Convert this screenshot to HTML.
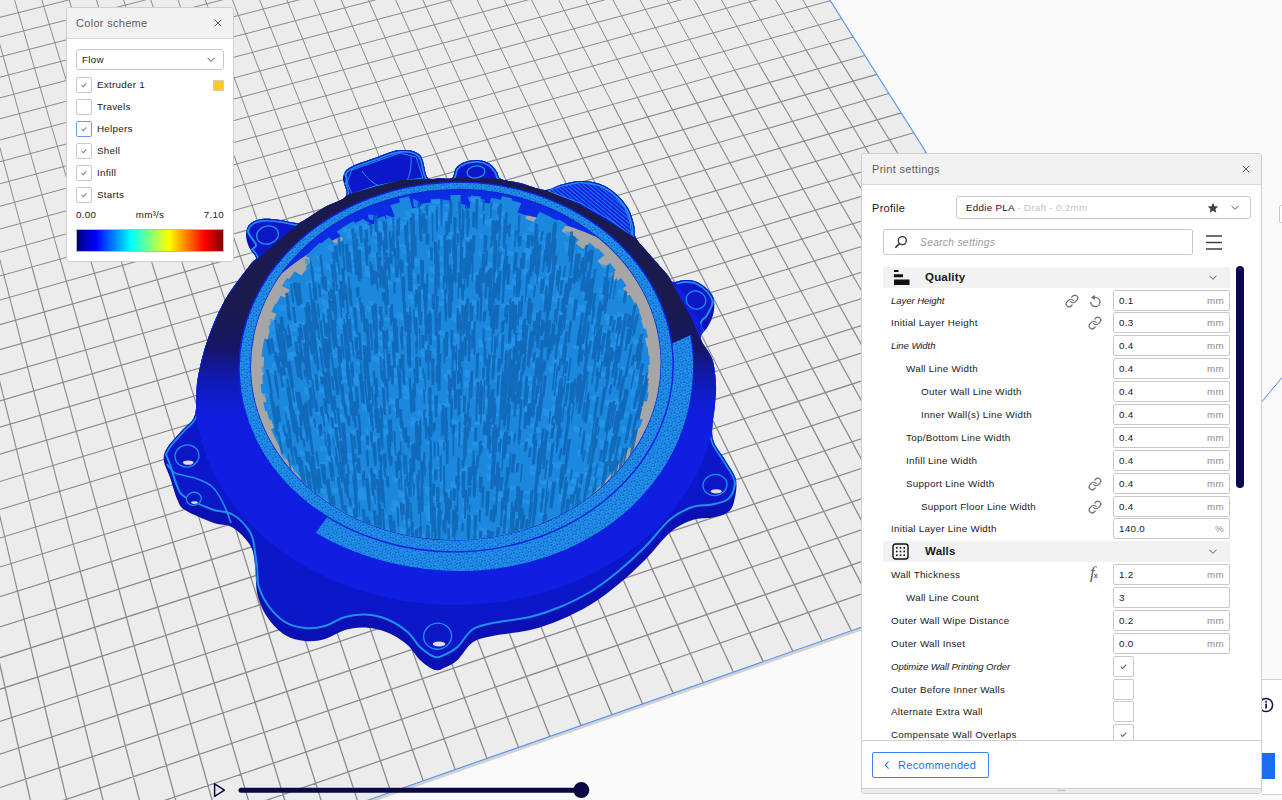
<!DOCTYPE html>
<html><head><meta charset="utf-8"><title>Cura preview</title>
<style>
html,body{margin:0;padding:0;}
body{width:1282px;height:800px;overflow:hidden;position:relative;background:#fafafa;font-family:"Liberation Sans",sans-serif;font-size:9.8px;letter-spacing:.28px;color:#191919;}
#scene{position:absolute;left:0;top:0;display:block;}
.abs{position:absolute;}
.panel{position:absolute;background:#fff;border:1px solid #cfcfcf;border-radius:3px;box-sizing:border-box;overflow:hidden;}
.phead{position:absolute;left:0;top:0;right:0;background:#f2f2f2;border-bottom:1px solid #d6d6d6;box-sizing:border-box;}
.ptitle{position:absolute;font-size:11px;letter-spacing:.3px;color:#5c5c5c;white-space:nowrap;}
.t{position:absolute;white-space:nowrap;line-height:12px;height:12px;}
.it{font-style:italic;font-size:9.6px;letter-spacing:-.08px;}
.cb{position:absolute;width:16px;height:16px;box-sizing:border-box;border:1px solid #c9c9c9;border-radius:2px;background:#fff;}
.cb svg,.cb2 svg{position:absolute;left:0;top:0;}
.cb2{position:absolute;width:21px;height:21px;box-sizing:border-box;border:1px solid #c9c9c9;border-radius:2px;background:#fff;}
.inp{position:absolute;left:251px;width:117px;height:21px;box-sizing:border-box;border:1px solid #c9c9c9;border-radius:2px;background:#fff;}
.inp .v{position:absolute;left:5px;top:4px;line-height:12px;color:#191919;}
.inp .u{position:absolute;right:5px;top:4px;line-height:12px;color:#8c8c8c;}
.cat{position:absolute;left:21px;width:347px;height:21px;background:#f2f2f2;}
.cat b{position:absolute;left:42px;top:4px;font-size:11.5px;line-height:13px;letter-spacing:.2px;color:#191919;}
.ic{position:absolute;}

</style></head><body>
<svg id="scene" width="1282" height="800" viewBox="0 0 1282 800">
<rect width="1282" height="800" fill="#fafafa"/>
<path d="M-460.6 1090.6 L1159.8 522.6 L1159.8 526.1 L-460.6 1094.1Z" fill="#d2d2d2"/>
<path d="M-460.6 1090.6 L1159.8 522.6 L625.4 -323.9 L-535.2 -55.9Z" fill="#ececec"/>
<path d="M-421.9 1077.1L-447.8 737.6M-383.5 1063.6L-413.1 726.6M-345.4 1050.2L-378.5 715.8M-307.5 1037L-344.2 705M-270 1023.8L-310.2 694.2M-232.8 1010.8L-276.4 683.6M-195.8 997.8L-242.8 673M-159.2 985L-209.5 662.6M-122.8 972.2L-176.4 652.1M-86.7 959.6L-143.5 641.8M-50.9 947L-110.9 631.5M-15.4 934.6L-78.5 621.3M19.9 922.2L-46.3 611.2M54.9 909.9L-14.3 601.1M89.7 897.7L17.5 591.1M124.1 885.7L49 581.2M158.4 873.7L80.3 571.4M192.3 861.7L111.4 561.6M226.1 849.9L142.3 551.9M259.5 838.2L173 542.2M292.7 826.6L203.5 532.6M325.7 815L233.8 523.1M358.4 803.5L263.9 513.6M390.9 792.1L293.8 504.2M423.2 780.8L323.5 494.9M455.2 769.6L352.9 485.6M487 758.4L382.2 476.4M518.6 747.4L411.3 467.2M549.9 736.4L440.2 458.1M581 725.5L469 449.1M611.9 714.7L497.5 440.1M642.6 703.9L525.9 431.2M673.1 693.2L554 422.3M703.3 682.6L582 413.5M733.3 672.1L609.8 404.8M763.2 661.6L637.5 396.1M792.8 651.3L664.9 387.4M822.2 641L692.2 378.8M851.4 630.7L719.3 370.3M880.4 620.6L746.3 361.8M909.2 610.5L773 353.4M937.8 600.4L799.6 345M966.2 590.5L826.1 336.7M994.4 580.6L852.3 328.4M1022.5 570.7L878.5 320.2M1050.3 561L904.4 312.1M1078 551.3L930.2 304M1105.4 541.7L955.8 295.9M1132.7 532.1L981.3 287.9M-463.1 1053.1L1143.3 496.4M-465.5 1016.4L1127 470.6M-467.8 980.5L1111 445.3M-470.1 945.3L1095.3 420.4M-472.3 910.8L1079.9 396M-474.5 877L1064.7 372M-476.7 844L1049.8 348.4M-478.8 811.5L1035.2 325.2M-480.9 779.8L1020.8 302.4" stroke="#8c8c90" stroke-width="1.3" fill="none"/>
<path d="M-447.8 737.6L-473 408.4M-413.1 726.6L-441.8 399.7M-378.5 715.8L-410.7 391M-344.2 705L-379.9 382.3M-310.2 694.2L-349.3 373.8M-276.4 683.6L-318.8 365.2M-242.8 673L-288.6 356.8M-209.5 662.6L-258.5 348.3M-176.4 652.1L-228.6 340M-143.5 641.8L-198.9 331.7M-110.9 631.5L-169.4 323.4M-78.5 621.3L-140.1 315.2M-46.3 611.2L-111 307M-14.3 601.1L-82 298.9M17.5 591.1L-53.2 290.9M49 581.2L-24.6 282.8M80.3 571.4L3.8 274.9M111.4 561.6L32 267M142.3 551.9L60.1 259.1M173 542.2L88 251.3M203.5 532.6L115.8 243.5M233.8 523.1L143.4 235.8M263.9 513.6L170.8 228.1M293.8 504.2L198 220.5M323.5 494.9L225.1 212.9M352.9 485.6L252 205.4M382.2 476.4L278.8 197.9M411.3 467.2L305.4 190.4M440.2 458.1L331.8 183M469 449.1L358.1 175.7M497.5 440.1L384.3 168.3M525.9 431.2L410.2 161.1M554 422.3L436.1 153.8M582 413.5L461.8 146.6M609.8 404.8L487.3 139.5M637.5 396.1L512.7 132.4M664.9 387.4L537.9 125.3M692.2 378.8L563 118.3M719.3 370.3L588 111.3M746.3 361.8L612.8 104.3M773 353.4L637.4 97.4M799.6 345L662 90.6M826.1 336.7L686.3 83.7M852.3 328.4L710.6 76.9M878.5 320.2L734.7 70.2M904.4 312.1L758.7 63.5M930.2 304L782.5 56.8M955.8 295.9L806.2 50.2M981.3 287.9L829.8 43.6M-482.9 748.6L1006.6 279.9M-484.9 718L992.7 257.8M-486.8 688.1L979 236.1M-488.7 658.7L965.5 214.8M-490.6 629.8L952.2 193.7M-492.4 601.5L939.1 173.1M-494.3 573.7L926.3 152.7M-496 546.4L913.6 132.7M-497.8 519.7L901.2 112.9M-499.5 493.4L888.9 93.5M-501.2 467.5L876.9 74.4M-502.8 442.1L865 55.5" stroke="#8c8c90" stroke-width="1.15" fill="none"/>
<path d="M-473 408.4L-508.9 -61.9M-441.8 399.7L-482.8 -68M-410.7 391L-456.8 -74M-379.9 382.3L-431 -79.9M-349.3 373.8L-405.3 -85.9M-318.8 365.2L-379.7 -91.8M-288.6 356.8L-354.3 -97.6M-258.5 348.3L-329 -103.5M-228.6 340L-303.8 -109.3M-198.9 331.7L-278.8 -115.1M-169.4 323.4L-253.9 -120.8M-140.1 315.2L-229.1 -126.5M-111 307L-204.4 -132.2M-82 298.9L-179.9 -137.9M-53.2 290.9L-155.5 -143.5M-24.6 282.8L-131.3 -149.1M3.8 274.9L-107.1 -154.7M32 267L-83.1 -160.3M60.1 259.1L-59.2 -165.8M88 251.3L-35.4 -171.3M115.8 243.5L-11.8 -176.7M143.4 235.8L11.8 -182.2M170.8 228.1L35.2 -187.6M198 220.5L58.5 -192.9M225.1 212.9L81.6 -198.3M252 205.4L104.7 -203.6M278.8 197.9L127.7 -208.9M305.4 190.4L150.5 -214.2M331.8 183L173.2 -219.4M358.1 175.7L195.8 -224.7M384.3 168.3L218.3 -229.9M410.2 161.1L240.7 -235M436.1 153.8L263 -240.2M461.8 146.6L285.1 -245.3M487.3 139.5L307.2 -250.4M512.7 132.4L329.1 -255.4M537.9 125.3L351 -260.5M563 118.3L372.7 -265.5M588 111.3L394.3 -270.5M612.8 104.3L415.8 -275.5M637.4 97.4L437.3 -280.4M662 90.6L458.6 -285.3M686.3 83.7L479.8 -290.2M710.6 76.9L500.9 -295.1M734.7 70.2L521.9 -300M758.7 63.5L542.8 -304.8M782.5 56.8L563.6 -309.6M806.2 50.2L584.3 -314.4M829.8 43.6L604.9 -319.1M-504.4 417.2L853.3 37M-506 392.7L841.7 18.7M-507.6 368.6L830.4 0.7M-509.1 345L819.2 -17M-510.6 321.7L808.1 -34.5M-512.1 298.8L797.2 -51.7M-513.6 276.3L786.5 -68.7M-515 254.2L776 -85.4M-516.4 232.5L765.6 -101.9M-517.8 211.1L755.3 -118.2M-519.2 190L745.2 -134.2M-520.5 169.3L735.2 -150M-521.9 148.9L725.4 -165.6M-523.2 128.8L715.6 -181M-524.5 109L706.1 -196.1M-525.7 89.6L696.6 -211.1M-527 70.4L687.3 -225.9M-528.2 51.6L678.1 -240.4M-529.4 33L669 -254.8M-530.6 14.7L660.1 -269M-531.8 -3.4L651.3 -283M-532.9 -21.1L642.5 -296.8M-534.1 -38.6L633.9 -310.4" stroke="#8c8c90" stroke-width="1.0" fill="none"/>

<path d="M-460.6 1090.6L1159.8 522.6L625.4 -323.9" stroke="#5593f2" stroke-width="1.1" fill="none"/>
<path d="M1160 523.7L1290 368" stroke="#4a8cf0" stroke-width="1" fill="none"/>
<defs>
<clipPath id="cSil"><path d="M207.5 340C212.1 326.7 217.9 312.5 225 300C232.1 287.5 244.8 272 250 265C255.2 258 256.2 261 256 258C255.8 255 250.7 251 249 247C247.3 243 245.8 237.8 246 234C246.2 230.2 247.3 226.5 250 224C252.7 221.5 257 219.7 262 219C267 218.3 274.3 219.3 280 220C285.7 220.7 292.2 222.8 296 223C299.8 223.2 298.2 223.7 303 221C307.8 218.3 317.8 211.2 325 207C332.2 202.8 343 200.8 346 196C349 191.2 342.3 182.8 343 178C343.7 173.2 344.7 170.8 350 167.5C355.3 164.2 366.7 160.9 375 158C383.3 155.1 392.5 150.5 400 150C407.5 149.5 415.4 150.4 420 155C424.6 159.6 424.2 173.7 427.5 177.5C430.8 181.3 435.9 177.9 440 178C444.1 178.1 449.3 179.7 452 178C454.7 176.3 453.8 170.7 456 168C458.2 165.3 461.3 163.3 465 162C468.7 160.7 473.8 159.7 478 160C482.2 160.3 486.8 162 490 164C493.2 166 495.2 169.5 497 172C498.8 174.5 497.2 177.2 501 179C504.8 180.8 512.7 181.2 520 183C527.3 184.8 538.3 189.7 545 190C551.7 190.3 554.2 186.5 560 185C565.8 183.5 573.3 181.2 580 181C586.7 180.8 594.2 182 600 184C605.8 186 610.3 189 615 193C619.7 197 624.8 202.7 628 208C631.2 213.3 632.7 220 634 225C635.3 230 633.3 233 636 238C638.7 243 644.8 248.8 650 255C655.2 261.2 663.7 270.5 667.5 275C671.3 279.5 670.1 281.2 673 282C675.9 282.8 681 280 685 280C689 280 693.2 280.3 697 282C700.8 283.7 705.2 287 708 290C710.8 293 713.2 295.8 714 300C714.8 304.2 714.2 310.3 713 315C711.8 319.7 709 324.7 707 328C705 331.3 701.8 332.7 701 335C700.2 337.3 700.1 337.8 702 342C703.9 346.2 710.2 352.8 712.5 360C714.8 367.2 715.6 377.5 716 385C716.4 392.5 715.6 396.2 715 405C714.4 413.8 710.8 428.3 712.5 437.5C714.2 446.7 721.1 452.9 725 460C728.9 467.1 734.5 472.9 736 480C737.5 487.1 735.2 497.1 733.8 502.5C732.3 507.9 731 510 727.5 512.5C724 515 718.3 516.2 712.5 517.5C706.7 518.8 699.6 517.5 692.5 520C685.4 522.5 677.9 525.8 670 532.5C662.1 539.2 653.8 551.2 645 560C636.2 568.8 626.7 577.5 617.5 585C608.3 592.5 599.6 599.2 590 605C580.4 610.8 570 615.8 560 620C550 624.2 541.2 627.3 530 630C518.8 632.7 502.1 633.9 492.5 636C482.9 638.1 478.3 638.5 472.5 642.5C466.7 646.5 462.1 655.8 457.5 660C452.9 664.2 448.8 665.8 445 667.5C441.2 669.2 439.2 671.2 435 670C430.8 668.8 424.6 664.2 420 660C415.4 655.8 412.9 649.6 407.5 645C402.1 640.4 394.6 635.4 387.5 632.5C380.4 629.6 372.1 627.9 365 627.5C357.9 627.1 351.7 628.1 345 630C338.3 631.9 331.7 637.2 325 639C318.3 640.8 311.7 641.7 305 641C298.3 640.3 291.2 638.9 285 635C278.8 631.1 272.1 624.2 267.5 617.5C262.9 610.8 259.6 603.8 257.5 595C255.4 586.2 256.2 573.3 255 565C253.8 556.7 253.8 551.2 250 545C246.2 538.8 238.8 531.2 232.5 527.5C226.2 523.8 220.4 525.4 212.5 522.5C204.6 519.6 190.8 513.8 185 510C179.2 506.2 180 505.4 177.5 500C175 494.6 172.3 484.2 170 477.5C167.7 470.8 164.2 465 163.8 460C163.3 455 164.4 452.5 167.5 447.5C170.6 442.5 177.9 435.4 182.5 430C187.1 424.6 192.5 423.3 195 415C197.5 406.7 195.4 392.5 197.5 380C199.6 367.5 202.9 353.3 207.5 340Z"/></clipPath>
<clipPath id="cSilT"><path d="M207.5 340C212.1 326.7 217.9 312.5 225 300C232.1 287.5 244.8 272 250 265C255.2 258 256.2 261 256 258C255.8 255 250.7 251 249 247C247.3 243 245.8 237.8 246 234C246.2 230.2 247.3 226.5 250 224C252.7 221.5 257 219.7 262 219C267 218.3 274.3 219.3 280 220C285.7 220.7 292.2 222.8 296 223C299.8 223.2 298.2 223.7 303 221C307.8 218.3 317.8 211.2 325 207C332.2 202.8 343 200.8 346 196C349 191.2 342.3 182.8 343 178C343.7 173.2 344.7 170.8 350 167.5C355.3 164.2 366.7 160.9 375 158C383.3 155.1 392.5 150.5 400 150C407.5 149.5 415.4 150.4 420 155C424.6 159.6 424.2 173.7 427.5 177.5C430.8 181.3 435.9 177.9 440 178C444.1 178.1 449.3 179.7 452 178C454.7 176.3 453.8 170.7 456 168C458.2 165.3 461.3 163.3 465 162C468.7 160.7 473.8 159.7 478 160C482.2 160.3 486.8 162 490 164C493.2 166 495.2 169.5 497 172C498.8 174.5 497.2 177.2 501 179C504.8 180.8 512.7 181.2 520 183C527.3 184.8 538.3 189.7 545 190C551.7 190.3 554.2 186.5 560 185C565.8 183.5 573.3 181.2 580 181C586.7 180.8 594.2 182 600 184C605.8 186 610.3 189 615 193C619.7 197 624.8 202.7 628 208C631.2 213.3 632.7 220 634 225C635.3 230 633.3 233 636 238C638.7 243 644.8 248.8 650 255C655.2 261.2 663.7 270.5 667.5 275C671.3 279.5 670.1 281.2 673 282C675.9 282.8 681 280 685 280C689 280 693.2 280.3 697 282C700.8 283.7 705.2 287 708 290C710.8 293 713.2 295.8 714 300C714.8 304.2 714.2 310.3 713 315C711.8 319.7 709 324.7 707 328C705 331.3 701.8 332.7 701 335C700.2 337.3 700.1 337.8 702 342C703.9 346.2 710.2 352.8 712.5 360C714.8 367.2 715.6 377.5 716 385C716.4 392.5 715.6 396.2 715 405C714.4 413.8 710.8 428.3 712.5 437.5C714.2 446.7 721.1 452.9 725 460C728.9 467.1 734.5 472.9 736 480C737.5 487.1 735.2 497.1 733.8 502.5C732.3 507.9 731 510 727.5 512.5C724 515 718.3 516.2 712.5 517.5C706.7 518.8 699.6 517.5 692.5 520C685.4 522.5 677.9 525.8 670 532.5C662.1 539.2 653.8 551.2 645 560C636.2 568.8 626.7 577.5 617.5 585C608.3 592.5 599.6 599.2 590 605C580.4 610.8 570 615.8 560 620C550 624.2 541.2 627.3 530 630C518.8 632.7 502.1 633.9 492.5 636C482.9 638.1 478.3 638.5 472.5 642.5C466.7 646.5 462.1 655.8 457.5 660C452.9 664.2 448.8 665.8 445 667.5C441.2 669.2 439.2 671.2 435 670C430.8 668.8 424.6 664.2 420 660C415.4 655.8 412.9 649.6 407.5 645C402.1 640.4 394.6 635.4 387.5 632.5C380.4 629.6 372.1 627.9 365 627.5C357.9 627.1 351.7 628.1 345 630C338.3 631.9 331.7 637.2 325 639C318.3 640.8 311.7 641.7 305 641C298.3 640.3 291.2 638.9 285 635C278.8 631.1 272.1 624.2 267.5 617.5C262.9 610.8 259.6 603.8 257.5 595C255.4 586.2 256.2 573.3 255 565C253.8 556.7 253.8 551.2 250 545C246.2 538.8 238.8 531.2 232.5 527.5C226.2 523.8 220.4 525.4 212.5 522.5C204.6 519.6 190.8 513.8 185 510C179.2 506.2 180 505.4 177.5 500C175 494.6 172.3 484.2 170 477.5C167.7 470.8 164.2 465 163.8 460C163.3 455 164.4 452.5 167.5 447.5C170.6 442.5 177.9 435.4 182.5 430C187.1 424.6 192.5 423.3 195 415C197.5 406.7 195.4 392.5 197.5 380C199.6 367.5 202.9 353.3 207.5 340Z" transform="translate(0 -13)"/></clipPath>
<clipPath id="cIn"><ellipse cx="455.8" cy="364.7" rx="204.8" ry="175.1" transform="rotate(-1.4 455.8 364.7)" /></clipPath>
<clipPath id="cBand"><path d="M455 368L327 517.5L305 547.5L250 720L760 720L760 304L691 335L671 344Z"/></clipPath>
<pattern id="pRing" width="6" height="6" patternUnits="userSpaceOnUse" patternTransform="rotate(27)"><rect width="6" height="6" fill="#2296ee"/><g fill="#0d48b4"><circle cx="1" cy="1.2" r=".75"/><circle cx="4.2" cy="2.2" r=".85"/><circle cx="2.4" cy="4.4" r=".8"/><circle cx="5.3" cy="5" r=".6"/><circle cx="2.8" cy="0.3" r=".5"/><circle cx="0.3" cy="3.6" r=".55"/></g></pattern>
</defs>
<g id="model">
<path d="M207.5 340C212.1 326.7 217.9 312.5 225 300C232.1 287.5 244.8 272 250 265C255.2 258 256.2 261 256 258C255.8 255 250.7 251 249 247C247.3 243 245.8 237.8 246 234C246.2 230.2 247.3 226.5 250 224C252.7 221.5 257 219.7 262 219C267 218.3 274.3 219.3 280 220C285.7 220.7 292.2 222.8 296 223C299.8 223.2 298.2 223.7 303 221C307.8 218.3 317.8 211.2 325 207C332.2 202.8 343 200.8 346 196C349 191.2 342.3 182.8 343 178C343.7 173.2 344.7 170.8 350 167.5C355.3 164.2 366.7 160.9 375 158C383.3 155.1 392.5 150.5 400 150C407.5 149.5 415.4 150.4 420 155C424.6 159.6 424.2 173.7 427.5 177.5C430.8 181.3 435.9 177.9 440 178C444.1 178.1 449.3 179.7 452 178C454.7 176.3 453.8 170.7 456 168C458.2 165.3 461.3 163.3 465 162C468.7 160.7 473.8 159.7 478 160C482.2 160.3 486.8 162 490 164C493.2 166 495.2 169.5 497 172C498.8 174.5 497.2 177.2 501 179C504.8 180.8 512.7 181.2 520 183C527.3 184.8 538.3 189.7 545 190C551.7 190.3 554.2 186.5 560 185C565.8 183.5 573.3 181.2 580 181C586.7 180.8 594.2 182 600 184C605.8 186 610.3 189 615 193C619.7 197 624.8 202.7 628 208C631.2 213.3 632.7 220 634 225C635.3 230 633.3 233 636 238C638.7 243 644.8 248.8 650 255C655.2 261.2 663.7 270.5 667.5 275C671.3 279.5 670.1 281.2 673 282C675.9 282.8 681 280 685 280C689 280 693.2 280.3 697 282C700.8 283.7 705.2 287 708 290C710.8 293 713.2 295.8 714 300C714.8 304.2 714.2 310.3 713 315C711.8 319.7 709 324.7 707 328C705 331.3 701.8 332.7 701 335C700.2 337.3 700.1 337.8 702 342C703.9 346.2 710.2 352.8 712.5 360C714.8 367.2 715.6 377.5 716 385C716.4 392.5 715.6 396.2 715 405C714.4 413.8 710.8 428.3 712.5 437.5C714.2 446.7 721.1 452.9 725 460C728.9 467.1 734.5 472.9 736 480C737.5 487.1 735.2 497.1 733.8 502.5C732.3 507.9 731 510 727.5 512.5C724 515 718.3 516.2 712.5 517.5C706.7 518.8 699.6 517.5 692.5 520C685.4 522.5 677.9 525.8 670 532.5C662.1 539.2 653.8 551.2 645 560C636.2 568.8 626.7 577.5 617.5 585C608.3 592.5 599.6 599.2 590 605C580.4 610.8 570 615.8 560 620C550 624.2 541.2 627.3 530 630C518.8 632.7 502.1 633.9 492.5 636C482.9 638.1 478.3 638.5 472.5 642.5C466.7 646.5 462.1 655.8 457.5 660C452.9 664.2 448.8 665.8 445 667.5C441.2 669.2 439.2 671.2 435 670C430.8 668.8 424.6 664.2 420 660C415.4 655.8 412.9 649.6 407.5 645C402.1 640.4 394.6 635.4 387.5 632.5C380.4 629.6 372.1 627.9 365 627.5C357.9 627.1 351.7 628.1 345 630C338.3 631.9 331.7 637.2 325 639C318.3 640.8 311.7 641.7 305 641C298.3 640.3 291.2 638.9 285 635C278.8 631.1 272.1 624.2 267.5 617.5C262.9 610.8 259.6 603.8 257.5 595C255.4 586.2 256.2 573.3 255 565C253.8 556.7 253.8 551.2 250 545C246.2 538.8 238.8 531.2 232.5 527.5C226.2 523.8 220.4 525.4 212.5 522.5C204.6 519.6 190.8 513.8 185 510C179.2 506.2 180 505.4 177.5 500C175 494.6 172.3 484.2 170 477.5C167.7 470.8 164.2 465 163.8 460C163.3 455 164.4 452.5 167.5 447.5C170.6 442.5 177.9 435.4 182.5 430C187.1 424.6 192.5 423.3 195 415C197.5 406.7 195.4 392.5 197.5 380C199.6 367.5 202.9 353.3 207.5 340Z" fill="#0a10b4"/>
<g clip-path="url(#cSil)"><path d="M207.5 340C212.1 326.7 217.9 312.5 225 300C232.1 287.5 244.8 272 250 265C255.2 258 256.2 261 256 258C255.8 255 250.7 251 249 247C247.3 243 245.8 237.8 246 234C246.2 230.2 247.3 226.5 250 224C252.7 221.5 257 219.7 262 219C267 218.3 274.3 219.3 280 220C285.7 220.7 292.2 222.8 296 223C299.8 223.2 298.2 223.7 303 221C307.8 218.3 317.8 211.2 325 207C332.2 202.8 343 200.8 346 196C349 191.2 342.3 182.8 343 178C343.7 173.2 344.7 170.8 350 167.5C355.3 164.2 366.7 160.9 375 158C383.3 155.1 392.5 150.5 400 150C407.5 149.5 415.4 150.4 420 155C424.6 159.6 424.2 173.7 427.5 177.5C430.8 181.3 435.9 177.9 440 178C444.1 178.1 449.3 179.7 452 178C454.7 176.3 453.8 170.7 456 168C458.2 165.3 461.3 163.3 465 162C468.7 160.7 473.8 159.7 478 160C482.2 160.3 486.8 162 490 164C493.2 166 495.2 169.5 497 172C498.8 174.5 497.2 177.2 501 179C504.8 180.8 512.7 181.2 520 183C527.3 184.8 538.3 189.7 545 190C551.7 190.3 554.2 186.5 560 185C565.8 183.5 573.3 181.2 580 181C586.7 180.8 594.2 182 600 184C605.8 186 610.3 189 615 193C619.7 197 624.8 202.7 628 208C631.2 213.3 632.7 220 634 225C635.3 230 633.3 233 636 238C638.7 243 644.8 248.8 650 255C655.2 261.2 663.7 270.5 667.5 275C671.3 279.5 670.1 281.2 673 282C675.9 282.8 681 280 685 280C689 280 693.2 280.3 697 282C700.8 283.7 705.2 287 708 290C710.8 293 713.2 295.8 714 300C714.8 304.2 714.2 310.3 713 315C711.8 319.7 709 324.7 707 328C705 331.3 701.8 332.7 701 335C700.2 337.3 700.1 337.8 702 342C703.9 346.2 710.2 352.8 712.5 360C714.8 367.2 715.6 377.5 716 385C716.4 392.5 715.6 396.2 715 405C714.4 413.8 710.8 428.3 712.5 437.5C714.2 446.7 721.1 452.9 725 460C728.9 467.1 734.5 472.9 736 480C737.5 487.1 735.2 497.1 733.8 502.5C732.3 507.9 731 510 727.5 512.5C724 515 718.3 516.2 712.5 517.5C706.7 518.8 699.6 517.5 692.5 520C685.4 522.5 677.9 525.8 670 532.5C662.1 539.2 653.8 551.2 645 560C636.2 568.8 626.7 577.5 617.5 585C608.3 592.5 599.6 599.2 590 605C580.4 610.8 570 615.8 560 620C550 624.2 541.2 627.3 530 630C518.8 632.7 502.1 633.9 492.5 636C482.9 638.1 478.3 638.5 472.5 642.5C466.7 646.5 462.1 655.8 457.5 660C452.9 664.2 448.8 665.8 445 667.5C441.2 669.2 439.2 671.2 435 670C430.8 668.8 424.6 664.2 420 660C415.4 655.8 412.9 649.6 407.5 645C402.1 640.4 394.6 635.4 387.5 632.5C380.4 629.6 372.1 627.9 365 627.5C357.9 627.1 351.7 628.1 345 630C338.3 631.9 331.7 637.2 325 639C318.3 640.8 311.7 641.7 305 641C298.3 640.3 291.2 638.9 285 635C278.8 631.1 272.1 624.2 267.5 617.5C262.9 610.8 259.6 603.8 257.5 595C255.4 586.2 256.2 573.3 255 565C253.8 556.7 253.8 551.2 250 545C246.2 538.8 238.8 531.2 232.5 527.5C226.2 523.8 220.4 525.4 212.5 522.5C204.6 519.6 190.8 513.8 185 510C179.2 506.2 180 505.4 177.5 500C175 494.6 172.3 484.2 170 477.5C167.7 470.8 164.2 465 163.8 460C163.3 455 164.4 452.5 167.5 447.5C170.6 442.5 177.9 435.4 182.5 430C187.1 424.6 192.5 423.3 195 415C197.5 406.7 195.4 392.5 197.5 380C199.6 367.5 202.9 353.3 207.5 340Z" transform="translate(0 -13)" fill="#0c17ca" stroke="#1e90ee" stroke-width="2"/>
<g clip-path="url(#cSilT)"><path d="M207.5 340C212.1 326.7 217.9 312.5 225 300C232.1 287.5 244.8 272 250 265C255.2 258 256.2 261 256 258C255.8 255 250.7 251 249 247C247.3 243 245.8 237.8 246 234C246.2 230.2 247.3 226.5 250 224C252.7 221.5 257 219.7 262 219C267 218.3 274.3 219.3 280 220C285.7 220.7 292.2 222.8 296 223C299.8 223.2 298.2 223.7 303 221C307.8 218.3 317.8 211.2 325 207C332.2 202.8 343 200.8 346 196C349 191.2 342.3 182.8 343 178C343.7 173.2 344.7 170.8 350 167.5C355.3 164.2 366.7 160.9 375 158C383.3 155.1 392.5 150.5 400 150C407.5 149.5 415.4 150.4 420 155C424.6 159.6 424.2 173.7 427.5 177.5C430.8 181.3 435.9 177.9 440 178C444.1 178.1 449.3 179.7 452 178C454.7 176.3 453.8 170.7 456 168C458.2 165.3 461.3 163.3 465 162C468.7 160.7 473.8 159.7 478 160C482.2 160.3 486.8 162 490 164C493.2 166 495.2 169.5 497 172C498.8 174.5 497.2 177.2 501 179C504.8 180.8 512.7 181.2 520 183C527.3 184.8 538.3 189.7 545 190C551.7 190.3 554.2 186.5 560 185C565.8 183.5 573.3 181.2 580 181C586.7 180.8 594.2 182 600 184C605.8 186 610.3 189 615 193C619.7 197 624.8 202.7 628 208C631.2 213.3 632.7 220 634 225C635.3 230 633.3 233 636 238C638.7 243 644.8 248.8 650 255C655.2 261.2 663.7 270.5 667.5 275C671.3 279.5 670.1 281.2 673 282C675.9 282.8 681 280 685 280C689 280 693.2 280.3 697 282C700.8 283.7 705.2 287 708 290C710.8 293 713.2 295.8 714 300C714.8 304.2 714.2 310.3 713 315C711.8 319.7 709 324.7 707 328C705 331.3 701.8 332.7 701 335C700.2 337.3 700.1 337.8 702 342C703.9 346.2 710.2 352.8 712.5 360C714.8 367.2 715.6 377.5 716 385C716.4 392.5 715.6 396.2 715 405C714.4 413.8 710.8 428.3 712.5 437.5C714.2 446.7 721.1 452.9 725 460C728.9 467.1 734.5 472.9 736 480C737.5 487.1 735.2 497.1 733.8 502.5C732.3 507.9 731 510 727.5 512.5C724 515 718.3 516.2 712.5 517.5C706.7 518.8 699.6 517.5 692.5 520C685.4 522.5 677.9 525.8 670 532.5C662.1 539.2 653.8 551.2 645 560C636.2 568.8 626.7 577.5 617.5 585C608.3 592.5 599.6 599.2 590 605C580.4 610.8 570 615.8 560 620C550 624.2 541.2 627.3 530 630C518.8 632.7 502.1 633.9 492.5 636C482.9 638.1 478.3 638.5 472.5 642.5C466.7 646.5 462.1 655.8 457.5 660C452.9 664.2 448.8 665.8 445 667.5C441.2 669.2 439.2 671.2 435 670C430.8 668.8 424.6 664.2 420 660C415.4 655.8 412.9 649.6 407.5 645C402.1 640.4 394.6 635.4 387.5 632.5C380.4 629.6 372.1 627.9 365 627.5C357.9 627.1 351.7 628.1 345 630C338.3 631.9 331.7 637.2 325 639C318.3 640.8 311.7 641.7 305 641C298.3 640.3 291.2 638.9 285 635C278.8 631.1 272.1 624.2 267.5 617.5C262.9 610.8 259.6 603.8 257.5 595C255.4 586.2 256.2 573.3 255 565C253.8 556.7 253.8 551.2 250 545C246.2 538.8 238.8 531.2 232.5 527.5C226.2 523.8 220.4 525.4 212.5 522.5C204.6 519.6 190.8 513.8 185 510C179.2 506.2 180 505.4 177.5 500C175 494.6 172.3 484.2 170 477.5C167.7 470.8 164.2 465 163.8 460C163.3 455 164.4 452.5 167.5 447.5C170.6 442.5 177.9 435.4 182.5 430C187.1 424.6 192.5 423.3 195 415C197.5 406.7 195.4 392.5 197.5 380C199.6 367.5 202.9 353.3 207.5 340Z" fill="none" stroke="#1e90ee" stroke-width="5.4"/><path d="M207.5 340C212.1 326.7 217.9 312.5 225 300C232.1 287.5 244.8 272 250 265C255.2 258 256.2 261 256 258C255.8 255 250.7 251 249 247C247.3 243 245.8 237.8 246 234C246.2 230.2 247.3 226.5 250 224C252.7 221.5 257 219.7 262 219C267 218.3 274.3 219.3 280 220C285.7 220.7 292.2 222.8 296 223C299.8 223.2 298.2 223.7 303 221C307.8 218.3 317.8 211.2 325 207C332.2 202.8 343 200.8 346 196C349 191.2 342.3 182.8 343 178C343.7 173.2 344.7 170.8 350 167.5C355.3 164.2 366.7 160.9 375 158C383.3 155.1 392.5 150.5 400 150C407.5 149.5 415.4 150.4 420 155C424.6 159.6 424.2 173.7 427.5 177.5C430.8 181.3 435.9 177.9 440 178C444.1 178.1 449.3 179.7 452 178C454.7 176.3 453.8 170.7 456 168C458.2 165.3 461.3 163.3 465 162C468.7 160.7 473.8 159.7 478 160C482.2 160.3 486.8 162 490 164C493.2 166 495.2 169.5 497 172C498.8 174.5 497.2 177.2 501 179C504.8 180.8 512.7 181.2 520 183C527.3 184.8 538.3 189.7 545 190C551.7 190.3 554.2 186.5 560 185C565.8 183.5 573.3 181.2 580 181C586.7 180.8 594.2 182 600 184C605.8 186 610.3 189 615 193C619.7 197 624.8 202.7 628 208C631.2 213.3 632.7 220 634 225C635.3 230 633.3 233 636 238C638.7 243 644.8 248.8 650 255C655.2 261.2 663.7 270.5 667.5 275C671.3 279.5 670.1 281.2 673 282C675.9 282.8 681 280 685 280C689 280 693.2 280.3 697 282C700.8 283.7 705.2 287 708 290C710.8 293 713.2 295.8 714 300C714.8 304.2 714.2 310.3 713 315C711.8 319.7 709 324.7 707 328C705 331.3 701.8 332.7 701 335C700.2 337.3 700.1 337.8 702 342C703.9 346.2 710.2 352.8 712.5 360C714.8 367.2 715.6 377.5 716 385C716.4 392.5 715.6 396.2 715 405C714.4 413.8 710.8 428.3 712.5 437.5C714.2 446.7 721.1 452.9 725 460C728.9 467.1 734.5 472.9 736 480C737.5 487.1 735.2 497.1 733.8 502.5C732.3 507.9 731 510 727.5 512.5C724 515 718.3 516.2 712.5 517.5C706.7 518.8 699.6 517.5 692.5 520C685.4 522.5 677.9 525.8 670 532.5C662.1 539.2 653.8 551.2 645 560C636.2 568.8 626.7 577.5 617.5 585C608.3 592.5 599.6 599.2 590 605C580.4 610.8 570 615.8 560 620C550 624.2 541.2 627.3 530 630C518.8 632.7 502.1 633.9 492.5 636C482.9 638.1 478.3 638.5 472.5 642.5C466.7 646.5 462.1 655.8 457.5 660C452.9 664.2 448.8 665.8 445 667.5C441.2 669.2 439.2 671.2 435 670C430.8 668.8 424.6 664.2 420 660C415.4 655.8 412.9 649.6 407.5 645C402.1 640.4 394.6 635.4 387.5 632.5C380.4 629.6 372.1 627.9 365 627.5C357.9 627.1 351.7 628.1 345 630C338.3 631.9 331.7 637.2 325 639C318.3 640.8 311.7 641.7 305 641C298.3 640.3 291.2 638.9 285 635C278.8 631.1 272.1 624.2 267.5 617.5C262.9 610.8 259.6 603.8 257.5 595C255.4 586.2 256.2 573.3 255 565C253.8 556.7 253.8 551.2 250 545C246.2 538.8 238.8 531.2 232.5 527.5C226.2 523.8 220.4 525.4 212.5 522.5C204.6 519.6 190.8 513.8 185 510C179.2 506.2 180 505.4 177.5 500C175 494.6 172.3 484.2 170 477.5C167.7 470.8 164.2 465 163.8 460C163.3 455 164.4 452.5 167.5 447.5C170.6 442.5 177.9 435.4 182.5 430C187.1 424.6 192.5 423.3 195 415C197.5 406.7 195.4 392.5 197.5 380C199.6 367.5 202.9 353.3 207.5 340Z" fill="none" stroke="#0c17ca" stroke-width="2.2"/></g>
<ellipse cx="226" cy="441" rx="9" ry="3.5" transform="rotate(-62 226 441)" fill="#101070" opacity=".0"/>
<ellipse cx="221" cy="392" rx="12" ry="4" transform="rotate(-80 221 392)" fill="#101070" opacity=".0"/>
<ellipse cx="232" cy="470" rx="8" ry="3" transform="rotate(-50 232 470)" fill="#101070" opacity=".0"/>
<ellipse cx="705" cy="385" rx="10" ry="4" transform="rotate(80 705 385)" fill="#101070" opacity=".0"/>
<ellipse cx="590" cy="585" rx="16" ry="4" transform="rotate(-35 590 585)" fill="#101070" opacity=".0"/>
<ellipse cx="330" cy="585" rx="14" ry="4" transform="rotate(25 330 585)" fill="#101070" opacity=".0"/>
<ellipse cx="455.5" cy="395" rx="260.5" ry="210" fill="#0f1ee0"/>
</g>
<pattern id="pHatch" width="3" height="3" patternUnits="userSpaceOnUse" patternTransform="rotate(40)"><rect width="3" height="3" fill="#0f1ee0"/><rect width="3" height="1.1" fill="#1e78ee"/></pattern>
<path d="M548 191L562 186L580 182.5L599 185.5L613 194L625 208L630 222L632 236L610 220L580 203Z" fill="url(#pHatch)" stroke="#1e90ee" stroke-width="1"/>
<path d="M352 170L400 153L416 157L423 178L400 181L375 186L352 194L347 182Z" fill="none" stroke="#1e90ee" stroke-width="1"/>
<path d="M362 171C372 186 390 192 398 190C408 186 412 170 411 157" fill="none" stroke="#1e90ee" stroke-width="1"/>
<linearGradient id="gNavy" gradientUnits="userSpaceOnUse" x1="0" y1="310" x2="0" y2="425"><stop offset="0" stop-color="#1a1a4e"/><stop offset=".35" stop-color="#15156a"/><stop offset="1" stop-color="#0f1cd0" stop-opacity="0"/></linearGradient>
<g clip-path="url(#cSil)"><path d="M193 432 L195 415 L197.5 380 L207.5 340 L225 300 L250 265 L300 222.5 L325 207 L350 193.8 L400 180 L470 177.5 L501 179 L545 190 L580 205 L636 238 L667.5 275 L690 315 L702 342 L712.5 360 L716 385 L715 405 L712.5 437.5 L600 437 L300 432 Z" fill="url(#gNavy)"/></g>
<g clip-path="url(#cBand)"><ellipse cx="443.8" cy="353.9" rx="251.2" ry="216.1" transform="rotate(12.1 443.8 353.9)" fill="url(#pRing)" stroke="#0c22dc" stroke-width="1.2"/></g>
<ellipse cx="456.1" cy="367" rx="217.1" ry="184.8" transform="rotate(-1.8 456.1 367)" fill="url(#pRing)" stroke="#0c22dc" stroke-width="1.4"/>
<ellipse cx="455.8" cy="364.7" rx="204.8" ry="175.1" transform="rotate(-1.4 455.8 364.7)" fill="#0c2ce4" stroke="#0a28d0" stroke-width="1.5"/>
<g clip-path="url(#cIn)">
<ellipse cx="468" cy="400" rx="250" ry="190" fill="#a6a6a6"/>

<path d="M648.4 364.9 L648.4 374 L647.7 374 L647.1 383.1 L648.6 383.2 L647.5 392.2 L648.7 392.4 L647.1 401.5 L643.4 400.9 L641.3 409.7 L641.3 409.7 L638.7 418.4 L642.8 419.5 L639.6 428.2 L638.6 427.9 L634.9 436.5 L630.8 444.9 L626.1 453 L621 461 L615.4 468.7 L609.4 476.1 L602.9 483.3 L596.1 490.1 L588.8 496.6 L581.2 502.7 L573.3 508.5 L565 513.9 L556.4 519 L547.6 523.6 L538.5 527.7 L529.1 531.5 L519.6 534.8 L509.9 537.7 L500 540.1 L490 542 L479.9 543.4 L469.8 544.4 L459.6 544.9 L449.4 545 L439.2 544.5 L429 543.6 L419 542.2 L409 540.3 L399.1 538 L389.4 535.1 L379.9 531.9 L370.6 528.2 L361.5 524.1 L352.7 519.5 L344.1 514.5 L335.9 509.2 L328 503.4 L320.4 497.3 L313.2 490.9 L306.4 484.1 L300 477 L294 469.6 L288.5 461.9 L283.4 454 L278.8 445.8 L274.7 437.5 L271 428.9 L274.1 427.9 L271 419.4 L269.3 419.8 L266.7 411 L265.3 411.4 L263.2 402.4 L266.4 401.9 L264.8 393 L261.6 393.4 L260.6 384.3 L262.8 384.1 L262.3 375 L263.4 375 L263.4 366 L263.6 366 L264.1 357 L261.5 356.8 L262.6 347.8 L262.7 347.8 L264.3 338.8 L267.7 339.3 L269.8 330.6 L268.7 330.3 L271.4 321.6 L273.2 322.1 L276.3 313.6 L271.4 312.1 L275.1 303.5 L276.4 304 L280.5 295.7 L285.2 297.7 L289.7 289.8 L282 286 L287.1 278 L289 279 L294.6 271.3 L301.3 275.4 L307.1 268.3 L305.4 267.1 L311.7 260.3 L306 255.9 L312.9 249 L312.8 249 L320.1 242.4 L321.2 243.4 L328.8 237.3 L335.8 244.6 L343.3 239.2 L336.7 231.5 L345 226.1 L345 226.1 L353.6 221 L355 223.2 L363.8 218.7 L368.4 226.4 L377 222.5 L375.4 219.5 L384.3 216 L385.9 219.6 L394.8 216.5 L390.4 205.2 L400.1 202.3 L398.9 198.7 L409 196.2 L412.2 208.5 L421.7 206.7 L421.2 203.8 L430.9 202.4 L430.5 199.5 L440.5 198.5 L441 204.5 L450.7 204.1 L450.4 195.1 L460.6 195 L460.2 208 L469.7 208.4 L470.8 195.5 L481 196.4 L480.1 202.2 L489.8 203.6 L491 197.8 L501 199.7 L502 196 L512.1 198.4 L511.5 200.3 L521.3 203.1 L517.5 212.5 L526.6 215.6 L525.2 218.6 L533.9 222.1 L539.4 211.8 L548.5 215.9 L548.5 215.9 L557.3 220.5 L558.2 219.2 L566.9 224.2 L561.6 231 L569.6 236.2 L571.2 234.2 L578.9 239.8 L575.6 243.3 L582.9 249.1 L589.6 242.7 L596.8 249.1 L597.8 248.3 L604.6 255.2 L597.4 260.7 L603.5 267.5 L610 263 L616 270.4 L610.1 274.1 L615.5 281.5 L621.5 278.1 L626.6 286 L622.9 287.9 L627.4 295.8 L630 294.7 L634.1 303 L636.1 302.3 L639.7 310.8 L639 311.1 L642.1 319.8 L641.1 320.1 L643.7 328.8 L645.9 328.4 L648 337.4 L645.1 337.9 L646.7 346.8 L647.6 346.7 L648.6 355.8 L649.4 355.7 L649.9 364.9 Z" fill="#1b88de"/>
<path d="M612.9 320.3L619.4 321.6L618.4 325.9L613.9 324.9ZM484.8 219.9L493.6 220.6L492.6 223.9L485.8 222.9ZM561.2 481.2L565.6 481.4L564.6 485.5L562.2 484.5ZM365.1 396.7L373.8 397.3L372.8 401.7L366.1 400.7ZM442.6 269.5L447.5 271.4L446.5 276L443.6 275ZM299.6 343.3L304.8 345.7L303.8 349L300.6 348ZM577.8 259.6L582.4 258.8L581.4 265.3L578.8 264.3ZM506 452.9L512 453.9L511 458.5L507 457.5ZM403.3 262.5L410.2 261.7L409.2 266.9L404.3 265.9ZM489.1 218.6L495.5 219.6L494.5 223.1L490.1 222.1ZM633.7 361L641.1 363.1L640.1 368.2L634.7 367.2ZM626.4 320.7L630.8 321.6L629.8 328L627.4 327ZM605.4 317.3L613.3 319.5L612.3 325.5L606.4 324.5ZM379.2 419.6L387.6 420.1L386.6 424.8L380.2 423.8ZM531.8 356.7L538.7 357.1L537.7 362L532.8 361ZM486.6 401L494.6 403.6L493.6 409.5L487.6 408.5ZM543.3 242L549.8 243.7L548.8 249.8L544.3 248.8ZM556.3 407.1L560.6 408L559.6 413.7L557.3 412.7ZM436.7 467.3L443 466.8L442 469.9L437.7 468.9ZM634.1 407.7L639.3 407.1L638.3 412.2L635.1 411.2ZM601 264.1L607.1 265.9L606.1 269.8L602 268.8ZM292.6 464.3L298.9 466.9L297.9 472.9L293.6 471.9ZM512.7 271.7L517.1 273.3L516.1 277.8L513.7 276.8ZM424.9 441.6L433.5 441.1L432.5 445L425.9 444ZM545.7 480.2L552.3 481.9L551.3 486.9L546.7 485.9ZM356.3 472.7L361.6 474.9L360.6 480.3L357.3 479.3ZM351.6 238.3L355.8 237.6L354.8 243.4L352.6 242.4ZM634.5 375.9L641.2 375L640.2 381.5L635.5 380.5ZM364.2 270.7L373.1 270.3L372.1 277.2L365.2 276.2ZM483.9 435.7L489.5 437.4L488.5 444.4L484.9 443.4ZM329.3 259.3L337.1 259L336.1 262.4L330.3 261.4ZM441.5 293.5L447.7 294.5L446.7 300.3L442.5 299.3ZM502.9 223.9L507.2 224.8L506.2 227.9L503.9 226.9ZM341.2 286.2L347.8 287.3L346.8 293.3L342.2 292.3ZM565.5 491.8L573.7 491.1L572.7 494.5L566.5 493.5ZM498.4 263.3L503.1 264.4L502.1 269.3L499.4 268.3ZM460.7 302.6L469.6 304.1L468.6 311.1L461.7 310.1ZM543.2 287.1L549 286.6L548 291.6L544.2 290.6ZM401.8 249L407.6 250.7L406.6 254.2L402.8 253.2ZM401.8 499L406.1 499.5L405.1 505.1L402.8 504.1ZM402.9 502L410 501.5L409 505.1L403.9 504.1ZM436.5 512.8L444.2 514.2L443.2 519.8L437.5 518.8ZM337.4 362.9L345.5 364.1L344.5 369.3L338.4 368.3ZM377.5 461L383.1 460.7L382.1 465.2L378.5 464.2ZM591.4 328.7L598.2 329L597.2 333.4L592.4 332.4ZM455.5 471.9L461.7 471.6L460.7 475.9L456.5 474.9ZM612.4 380.1L621.3 379.8L620.3 383.2L613.4 382.2ZM523.6 491.1L530.4 491.3L529.4 494.4L524.6 493.4ZM626.3 412.3L635 414.3L634 418L627.3 417ZM355.4 302.9L361.4 305.7L360.4 311.3L356.4 310.3ZM501.3 222L508.9 223.4L507.9 227.8L502.3 226.8ZM286.6 410.5L293.6 413.3L292.6 419.9L287.6 418.9ZM411.8 441.2L416.2 443.5L415.2 447.1L412.8 446.1ZM419.2 233.2L427 233.1L426 237.7L420.2 236.7ZM367.9 475.3L373.5 476.4L372.5 482.3L368.9 481.3ZM297.9 367.6L303.1 368.8L302.1 375.2L298.9 374.2ZM557.1 401.1L563.5 403.5L562.5 408.7L558.1 407.7ZM557 296L561.9 297.9L560.9 301.8L558 300.8ZM340 378L348.4 379.2L347.4 383.1L341 382.1ZM395.2 499.6L399.6 501.9L398.6 507L396.2 506ZM487 463.4L491.2 466.2L490.2 470.6L488 469.6ZM538.5 513.9L542.9 514.9L541.9 518L539.5 517ZM437.4 338.8L443.4 337.9L442.4 341.9L438.4 340.9ZM509.3 340.8L517.1 341.2L516.1 347.5L510.3 346.5ZM399.4 336.8L406.3 336.7L405.3 341.2L400.4 340.2ZM301.3 475L307 477.3L306 480.9L302.3 479.9ZM501.9 492.4L506.1 494.8L505.1 501.6L502.9 500.6ZM505.6 301.7L509.6 302.9L508.6 309.8L506.6 308.8ZM422.9 411.7L428.7 411.5L427.7 416L423.9 415ZM603.4 424L607.9 423.5L606.9 427L604.4 426ZM485.4 282.6L494.2 283.3L493.2 288.2L486.4 287.2ZM490.7 278.3L496.3 278.1L495.3 282.6L491.7 281.6ZM348.3 461.9L355.7 463.9L354.7 470.5L349.3 469.5ZM458.6 492.7L464.3 494.8L463.3 498.1L459.6 497.1ZM539 455.9L543.2 456.5L542.2 461.4L540 460.4ZM471 298.9L476.8 301.3L475.8 307.6L472 306.6ZM483.6 395.2L487.9 397.5L486.9 400.6L484.6 399.6ZM284.7 408.9L292 409.4L291 414.1L285.7 413.1ZM447.6 218L453.4 217.3L452.4 222.1L448.6 221.1ZM273.7 425.2L282.2 424.4L281.2 431.1L274.7 430.1ZM339.4 504.2L343.5 504.7L342.5 508.1L340.4 507.1ZM458.5 428.3L463.6 427.5L462.6 430.6L459.5 429.6ZM606.5 457L614.4 458.8L613.4 464.4L607.5 463.4ZM551.1 404.6L557.7 405.7L556.7 409.1L552.1 408.1ZM262.6 393.1L269.2 393.1L268.2 397.3L263.6 396.3ZM281.4 438.6L288.3 438.3L287.3 442L282.4 441ZM548.1 366.6L556.7 366.6L555.7 373.2L549.1 372.2ZM409.9 421.8L418.9 421.1L417.9 426.6L410.9 425.6ZM292.4 402.1L300.8 402.9L299.8 407.7L293.4 406.7ZM371.9 355.2L379.3 357.1L378.3 362.1L372.9 361.1ZM546.2 485.1L551.9 484.3L550.9 488.2L547.2 487.2ZM508.6 261.5L513.2 263.4L512.2 270L509.6 269ZM345.6 453.1L352.9 453.4L351.9 459.8L346.6 458.8ZM504.8 502L511 502.2L510 506.2L505.8 505.2ZM603.8 278.9L607.9 279.8L606.9 286.3L604.8 285.3ZM284.3 280.7L292.6 282.9L291.6 287.8L285.3 286.8ZM431.3 199.7L440.3 200.6L439.3 204.4L432.3 203.4ZM618.7 449.7L623.1 450.2L622.1 456.8L619.7 455.8ZM427.2 250.2L434.8 252.6L433.8 258.8L428.2 257.8ZM508.5 485.9L516.4 485.7L515.4 490.6L509.5 489.6ZM561.1 318.5L569.6 320.3L568.6 323.9L562.1 322.9ZM397.1 222.7L404 224.8L403 230.5L398.1 229.5ZM487.3 396.9L493.3 397.5L492.3 402.6L488.3 401.6ZM512.1 235.7L518.5 235.9L517.5 242.6L513.1 241.6ZM342.1 251.5L348.6 252.6L347.6 256.8L343.1 255.8ZM283.1 362.8L287.6 364.5L286.6 370.1L284.1 369.1ZM556 387.9L561.4 388.9L560.4 393.4L557 392.4ZM401.4 389.1L409.6 389L408.6 393.9L402.4 392.9ZM265.7 367.5L274.1 370.3L273.1 373.6L266.7 372.6ZM494.8 414.3L503.4 413.8L502.4 416.9L495.8 415.9ZM298.6 303.9L305.5 303.3L304.5 308.6L299.6 307.6ZM444.8 377.1L449.1 377.8L448.1 383.5L445.8 382.5ZM306 464.1L312.1 464.5L311.1 467.5L307 466.5ZM612.3 322.7L619.1 323.1L618.1 328L613.3 327ZM477.6 535L483.9 536.7L482.9 542.5L478.6 541.5ZM348.8 247.6L357.2 250L356.2 257L349.8 256ZM461.2 467.9L469.1 467L468.1 472.9L462.2 471.9ZM367.9 214.3L373.8 215.1L372.8 220.3L368.9 219.3ZM385.5 214.8L392 216.9L391 220.7L386.5 219.7ZM441.9 495.6L447.3 498.2L446.3 503.7L442.9 502.7ZM327.4 499.1L331.9 499.8L330.9 504.6L328.4 503.6ZM489.3 240.6L493.5 240.8L492.5 245.3L490.3 244.3ZM277.7 304.5L286 306.5L285 311L278.7 310ZM529.7 254.3L538.3 255.2L537.3 259.3L530.7 258.3ZM538.1 460.3L545.8 461.6L544.8 466.9L539.1 465.9ZM503 360.3L511 359.8L510 366.4L504 365.4ZM431.3 514.5L437.2 514.4L436.2 520.4L432.3 519.4ZM372.8 275.6L379 276.9L378 283.4L373.8 282.4ZM346.3 232.5L354.3 233.2L353.3 239.9L347.3 238.9ZM414.7 284.1L422.8 286.5L421.8 293.4L415.7 292.4ZM550.5 255.4L554.5 256.4L553.5 262.1L551.5 261.1ZM449.6 316.3L457.4 316.7L456.4 320.2L450.6 319.2ZM593.1 394.2L597.2 396.7L596.2 402.9L594.1 401.9ZM539.7 284.2L545.5 286.5L544.5 289.9L540.7 288.9ZM521.5 403.8L527.5 404L526.5 410.3L522.5 409.3ZM582.5 391L587.2 392.5L586.2 398.3L583.5 397.3ZM590.9 425.8L598.2 427.1L597.2 431L591.9 430ZM422.9 210.9L431.5 211.4L430.5 216.9L423.9 215.9ZM382.1 252.2L389 253.4L388 260.2L383.1 259.2ZM356.4 352.9L364.9 353.9L363.9 358.2L357.4 357.2ZM374.7 259.4L383.5 261.1L382.5 265.4L375.7 264.4ZM352.2 501.5L358 502.4L357 508.1L353.2 507.1ZM350.7 414.3L357.5 415.7L356.5 419.2L351.7 418.2ZM584.2 291.9L590 292.8L589 297.2L585.2 296.2ZM481.5 420.6L488.2 421.9L487.2 428.1L482.5 427.1ZM395.2 276.7L400.8 276.2L399.8 283.1L396.2 282.1ZM344.5 507.3L352.6 508.6L351.6 514.5L345.5 513.5ZM429.7 208.8L435.7 209.2L434.7 214.3L430.7 213.3ZM317.6 340.9L325.3 342.4L324.3 345.8L318.6 344.8ZM388 222.2L396.7 221.3L395.7 226.3L389 225.3ZM495.6 377.7L502.4 378.4L501.4 381.8L496.6 380.8ZM493.9 445.4L502.5 448L501.5 452.6L494.9 451.6ZM315.1 461.7L320.1 464.1L319.1 469.5L316.1 468.5ZM451.2 372.9L457.4 373.3L456.4 379.5L452.2 378.5ZM515.5 394.8L523.8 397.6L522.8 404.4L516.5 403.4ZM322.4 411.3L326.7 413.4L325.7 417.4L323.4 416.4ZM308.5 401.4L313.8 400.4L312.8 407L309.5 406ZM594.1 334.3L602.9 333.6L601.9 338.3L595.1 337.3ZM463.5 328.1L471.5 330.6L470.5 334.5L464.5 333.5ZM322.7 384.3L328.5 385.7L327.5 389.6L323.7 388.6ZM493 397.6L501.7 398.3L500.7 405.3L494 404.3ZM455.6 336.5L463.9 336.5L462.9 342.4L456.6 341.4ZM525.7 438.2L534.3 438.1L533.3 444.4L526.7 443.4ZM318.9 446.1L327.1 446.6L326.1 451.4L319.9 450.4ZM493 496.9L501.4 497.1L500.4 500.2L494 499.2ZM402.8 511.6L410.2 512.1L409.2 516.7L403.8 515.7ZM467.1 274.7L475.8 274.7L474.8 278.1L468.1 277.1ZM508 510.5L512.2 510.4L511.2 514.6L509 513.6ZM381.6 515.6L388.3 514.8L387.3 519.2L382.6 518.2ZM419.6 313.8L427 314.1L426 317.9L420.6 316.9ZM583.8 467.5L588.6 467.4L587.6 471L584.8 470ZM339.7 285L344.4 286.1L343.4 291.8L340.7 290.8ZM438.4 441.3L443.1 442L442.1 447.8L439.4 446.8ZM337.4 413.9L346.3 415.3L345.3 421.6L338.4 420.6ZM328 437.4L332.5 436.5L331.5 440.8L329 439.8ZM305.6 350.8L314.5 350.8L313.5 355.7L306.6 354.7ZM371.5 320.7L378.7 320.8L377.7 324.1L372.5 323.1ZM300.5 323.2L308.1 323.8L307.1 328L301.5 327ZM404.2 210.6L411.3 212.7L410.3 216.3L405.2 215.3ZM299.5 417.3L305.3 417.9L304.3 421L300.5 420ZM533.2 326.3L539.9 327.6L538.9 332.7L534.2 331.7ZM534.4 310.2L539.1 311L538.1 317.5L535.4 316.5ZM496.7 490.3L503.5 491.8L502.5 498.6L497.7 497.6ZM332.2 487.8L338.5 488.1L337.5 493.2L333.2 492.2ZM537.7 513.6L544.2 513.2L543.2 518.3L538.7 517.3ZM620.4 413.2L629.2 414.3L628.2 418.1L621.4 417.1ZM536 318.2L541.3 319.1L540.3 323.1L537 322.1ZM452.9 320.6L459.9 319.9L458.9 323.1L453.9 322.1ZM437 218.8L445.2 220.8L444.2 226.2L438 225.2ZM349.3 349.9L357.5 350.4L356.5 353.7L350.3 352.7ZM499.1 403.4L507.9 405L506.9 410.1L500.1 409.1ZM377.3 358.4L382.5 358.9L381.5 365.4L378.3 364.4ZM495.5 447L502.3 449.4L501.3 454.8L496.5 453.8ZM524.9 515.4L529.4 515.3L528.4 521.4L525.9 520.4ZM336.9 474.3L345.2 473.8L344.2 477.8L337.9 476.8ZM527.8 313L536.3 312L535.3 318.3L528.8 317.3ZM613 398.1L621.8 400.4L620.8 403.7L614 402.7ZM612.3 400.1L619.9 399.7L618.9 406.4L613.3 405.4ZM373.6 255.1L377.7 256.3L376.7 259.5L374.6 258.5ZM602.9 294.2L607.1 293.9L606.1 297.2L603.9 296.2ZM476.1 447.1L480.2 446.7L479.2 450.9L477.1 449.9ZM486 473.7L493.9 475.1L492.9 482.1L487 481.1ZM506.6 305.1L511.6 304.7L510.6 309.8L507.6 308.8ZM472.7 275.3L480 275.5L479 280.7L473.7 279.7ZM465.7 319.1L473.7 321.5L472.7 328.4L466.7 327.4ZM496.5 333.3L501.6 335.3L500.6 341.4L497.5 340.4ZM486.7 451.9L492.4 453.2L491.4 459L487.7 458ZM608.2 428.1L615.5 431L614.5 437.4L609.2 436.4ZM337.8 317.9L346.7 319L345.7 325.2L338.8 324.2ZM361.2 223.2L370 226L369 229.8L362.2 228.8ZM558.2 492.7L562.9 493L561.9 499.7L559.2 498.7ZM564.3 246.8L572 248.2L571 253L565.3 252ZM410.7 416.8L415.7 419.8L414.7 425.3L411.7 424.3ZM425.4 292.3L431.5 293.7L430.5 298.9L426.4 297.9ZM304 461.1L310.5 461.3L309.5 468.3L305 467.3ZM573.4 426L580.2 427.2L579.2 432.9L574.4 431.9ZM510.5 354.7L517.2 354.4L516.2 358.9L511.5 357.9ZM558.4 499.5L566.5 499.3L565.5 502.6L559.4 501.6ZM508.7 519.4L515.7 518.4L514.7 523.7L509.7 522.7ZM390.7 267.1L395.6 266.7L394.6 273.5L391.7 272.5ZM503.3 512.2L510.8 513.7L509.8 518.2L504.3 517.2ZM510.6 377.8L515.2 377.9L514.2 383.4L511.6 382.4ZM313.2 374.1L319.8 376.1L318.8 382.3L314.2 381.3ZM347.7 400.7L353.9 401.7L352.9 406.8L348.7 405.8ZM531.7 326.9L537 326.5L536 330.5L532.7 329.5ZM293.5 410.3L301.8 411.5L300.8 414.8L294.5 413.8ZM398.6 338.9L407.3 340.1L406.3 346L399.6 345ZM269.3 332.3L276 334.2L275 340.9L270.3 339.9ZM375.6 328.5L382.1 330.6L381.1 337L376.6 336ZM406.1 209.9L412.8 212.5L411.8 217.6L407.1 216.6ZM398.2 426.1L403.5 427.4L402.5 431.9L399.2 430.9ZM458.3 302.5L465.8 301.7L464.8 305.3L459.3 304.3ZM377.9 351.9L386.7 354.8L385.7 361L378.9 360ZM330.2 346.5L337.9 348.7L336.9 352.5L331.2 351.5ZM596.9 480L602 480L601 485.9L597.9 484.9ZM565.8 379.3L570.8 382.1L569.8 385.4L566.8 384.4ZM423.2 458.2L428.5 460.4L427.5 465.6L424.2 464.6ZM620.9 425.7L628.2 427.9L627.2 433.7L621.9 432.7ZM304.5 258.5L309.6 259.4L308.6 265L305.5 264ZM273.8 365.8L279.2 366.5L278.2 370.7L274.8 369.7ZM547 262.9L552.5 265.5L551.5 270.8L548 269.8ZM306.3 300.2L310.9 300L309.9 306.3L307.3 305.3ZM535.3 352.9L539.5 354.2L538.5 359.6L536.3 358.6ZM521.3 337.4L528.6 340.4L527.6 343.7L522.3 342.7ZM502.6 486.2L507.9 487.9L506.9 493L503.6 492ZM339.4 393.8L348.4 393.9L347.4 400.6L340.4 399.6ZM327.3 454.6L334.4 455.3L333.4 458.7L328.3 457.7ZM377.1 227.1L384.9 229.3L383.9 234.7L378.1 233.7ZM372.2 521.1L377 521L376 527.2L373.2 526.2ZM518.8 442.4L524.4 443L523.4 446.3L519.8 445.3ZM335.8 431L341.3 430.2L340.3 435.6L336.8 434.6ZM595.3 358.5L601.3 361.4L600.3 366.2L596.3 365.2ZM373.4 499.1L377.4 501.7L376.4 508.1L374.4 507.1ZM545.6 426.3L551.3 428.1L550.3 432.2L546.6 431.2ZM365.7 440.3L372.1 443.2L371.1 449L366.7 448ZM288.9 324L297.6 327L296.6 331.9L289.9 330.9ZM617.7 289.5L624.6 290L623.6 296.9L618.7 295.9ZM442.8 211.6L448.3 211.9L447.3 217L443.8 216ZM604.6 400L613 400.5L612 405.4L605.6 404.4ZM616.7 335.6L621.2 336.1L620.2 342.8L617.7 341.8ZM443.2 336.5L450.5 337.9L449.5 344.3L444.2 343.3ZM274.3 331.2L280.6 332.1L279.6 335.1L275.3 334.1ZM283.7 405.9L288.6 406L287.6 411.9L284.7 410.9ZM291.4 336.2L297.1 336.3L296.1 342.8L292.4 341.8ZM298.7 449.5L307.4 452.5L306.4 455.7L299.7 454.7ZM471.3 275.3L479.5 277.4L478.5 281L472.3 280ZM551.8 404L558.6 406.7L557.6 413.3L552.8 412.3ZM330.4 354.4L337.4 355.2L336.4 358.3L331.4 357.3ZM430.3 362.4L437 364.3L436 370.6L431.3 369.6ZM633.7 395.2L639.6 397.1L638.6 404L634.7 403ZM399.5 527.1L406.1 529.1L405.1 534.7L400.5 533.7ZM499.6 394.1L506.7 396.5L505.7 399.9L500.6 398.9ZM551.6 262.5L559.3 265.4L558.3 270.9L552.6 269.9ZM384.4 339.5L391.6 341.3L390.6 346.5L385.4 345.5ZM553.4 315.6L559.1 315L558.1 319.3L554.4 318.3ZM455.9 282L461.3 282.9L460.3 289.2L456.9 288.2ZM552.1 446.1L559.8 449L558.8 454.1L553.1 453.1ZM323.7 392.5L331.6 395.5L330.6 402.1L324.7 401.1ZM324.9 318.8L331.8 319.1L330.8 325.8L325.9 324.8ZM607.3 461.5L615.6 461.6L614.6 468.6L608.3 467.6ZM429.8 500.2L437.8 503.2L436.8 509.8L430.8 508.8ZM429.7 332.9L436.6 335.7L435.6 340.3L430.7 339.3ZM430.5 360.9L437.2 362.6L436.2 368.1L431.5 367.1ZM449.5 529.3L453.9 529.9L452.9 535.1L450.5 534.1ZM559.9 380.9L566.7 383.1L565.7 387L560.9 386ZM355.2 303L359.6 303.2L358.6 306.4L356.2 305.4ZM549.2 267.2L556.9 269.9L555.9 275.9L550.2 274.9ZM536.2 427.1L541.7 429.5L540.7 433.6L537.2 432.6ZM380.6 383L386.3 385.4L385.3 388.7L381.6 387.7ZM412.7 313.6L420 312.9L419 316.9L413.7 315.9ZM599.4 443.1L604.3 445L603.3 451.8L600.4 450.8ZM399.1 312.2L406.4 314.6L405.4 320.6L400.1 319.6ZM398.8 221.3L406.5 222.3L405.5 227.9L399.8 226.9ZM428.5 307.4L434.3 307.9L433.3 312.3L429.5 311.3ZM509.4 303.5L514.7 304.2L513.7 307.5L510.4 306.5ZM619.6 319.9L624.4 319.4L623.4 325L620.6 324ZM600.2 460.4L604.6 461.9L603.6 466.4L601.2 465.4ZM356.3 361L362.7 360.4L361.7 367.1L357.3 366.1ZM416 215.2L420.3 216.3L419.3 221.3L417 220.3ZM332.1 407.9L336.3 408.9L335.3 414L333.1 413ZM368.5 227.9L376.5 230.5L375.5 236L369.5 235ZM355.1 471.8L362.3 471.2L361.3 477.4L356.1 476.4ZM501.6 436L507.4 435.4L506.4 440L502.6 439ZM424.8 489.6L429.8 492.5L428.8 495.8L425.8 494.8ZM305.1 477.8L311.9 479.1L310.9 483.2L306.1 482.2ZM527.1 225.7L534.8 228.2L533.8 231.9L528.1 230.9ZM272.8 326.6L279.3 326.9L278.3 332L273.8 331ZM389.5 377.2L397.8 377.7L396.8 384.5L390.5 383.5ZM409.8 530.4L414.8 529.7L413.8 534L410.8 533ZM419.1 311.4L428 314L427 320.9L420.1 319.9ZM395.5 367.5L402 368L401 374.6L396.5 373.6ZM368.7 478.2L375.8 479L374.8 483.1L369.7 482.1ZM326.8 280.8L331.6 282L330.6 285.3L327.8 284.3ZM512.2 463.7L516.4 463.4L515.4 469.6L513.2 468.6ZM315 255L319.4 256.1L318.4 259.9L316 258.9ZM581.2 343.2L585.6 343L584.6 346.6L582.2 345.6ZM426.8 356.8L430.9 359L429.9 365.7L427.8 364.7ZM580.8 354.1L586 355.1L585 358.2L581.8 357.2ZM403.4 377.5L408.6 378L407.6 381.7L404.4 380.7ZM373.9 469.2L378.2 469.8L377.2 475.4L374.9 474.4ZM409.5 442.5L417.4 441.8L416.4 445.2L410.5 444.2ZM512.9 380.7L518.1 380.5L517.1 385.1L513.9 384.1ZM492.1 303.1L496.1 304.7L495.1 308.6L493.1 307.6ZM556.6 282.2L565 284L564 290.8L557.6 289.8ZM460.7 514.2L467 513.9L466 519.9L461.7 518.9ZM535.9 320.3L541.8 321.3L540.8 326.8L536.9 325.8ZM500.4 304.3L506 303.9L505 308.3L501.4 307.3ZM539.4 319.1L545.6 318.3L544.6 321.3L540.4 320.3ZM334 267.2L340.8 267.9L339.8 272.8L335 271.8ZM360.6 375.3L366.4 375.3L365.4 382.1L361.6 381.1ZM304.2 417.9L313.1 417.9L312.1 422.9L305.2 421.9ZM483.6 326.6L491.9 327.3L490.9 330.7L484.6 329.7ZM447.2 508.1L452 510.5L451 514.3L448.2 513.3ZM418.2 205.7L425.3 205.6L424.3 208.9L419.2 207.9ZM307.8 468.9L316.2 469L315.2 475.9L308.8 474.9ZM287.5 357.3L293.9 356.8L292.9 359.8L288.5 358.8ZM466.1 338.2L473.7 340.3L472.7 347.3L467.1 346.3ZM590.8 318L597.7 319.8L596.7 323.3L591.8 322.3ZM410.7 488L417.1 489L416.1 494L411.7 493ZM335.6 317.7L343.2 318.1L342.2 324.5L336.6 323.5ZM428.6 487.9L436.1 487.1L435.1 492.8L429.6 491.8ZM490.5 248.1L497.9 249.8L496.9 254.4L491.5 253.4ZM473.9 272.8L478.6 271.9L477.6 278.5L474.9 277.5ZM488.6 478L496.6 477.3L495.6 481.6L489.6 480.6ZM598.8 294L606.5 295.8L605.5 299.3L599.8 298.3ZM331 347.9L337.7 347.8L336.7 354.7L332 353.7ZM261.3 366.2L265.9 368.9L264.9 373.1L262.3 372.1ZM372.4 435.5L381.1 438.1L380.1 441.8L373.4 440.8ZM584.3 309.4L592.8 308.9L591.8 312.5L585.3 311.5ZM462.4 501.7L468.9 504.5L467.9 508.1L463.4 507.1ZM556 376.5L564.6 375.8L563.6 381.6L557 380.6ZM581.4 322.6L587.8 321.7L586.8 327L582.4 326ZM327.6 425.8L334.4 427.5L333.4 433.7L328.6 432.7ZM277.3 349.9L282.5 352.1L281.5 358.2L278.3 357.2ZM445.9 370L453.2 370.3L452.2 374.6L446.9 373.6ZM566.3 296.3L574.5 298.3L573.5 304.7L567.3 303.7ZM445.5 348L452.6 350.7L451.6 357.2L446.5 356.2ZM358.2 486.6L366.4 489L365.4 493L359.2 492ZM603.6 274.1L612.6 273.1L611.6 277.3L604.6 276.3ZM269.7 327.6L275.2 329.1L274.2 332.3L270.7 331.3ZM505.4 364L511 363.3L510 369.9L506.4 368.9ZM376 314.3L381.4 315L380.4 319.3L377 318.3ZM313.4 464.4L321.3 464.7L320.3 471.4L314.4 470.4ZM437.3 520.2L442.3 520.3L441.3 524.5L438.3 523.5ZM526 397.7L533.7 400.3L532.7 404.2L527 403.2ZM458.5 258.2L463.1 258.3L462.1 263.6L459.5 262.6ZM626.4 431.8L632.6 431.2L631.6 437.5L627.4 436.5ZM449.1 343.2L455.8 344.7L454.8 349.3L450.1 348.3ZM391.6 239.2L396.2 241.7L395.2 247.9L392.6 246.9ZM346 465.6L353.9 465.9L352.9 470.7L347 469.7ZM312.3 346.1L318.8 346.2L317.8 353.1L313.3 352.1ZM539.1 480.2L546.9 481.6L545.9 485.3L540.1 484.3ZM507.4 227.5L514.7 230.3L513.7 234.7L508.4 233.7ZM409.5 490.3L416.6 490.6L415.6 495.1L410.5 494.1ZM342.7 227L351.2 229.7L350.2 233.2L343.7 232.2ZM406.5 485.3L412.7 484.6L411.7 488.6L407.5 487.6ZM505.2 284.5L513.6 286.2L512.6 289.6L506.2 288.6ZM558.2 489.7L564 488.8L563 494L559.2 493ZM492.3 425.3L497.8 425.8L496.8 429.3L493.3 428.3ZM422.9 323.4L428.3 326.2L427.3 332.6L423.9 331.6ZM348.3 306.9L352.7 307.2L351.7 311.7L349.3 310.7ZM416.8 451.7L422.9 452.3L421.9 457L417.8 456ZM367.7 473.9L372.2 473.3L371.2 477.1L368.7 476.1ZM378 339.3L385.6 342L384.6 346.5L379 345.5ZM511.9 278.3L519.9 280.9L518.9 285.9L512.9 284.9ZM350.7 371.1L358.6 373.7L357.6 379.6L351.7 378.6ZM373.3 239.2L378.4 239.4L377.4 242.8L374.3 241.8ZM583 276.6L589.6 279.2L588.6 285.6L584 284.6ZM428.4 277.7L434.1 278.1L433.1 282.7L429.4 281.7ZM412.6 310.6L419 311.7L418 317.6L413.6 316.6ZM426 404.7L434.8 404.7L433.8 411.6L427 410.6ZM597.2 302.6L601.2 303.7L600.2 308.4L598.2 307.4ZM612.2 314.6L617.6 316.7L616.6 321.9L613.2 320.9ZM397.4 490.2L405 491.8L404 498.1L398.4 497.1ZM301 428.7L305 430.9L304 437.9L302 436.9ZM576.6 427.4L583.4 430.2L582.4 433.8L577.6 432.8ZM491.3 399.3L499.9 402.2L498.9 409L492.3 408ZM491.9 274.8L497.4 275.4L496.4 281L492.9 280ZM509.8 297.3L518.6 300.2L517.6 305.5L510.8 304.5ZM506.5 365.2L514.5 364.4L513.5 370.7L507.5 369.7ZM333.7 289.9L338.2 289.8L337.2 294.5L334.7 293.5ZM413.2 257.7L420 259.6L419 266.2L414.2 265.2ZM522.1 253.2L530.3 254.5L529.3 260.3L523.1 259.3ZM583.7 249.5L589.1 249.6L588.1 253L584.7 252ZM577.4 250.2L586.3 251.4L585.3 257.9L578.4 256.9ZM598.8 418.8L605.8 421.1L604.8 427.9L599.8 426.9ZM380.6 228.7L388.7 231.5L387.7 237.7L381.6 236.7ZM474.1 509.8L479 509.2L478 512.2L475.1 511.2ZM331.5 278.9L339.3 279.9L338.3 284.7L332.5 283.7ZM383.2 304.7L390.3 304.7L389.3 310.9L384.2 309.9ZM447 234.2L453.4 236.4L452.4 240.1L448 239.1ZM573.1 499.7L577.1 501.2L576.1 505.3L574.1 504.3ZM532.6 376.7L538.1 376.9L537.1 383.1L533.6 382.1ZM429.2 364L435.6 365.5L434.6 371.3L430.2 370.3ZM306 328.9L311.4 331.4L310.4 337.8L307 336.8ZM487.6 426.2L495.6 427.2L494.6 431.8L488.6 430.8ZM569.9 477.9L577.1 478.7L576.1 485L570.9 484ZM482.9 220.6L491.7 219.7L490.7 224.9L483.9 223.9ZM462.2 425.2L467.3 424.7L466.3 431.1L463.2 430.1ZM513.9 293.7L521.1 296.3L520.1 301.3L514.9 300.3ZM451.3 313.2L456.5 314.1L455.5 320.8L452.3 319.8ZM563.1 242L570.6 242.2L569.6 246.7L564.1 245.7ZM614.6 333.4L621.8 334.7L620.8 339.8L615.6 338.8ZM399.5 433.4L406.8 434.8L405.8 439.4L400.5 438.4ZM398.8 243.5L406.2 244.3L405.2 247.6L399.8 246.6ZM310.1 318.5L319 320.8L318 327.4L311.1 326.4ZM455.4 245.9L459.8 245.2L458.8 249.1L456.4 248.1ZM431.3 348L436.5 349.2L435.5 354.6L432.3 353.6ZM413.6 428.4L417.8 428.4L416.8 434.7L414.6 433.7ZM477.9 413.4L486.4 415L485.4 419.9L478.9 418.9ZM509 309.7L515.5 312.5L514.5 317.6L510 316.6ZM345.4 454.5L351.7 455.3L350.7 460.1L346.4 459.1ZM329.6 268.4L333.8 268.2L332.8 274.5L330.6 273.5ZM268.7 348.7L273.1 351.1L272.1 355L269.7 354ZM584.7 365.1L593.5 366.5L592.5 372L585.7 371ZM627.3 367L633.5 369.9L632.5 374.9L628.3 373.9ZM535.7 356.4L542.7 359.4L541.7 365L536.7 364ZM435.6 507.1L439.8 509.1L438.8 513.4L436.6 512.4ZM498.4 395.7L503.8 398.1L502.8 403.8L499.4 402.8ZM526.2 440.4L533.9 440.4L532.9 446.8L527.2 445.8ZM549.4 407.7L557.9 410.1L556.9 416.9L550.4 415.9ZM458.5 209.7L466.7 209.1L465.7 212.6L459.5 211.6ZM317.8 346.9L322.8 348.3L321.8 354.1L318.8 353.1ZM302.2 431.5L308.1 431.8L307.1 435.4L303.2 434.4ZM322.6 301L330.7 302.2L329.7 307.4L323.6 306.4ZM404.5 238.3L410.5 239L409.5 242.8L405.5 241.8ZM418.2 313.8L424.3 316.4L423.3 320.5L419.2 319.5ZM420.3 347.8L424.7 350.5L423.7 354L421.3 353ZM421 341.7L427.6 344.7L426.6 348.4L422 347.4ZM630.9 312.5L635.7 315L634.7 319.7L631.9 318.7ZM372.7 483.7L379.8 485.7L378.8 489.4L373.7 488.4ZM441.7 199.3L450.1 200.6L449.1 207L442.7 206ZM536.4 438.9L541.4 439.3L540.4 443.8L537.4 442.8ZM516.6 354.8L524.4 354L523.4 360.1L517.6 359.1ZM374.5 327.2L381.8 329.9L380.8 336.2L375.5 335.2ZM364.8 220.2L369.2 222.5L368.2 228.5L365.8 227.5ZM306.5 378L311.1 379.7L310.1 383L307.5 382ZM589.7 336.8L594.5 336.1L593.5 342.1L590.7 341.1ZM604.9 458.8L610.4 460.7L609.4 465.1L605.9 464.1ZM337 477.7L344.5 478.2L343.5 482.9L338 481.9ZM392.3 369.5L398.7 369.7L397.7 374.1L393.3 373.1ZM589.7 396L596.2 396.4L595.2 401.1L590.7 400.1ZM519.8 296.2L528.1 297.2L527.1 301.4L520.8 300.4ZM300.9 339.4L308.7 339.9L307.7 344.5L301.9 343.5ZM423.1 505.2L432 507.3L431 513.2L424.1 512.2ZM336.4 468.6L341.8 467.8L340.8 472.9L337.4 471.9ZM296.3 321.3L304.9 322.9L303.9 327.9L297.3 326.9ZM450.4 480.3L456.9 482.4L455.9 489L451.4 488ZM348.6 435.4L353.2 436.4L352.2 442.1L349.6 441.1ZM590.1 323.1L594.4 325.7L593.4 330.1L591.1 329.1ZM385 363.1L389.7 364.9L388.7 369.4L386 368.4ZM333.9 460L339.7 462.6L338.7 465.9L334.9 464.9ZM458.3 296.7L466.3 299L465.3 305.3L459.3 304.3ZM313.7 266.9L321 266.5L320 271.6L314.7 270.6ZM453.9 364L460.7 365.9L459.7 371L454.9 370ZM429.2 266L434.5 267.5L433.5 272.5L430.2 271.5ZM600.9 345.8L609.2 347.2L608.2 353.7L601.9 352.7ZM295.8 462.2L304.4 464.9L303.4 469L296.8 468ZM391.1 227.2L395.6 229.3L394.6 233.2L392.1 232.2ZM279.3 359.7L287 362.1L286 367.7L280.3 366.7ZM514 356.1L522.5 357.3L521.5 363.2L515 362.2ZM289.5 454.8L296.9 456.7L295.9 459.9L290.5 458.9ZM411.8 211.8L418.4 213.8L417.4 217.4L412.8 216.4ZM364.4 407.5L369 408.2L368 411.3L365.4 410.3ZM527.7 500.1L533.9 499.6L532.9 505.9L528.7 504.9ZM605.5 350.3L611.3 350.5L610.3 356.8L606.5 355.8ZM536 374L541.2 376.3L540.2 383L537 382ZM445.3 488.1L450.1 490.1L449.1 497L446.3 496ZM607.8 433.1L614.9 434.3L613.9 439.7L608.8 438.7ZM350.6 430.2L356.1 430.8L355.1 435.8L351.6 434.8ZM558 431.3L564.9 432L563.9 435.1L559 434.1ZM493.4 498.9L501.7 497.9L500.7 502.1L494.4 501.1ZM275.6 327.7L283.9 328.7L282.9 335.5L276.6 334.5ZM363.4 395.7L368.1 397.1L367.1 403.9L364.4 402.9ZM477.8 251.1L482.1 252.9L481.1 256.6L478.8 255.6ZM571.1 496.2L577.8 498.5L576.8 502.7L572.1 501.7ZM423.8 350L429.6 350.9L428.6 357L424.8 356ZM484.1 354.4L492.4 354.9L491.4 360.2L485.1 359.2ZM412.9 527.3L418.6 526.6L417.6 532.2L413.9 531.2ZM428.5 422.5L432.7 423.4L431.7 429.2L429.5 428.2ZM515.2 319.4L523.5 319.6L522.5 325.1L516.2 324.1ZM504.2 343.2L512.8 345.7L511.8 350.9L505.2 349.9ZM344.5 432.9L349.7 433L348.7 436.9L345.5 435.9ZM392.1 500.1L401 503L400 509.3L393.1 508.3ZM578.5 275.7L584.6 276.2L583.6 279.7L579.5 278.7ZM525.3 387.1L532.2 388.2L531.2 391.3L526.3 390.3ZM610 359.5L616.3 359.2L615.3 364.3L611 363.3ZM512.4 268.7L516.5 268L515.5 272.7L513.4 271.7ZM558.9 330L565.1 331.4L564.1 337.8L559.9 336.8ZM369.9 269.2L375.5 271.9L374.5 277L370.9 276ZM456.5 438.7L463.3 438.7L462.3 445.3L457.5 444.3ZM466.2 380.2L470.7 380.2L469.7 387L467.2 386ZM617.3 311.4L624.2 314L623.2 320.3L618.3 319.3ZM635.7 383.1L641.8 384.9L640.8 391.3L636.7 390.3ZM319.6 433.6L327 433.8L326 439.6L320.6 438.6ZM579.8 304.9L588.5 307L587.5 312.6L580.8 311.6ZM479.1 233.4L483.9 234.6L482.9 239.1L480.1 238.1ZM456.1 430.2L464.1 432.8L463.1 439.2L457.1 438.2ZM511.8 336.7L520.4 339.3L519.4 343.4L512.8 342.4ZM483.8 509.5L490 509.1L489 515.4L484.8 514.4ZM291.9 460.1L300.5 459.5L299.5 463.3L292.9 462.3ZM541.5 320L548.4 319.7L547.4 323.3L542.5 322.3ZM527.2 357.6L535.7 357.5L534.7 360.6L528.2 359.6ZM270.8 350.2L279 349.6L278 353L271.8 352ZM352.4 330.7L357.6 331.3L356.6 337.1L353.4 336.1ZM518.2 373.7L525.4 376.7L524.4 382.2L519.2 381.2ZM313.2 276.8L320.5 276.5L319.5 281.5L314.2 280.5ZM321 298.6L329.7 301.4L328.7 305.3L322 304.3ZM378.8 331.2L385.5 330.7L384.5 335.7L379.8 334.7ZM277.9 435.8L285 437.8L284 442.5L278.9 441.5ZM429.7 493.9L436.6 494.6L435.6 500.8L430.7 499.8ZM438.7 478.3L443.5 480L442.5 485.1L439.7 484.1ZM437 241.9L443.7 242.5L442.7 246.3L438 245.3ZM565.1 379.4L573.6 380.7L572.6 384.1L566.1 383.1ZM290.4 390.9L296.4 392.3L295.4 395.7L291.4 394.7ZM343.9 338.9L351.2 338.8L350.2 342.4L344.9 341.4ZM441.8 529.4L447.4 528.5L446.4 534.1L442.8 533.1ZM471 530.5L479.8 530.6L478.8 535.1L472 534.1ZM587.3 437.6L595.5 438.6L594.5 442.8L588.3 441.8ZM418.6 533.1L425.7 534.6L424.7 538L419.6 537ZM301.3 465.5L310.1 467.6L309.1 474.3L302.3 473.3ZM374.2 240.5L382.3 240.7L381.3 244.7L375.2 243.7ZM531.7 244L538.1 245L537.1 249.5L532.7 248.5ZM322 376.2L330.8 375.8L329.8 380.6L323 379.6ZM639.8 369.2L646.2 371.9L645.2 375.8L640.8 374.8ZM595.7 323.4L600.7 324L599.7 329L596.7 328ZM331.6 285.6L339.8 288.2L338.8 292.3L332.6 291.3ZM358 491L366.6 493.4L365.6 500.3L359 499.3ZM559.7 313.3L564.8 315.6L563.8 319.7L560.7 318.7ZM403.5 463.3L411.2 465.3L410.2 468.7L404.5 467.7ZM371.3 422.5L379.4 423.4L378.4 426.9L372.3 425.9ZM433.8 455.6L439.5 456.2L438.5 460.2L434.8 459.2ZM436.8 267.7L445.6 270L444.6 273.3L437.8 272.3ZM576.6 258.5L581.5 258.5L580.5 261.7L577.6 260.7ZM271.8 353.3L278 353L277 356.2L272.8 355.2ZM474.8 196.8L483.1 199.4L482.1 206L475.8 205ZM398.2 479L404 479.7L403 483.9L399.2 482.9ZM493.1 201.5L499 204.1L498 208L494.1 207ZM427.6 469.9L434 470.1L433 475L428.6 474ZM412.8 198.6L418.4 201.2L417.4 208.1L413.8 207.1ZM385.9 280.9L393 282.4L392 285.6L386.9 284.6ZM318.2 488.6L327 488.9L326 493.6L319.2 492.6ZM576.8 448.9L583.6 450.6L582.6 457.3L577.8 456.3ZM461.4 250.6L465.7 251.1L464.7 257.6L462.4 256.6ZM622.8 342.4L630.1 345L629.1 349.1L623.8 348.1ZM571.3 486.3L577.2 487.2L576.2 491.3L572.3 490.3ZM269.9 322.5L278.8 324.4L277.8 330L270.9 329ZM567.2 485L575 486.9L574 492.2L568.2 491.2ZM416.8 373.9L424.2 373.7L423.2 380.1L417.8 379.1ZM493 438.3L499.7 439.4L498.7 442.9L494 441.9ZM463.7 449.3L472.7 450L471.7 453.1L464.7 452.1ZM324.4 304.9L333 306.5L332 310L325.4 309ZM271.3 362.8L277.6 363.5L276.6 369.4L272.3 368.4ZM388.9 220.2L396.1 219.2L395.1 225L389.9 224ZM586.5 439.9L592.9 441.6L591.9 447.4L587.5 446.4ZM330.8 381.2L335.9 382.8L334.9 388.1L331.8 387.1ZM488 533.9L496.4 535.9L495.4 541.9L489 540.9ZM438.6 495.6L447.3 498.3L446.3 501.8L439.6 500.8ZM401.5 217.4L409.8 216.9L408.8 220.1L402.5 219.1ZM319.4 324L326.8 326.2L325.8 331.1L320.4 330.1ZM358.1 342.6L362.4 345L361.4 351.4L359.1 350.4ZM548.7 424.1L553.4 423.2L552.4 428.3L549.7 427.3ZM459.6 319.1L467.1 320.5L466.1 325.7L460.6 324.7ZM508.7 384.9L516.9 384.1L515.9 388L509.7 387ZM478.4 356.2L484.5 357.3L483.5 362.6L479.4 361.6ZM445.4 397.4L450.2 400.3L449.2 405.4L446.4 404.4ZM494.3 268.1L498.5 270.8L497.5 276.1L495.3 275.1ZM287.1 339.9L294.3 340.9L293.3 344.3L288.1 343.3ZM392.7 406.2L399 408.6L398 412.4L393.7 411.4ZM541 463.4L549.7 464.9L548.7 468.3L542 467.3ZM423.7 385.1L428.1 387.5L427.1 393.5L424.7 392.5ZM455.3 208.5L461.9 208.3L460.9 211.5L456.3 210.5ZM499.5 512.5L503.8 514.5L502.8 518.3L500.5 517.3ZM520.8 266.7L528.7 269.4L527.7 274.5L521.8 273.5ZM440.2 214.8L447.8 217.7L446.8 222L441.2 221ZM268.2 324.9L277.1 324.1L276.1 330.8L269.2 329.8ZM478.9 526.9L487 529.5L486 533.6L479.9 532.6ZM468.5 465.3L473.3 465.8L472.3 470.7L469.5 469.7ZM535.3 485.8L542.1 488.1L541.1 492.9L536.3 491.9ZM461.2 264.1L466 263.2L465 268.4L462.2 267.4ZM491.8 375.8L497.2 376.2L496.2 379.5L492.8 378.5ZM316.8 374.1L322.3 376.5L321.3 381.3L317.8 380.3ZM362 402.2L369.3 403.8L368.3 410.7L363 409.7ZM546.2 441.9L551.4 444L550.4 450.4L547.2 449.4ZM588.9 476.4L595.6 476.7L594.6 480.2L589.9 479.2ZM352.2 456.5L356.5 457.4L355.5 462.6L353.2 461.6ZM473.6 529.7L479 530.2L478 536.8L474.6 535.8ZM460.1 203.7L465.7 204.7L464.7 208.9L461.1 207.9ZM481.9 402.6L488.2 404.2L487.2 407.6L482.9 406.6ZM525.2 398.3L531.2 399.7L530.2 406.6L526.2 405.6ZM569.6 253.4L577.3 255.3L576.3 260.5L570.6 259.5ZM330.1 476.7L336.8 476.9L335.8 482.7L331.1 481.7ZM407.5 293.5L414.1 295.2L413.1 300.2L408.5 299.2ZM551.7 296.1L558.1 297.4L557.1 302.8L552.7 301.8ZM371 513.1L376.6 515L375.6 518.1L372 517.1ZM578.6 265.4L582.7 268.3L581.7 274.9L579.6 273.9ZM588.4 414.3L596.3 416.7L595.3 423.6L589.4 422.6ZM585 448L589.7 448.4L588.7 451.6L586 450.6ZM524.5 232.1L531.2 235L530.2 241.7L525.5 240.7ZM343.1 359.7L351.5 361.1L350.5 364.6L344.1 363.6ZM441.1 266.7L448.5 267.7L447.5 271.6L442.1 270.6ZM426.1 514.2L431 516L430 522.4L427.1 521.4ZM303.7 386.4L308.4 388.3L307.4 395.1L304.7 394.1ZM552.2 461.8L561 464.6L560 468.8L553.2 467.8ZM601.3 402.7L609.3 402.2L608.3 405.9L602.3 404.9ZM472.8 308.5L479.7 308.3L478.7 314.2L473.8 313.2ZM562.4 406.7L567.7 406L566.7 411L563.4 410ZM339.2 273.2L347.5 275.8L346.5 282.7L340.2 281.7ZM385.3 526.7L390.2 528.4L389.2 534L386.3 533ZM451.9 342.1L459.7 341.3L458.7 347.9L452.9 346.9ZM623 413L629.8 413.1L628.8 418.1L624 417.1ZM587.7 367.4L596.4 367.4L595.4 371.5L588.7 370.5ZM556.1 309.5L563 312.1L562 317.8L557.1 316.8ZM530.2 492.9L535.9 493.7L534.9 499.9L531.2 498.9ZM565 231.5L570 231.7L569 238.2L566 237.2ZM314.4 272.8L322.5 275.3L321.5 281L315.4 280ZM497.6 405L504.6 404.3L503.6 409.8L498.6 408.8ZM417.4 291.5L424.4 290.6L423.4 294.9L418.4 293.9ZM277.2 431.3L285.2 432.6L284.2 438.6L278.2 437.6ZM315 350.5L322.6 350.2L321.6 357.1L316 356.1ZM283.8 412.2L292.4 411.3L291.4 416.2L284.8 415.2ZM611.4 313.9L618.9 315.9L617.9 321L612.4 320ZM269.6 318.5L274.2 320.1L273.2 324.9L270.6 323.9ZM387.5 429.1L393.2 430.6L392.2 433.8L388.5 432.8ZM552.8 428.7L557.1 429.1L556.1 434.9L553.8 433.9ZM441.3 239.8L445.8 240.6L444.8 246.6L442.3 245.6ZM595.8 350.8L604.6 351.8L603.6 356.7L596.8 355.7ZM436.5 405.6L444.5 408L443.5 414.1L437.5 413.1ZM471.6 442.1L478.8 442L477.8 446.5L472.6 445.5ZM546.1 331.1L550.9 333L549.9 339.8L547.1 338.8ZM497.2 478.8L504.7 481.2L503.7 488L498.2 487ZM333.8 242.5L341.1 242.6L340.1 247.3L334.8 246.3ZM458.6 303L465 303.7L464 307.3L459.6 306.3ZM287.9 354.1L294.3 356.9L293.3 360.2L288.9 359.2ZM479.1 378.7L483.8 379.8L482.8 383.8L480.1 382.8ZM529 434.5L533.1 433.8L532.1 437.9L530 436.9ZM541.5 296.5L546 298.3L545 304.1L542.5 303.1ZM481.5 360L486.8 359.7L485.8 365.6L482.5 364.6ZM316.7 315L322.2 314.8L321.2 320.7L317.7 319.7ZM379.6 475L385.7 475.7L384.7 480L380.6 479ZM359.3 375.8L363.5 376.3L362.5 381.1L360.3 380.1ZM583.9 400L588.3 400L587.3 403.9L584.9 402.9ZM357.5 516.8L365.5 517.6L364.5 522.6L358.5 521.6ZM556.2 462.2L565.1 462.4L564.1 468.4L557.2 467.4ZM513.9 343.6L519.9 343.3L518.9 347L514.9 346ZM365.7 305.1L371.3 306L370.3 312.1L366.7 311.1ZM361.1 340.9L366.5 343.5L365.5 347.1L362.1 346.1ZM609.1 446.8L616.2 448.8L615.2 454.4L610.1 453.4ZM614.7 446.6L622.5 447.5L621.5 453.3L615.7 452.3ZM481.4 532.2L488.4 531.7L487.4 535.6L482.4 534.6ZM504.7 349.3L512.8 351.8L511.8 355.1L505.7 354.1ZM518.8 329.3L524.5 328.9L523.5 333.9L519.8 332.9ZM512.5 530L520.8 531L519.8 534.2L513.5 533.2ZM284.6 283.4L289.8 284.4L288.8 287.7L285.6 286.7ZM540.4 294L547.5 294.3L546.5 298.4L541.4 297.4ZM464.1 234L472.1 235.8L471.1 240.4L465.1 239.4ZM577.5 304.4L586.1 305.1L585.1 311.8L578.5 310.8ZM379.8 406.9L388.5 406.2L387.5 409.8L380.8 408.8ZM352.7 378.6L361.2 380L360.2 385.5L353.7 384.5ZM364.7 263.5L369.4 265.9L368.4 272.7L365.7 271.7ZM535 446.1L543.8 446.2L542.8 451.9L536 450.9ZM582.1 292.8L588.1 295.5L587.1 299L583.1 298ZM505 527.6L512.6 528.5L511.6 532L506 531ZM320 462.1L328.3 461.9L327.3 467.6L321 466.6ZM438.6 329.2L445.1 332.1L444.1 336.3L439.6 335.3ZM347.9 246.8L352.5 245.8L351.5 252.5L348.9 251.5ZM605.5 433.7L613.9 433.6L612.9 439.5L606.5 438.5ZM514 496L519.6 495.4L518.6 499.4L515 498.4ZM551.2 388.2L559.7 388.9L558.7 392.3L552.2 391.3ZM324.2 317.8L329.7 318.4L328.7 322.4L325.2 321.4ZM510.8 409.1L519.6 410.9L518.6 415.2L511.8 414.2ZM552 356.6L559.5 358.6L558.5 364.6L553 363.6ZM529 258.8L533.1 259L532.1 262.5L530 261.5ZM325 455.3L330.7 456L329.7 460.9L326 459.9ZM534.3 278.7L540.8 278.4L539.8 283.2L535.3 282.2ZM537.6 361L544 361.3L543 366L538.6 365ZM592.6 372.4L597.3 371.8L596.3 375.2L593.6 374.2ZM604.3 312.9L610.2 315.5L609.2 321.5L605.3 320.5ZM348.7 268.1L356.8 268.2L355.8 271.8L349.7 270.8ZM328.5 428.4L334.3 428.9L333.3 432.9L329.5 431.9ZM590.5 348.9L597.8 350.1L596.8 354.8L591.5 353.8ZM448.4 250.3L453.6 252.8L452.6 257.3L449.4 256.3ZM393.5 371.3L397.6 371.6L396.6 376.3L394.5 375.3ZM484.8 300.4L489.4 299.5L488.4 304.4L485.8 303.4ZM416.8 410.6L423 411.1L422 416L417.8 415ZM448.2 231.3L456.7 232.5L455.7 235.8L449.2 234.8ZM406.7 357.4L414.9 356.9L413.9 360.6L407.7 359.6ZM497.4 369.3L502.2 371.4L501.2 374.8L498.4 373.8ZM572.7 471.2L580.3 473.1L579.3 477L573.7 476ZM290.2 413.9L298.9 415.9L297.9 422.6L291.2 421.6ZM467.2 353.9L476 353.7L475 356.9L468.2 355.9ZM356.2 345.4L364.8 346.9L363.8 352L357.2 351ZM483.1 285.7L491.9 288.3L490.9 295.2L484.1 294.2ZM395 452.8L402.5 453.9L401.5 458.8L396 457.8ZM470.6 380.6L476.7 382.2L475.7 387.3L471.6 386.3ZM328 413.3L336.8 414.5L335.8 418.4L329 417.4ZM505.3 376.1L512.6 378L511.6 384.5L506.3 383.5ZM317.9 372L323.3 372.3L322.3 378.3L318.9 377.3ZM316.9 343.4L323.7 344.4L322.7 348L317.9 347ZM435.4 275.9L442.7 275.7L441.7 281.6L436.4 280.6ZM373 229.5L379.2 232.4L378.2 236.6L374 235.6ZM525.3 344.2L530 345.9L529 349.3L526.3 348.3ZM415 332.6L421.1 334.8L420.1 341.5L416 340.5ZM334.1 334.6L340.3 335L339.3 338.2L335.1 337.2ZM312.4 422.3L318 425.2L317 430L313.4 429ZM409.6 235.8L414.8 236.9L413.8 243.3L410.6 242.3ZM531.2 384.2L536.3 386.9L535.3 391.1L532.2 390.1ZM497.4 429.5L504 432.1L503 438L498.4 437ZM438.5 438.4L445.7 441.1L444.7 445.8L439.5 444.8ZM486.4 422.9L493.9 424.4L492.9 431.3L487.4 430.3ZM406 233.5L413.9 236L412.9 241.5L407 240.5ZM613.7 342L620.8 341.8L619.8 346.4L614.7 345.4ZM445 346.6L451.7 346.1L450.7 353.1L446 352.1ZM530.2 314.1L537.1 315.7L536.1 321L531.2 320ZM608.8 365.9L616 366.7L615 370.1L609.8 369.1ZM539.8 235L546.2 234.5L545.2 237.8L540.8 236.8ZM431.5 510.6L437.4 511.2L436.4 515.2L432.5 514.2ZM274.8 347.1L278.9 346.6L277.9 351.9L275.8 350.9ZM453.9 432.4L458.4 431.5L457.4 437.4L454.9 436.4ZM402.3 519.7L410.7 521L409.7 524.7L403.3 523.7ZM322.7 308L326.9 309.1L325.9 316.1L323.7 315.1ZM561.5 440.6L567.4 439.8L566.4 443.4L562.5 442.4ZM410.1 474.7L416.2 475.7L415.2 480.2L411.1 479.2ZM468 196.3L475.5 199.1L474.5 202.6L469 201.6ZM338.1 368.5L346.6 370.9L345.6 377L339.1 376ZM399.1 509.1L405 510.9L404 517.3L400.1 516.3ZM370.4 436.1L377 438.5L376 444L371.4 443ZM306 281.5L313.6 282.1L312.6 288.4L307 287.4ZM565.4 399.8L573.2 402L572.2 406.9L566.4 405.9ZM559.5 276.7L568.2 277.1L567.2 281.3L560.5 280.3ZM445.2 202.3L451 202.5L450 207.8L446.2 206.8ZM379.3 377.1L385.4 379.1L384.4 382.1L380.3 381.1ZM347 251.8L355 253.4L354 259.9L348 258.9ZM393.5 257.1L400.1 259.4L399.1 265.1L394.5 264.1ZM338.6 442L343.8 441.1L342.8 446.9L339.6 445.9ZM529.4 466.1L538.2 465.5L537.2 470.2L530.4 469.2ZM445.9 391.4L454.1 390.6L453.1 395.7L446.9 394.7ZM443 373.6L447.8 374.3L446.8 379L444 378ZM598.8 370.2L607.4 373L606.4 376.9L599.8 375.9ZM409.4 300.7L417.8 300.4L416.8 304.3L410.4 303.3ZM618.9 395.1L624.1 395.2L623.1 399.9L619.9 398.9ZM517.2 319L522.7 320.2L521.7 324.3L518.2 323.3ZM453.8 348.6L458.2 349.5L457.2 353.7L454.8 352.7ZM401.1 467.7L409.6 469.4L408.6 476L402.1 475ZM456.8 522.7L461.6 522.2L460.6 525.8L457.8 524.8ZM461.7 468.2L467.7 467.8L466.7 471.2L462.7 470.2ZM607.9 422.9L616.2 423.6L615.2 429.2L608.9 428.2ZM429.8 295L435.8 295.3L434.8 300.8L430.8 299.8ZM417.7 311.2L424.2 313.8L423.2 320.7L418.7 319.7ZM464.1 369.5L470.4 371.2L469.4 377.9L465.1 376.9ZM494.6 401.1L501.9 402.2L500.9 409L495.6 408ZM487.1 337.5L494.4 336.6L493.4 341.6L488.1 340.6ZM459.6 318.3L465.6 321.3L464.6 326L460.6 325ZM459.1 414.3L464.8 414.1L463.8 417.5L460.1 416.5ZM463.5 332.1L471.2 332.7L470.2 338.8L464.5 337.8ZM280.4 374.5L285.8 377.3L284.8 382.8L281.4 381.8ZM614.6 405.9L619.4 408.8L618.4 414.7L615.6 413.7ZM499.9 246L505.5 245.5L504.5 250.8L500.9 249.8ZM413.6 210.8L422.4 212.6L421.4 216.2L414.6 215.2ZM536.1 339.7L541.3 340.5L540.3 346.9L537.1 345.9ZM592.2 327.1L596.8 329.6L595.8 334.9L593.2 333.9ZM573.7 345L579.6 346.2L578.6 349.7L574.7 348.7ZM529.8 223.5L535 222.8L534 229.3L530.8 228.3ZM266.8 404.4L271.7 403.4L270.7 410.1L267.8 409.1ZM383.1 427.8L389.5 430.4L388.5 437.2L384.1 436.2ZM404 386.6L412 389.4L411 395.4L405 394.4ZM532.1 357.3L537.9 359L536.9 362.6L533.1 361.6ZM339 344.4L344.1 344.5L343.1 349.6L340 348.6ZM339 402.6L343.2 403.3L342.2 409.8L340 408.8ZM471.8 396.5L480.5 396.4L479.5 399.7L472.8 398.7ZM436.8 301.2L444.5 301.6L443.5 306.5L437.8 305.5ZM598.3 439.2L604.5 440.3L603.5 446.1L599.3 445.1ZM376.6 270.4L382.1 271.1L381.1 275.4L377.6 274.4ZM368.7 337L373.5 339L372.5 345.7L369.7 344.7ZM450 418.6L458.8 421L457.8 425.6L451 424.6ZM571.8 261.9L580.5 261L579.5 266L572.8 265ZM489.6 206.4L497.6 205.7L496.6 209.2L490.6 208.2ZM280.8 387.4L286.2 387.8L285.2 391.1L281.8 390.1ZM421 352L427.1 352.7L426.1 358.1L422 357.1ZM288.3 351.7L296.3 352.6L295.3 356.5L289.3 355.5ZM323.2 494L331.8 495.4L330.8 499.1L324.2 498.1ZM459.4 245.2L468 245.1L467 251.5L460.4 250.5ZM464.1 465.5L470.7 465.7L469.7 470.5L465.1 469.5ZM602.4 339L607.2 340.5L606.2 344.6L603.4 343.6ZM507.3 250.1L514.3 252.2L513.3 256.2L508.3 255.2ZM467.8 515.1L473.9 515.4L472.9 519.9L468.8 518.9ZM416.7 367.9L422.4 367.2L421.4 374.1L417.7 373.1ZM405.6 368.8L413.5 367.9L412.5 371.1L406.6 370.1ZM464.1 248L471.8 250.9L470.8 254.6L465.1 253.6ZM537.2 392.5L541.2 393.2L540.2 398.7L538.2 397.7ZM562.1 468.3L571.1 469L570.1 473.1L563.1 472.1ZM374.2 405.7L379.8 406.1L378.8 412.4L375.2 411.4ZM355.4 507.8L361.9 509.4L360.9 514.7L356.4 513.7ZM547.1 412.8L552.2 415.6L551.2 419L548.1 418ZM313.9 412L321.4 411L320.4 414.8L314.9 413.8ZM463.6 380.8L468.9 381.7L467.9 388.3L464.6 387.3ZM455.7 305.4L461.9 305.5L460.9 312.3L456.7 311.3ZM525.2 329.4L529.8 331.8L528.8 336.9L526.2 335.9ZM473.2 379.3L480.2 379.4L479.2 383.3L474.2 382.3ZM349.8 250.7L355.4 252.1L354.4 257.5L350.8 256.5ZM317.4 321.5L323 322L322 326.1L318.4 325.1ZM598.7 387.5L603.3 386.6L602.3 390.1L599.7 389.1ZM609.5 343L617 345.9L616 348.9L610.5 347.9ZM428.9 205L436.1 205.9L435.1 212.5L429.9 211.5ZM529.7 239.3L534.9 242.1L533.9 247.8L530.7 246.8ZM435.7 402.3L441.9 404.3L440.9 410L436.7 409ZM555.2 407.5L563.1 407.3L562.1 413.7L556.2 412.7ZM598.1 290.6L604.9 290.2L603.9 293.6L599.1 292.6ZM322.8 332.3L331.6 333.2L330.6 339L323.8 338ZM461.4 414.8L467.8 416.9L466.8 421.6L462.4 420.6ZM381.4 307.9L389.2 307.7L388.2 313.7L382.4 312.7ZM461.3 400L467.2 402.4L466.2 409.4L462.3 408.4ZM281.3 361.8L286.7 363.4L285.7 367L282.3 366ZM527.7 283.6L533.9 286L532.9 289.7L528.7 288.7ZM352.9 225.3L358.9 226.1L357.9 229.9L353.9 228.9ZM489.9 244.6L495.1 243.8L494.1 249.7L490.9 248.7ZM462.2 255.2L468 257L467 261.5L463.2 260.5ZM532.2 329L537.4 328.7L536.4 334.5L533.2 333.5ZM606.3 437.1L611.6 436.8L610.6 442.9L607.3 441.9ZM345.4 514.1L353.9 514.1L352.9 518.4L346.4 517.4ZM515.9 335L522.2 335L521.2 340.2L516.9 339.2ZM358.1 246.5L367.1 245.8L366.1 252.1L359.1 251.1ZM514.4 491.4L519.7 490.9L518.7 495.1L515.4 494.1ZM354.9 506.7L361.5 509L360.5 515L355.9 514ZM494.4 477.2L499.9 477.2L498.9 480.3L495.4 479.3ZM484.4 264.9L493.2 264.4L492.2 271L485.4 270ZM324.1 263.2L330.5 264.1L329.5 270L325.1 269ZM480.7 375.8L487.6 377.6L486.6 381.4L481.7 380.4ZM621.5 314L628.1 314.1L627.1 320.5L622.5 319.5ZM580.5 372.4L586.9 372.2L585.9 376L581.5 375ZM357.3 433.7L365.7 435.2L364.7 440.9L358.3 439.9ZM316.2 337L324.4 337.6L323.4 342.1L317.2 341.1ZM614.9 368.5L619.7 368.9L618.7 374.9L615.9 373.9ZM319.6 291.3L327.7 290.4L326.7 294.4L320.6 293.4ZM490.3 357.4L497.7 358.2L496.7 364.6L491.3 363.6ZM555.4 292.7L563.6 293.6L562.6 299.3L556.4 298.3ZM542.8 407.7L549.7 409.8L548.7 416L543.8 415ZM388.8 398.5L395.3 398.9L394.3 405L389.8 404ZM480.5 279.4L488.7 281.9L487.7 286.6L481.5 285.6ZM590.9 461.6L596.5 463.7L595.5 467L591.9 466ZM377.7 221L383.4 222.4L382.4 229.4L378.7 228.4ZM426 523L433.8 525.9L432.8 532.4L427 531.4ZM479.9 398.2L488.2 397.9L487.2 403.3L480.9 402.3ZM373.2 387.8L381.6 387L380.6 390L374.2 389ZM306.4 371.6L314.1 374.6L313.1 379.9L307.4 378.9ZM519.2 235.4L527.1 234.7L526.1 240.3L520.2 239.3ZM422.6 309.2L428.6 310.2L427.6 315.3L423.6 314.3ZM327.6 394.3L333.5 396.7L332.5 402.1L328.6 401.1ZM388.9 330.7L393.2 332.6L392.2 339.3L389.9 338.3ZM332.8 423.6L340.9 422.8L339.9 427.5L333.8 426.5ZM365.1 428.1L369.7 430.6L368.7 435.7L366.1 434.7ZM354.9 235.4L363.6 238.2L362.6 243.4L355.9 242.4ZM437.4 234.4L443.3 235.4L442.3 240.9L438.4 239.9ZM391.8 449.8L398 449.8L397 453.4L392.8 452.4ZM324.8 498.3L330.8 497.4L329.8 503L325.8 502ZM434.2 352.4L438.5 352.2L437.5 358.5L435.2 357.5ZM633.5 338.3L640.3 341.3L639.3 347.4L634.5 346.4ZM599.1 467L604.6 469L603.6 474.4L600.1 473.4ZM442.4 273.2L451.1 272.9L450.1 277.1L443.4 276.1ZM291.8 321.6L298.9 323.8L297.9 327.3L292.8 326.3ZM448.5 369.4L457 370.8L456 376.8L449.5 375.8ZM392.5 452.1L396.5 453.6L395.5 457.8L393.5 456.8ZM523.8 247.5L531.9 249.6L530.9 255.4L524.8 254.4ZM321.4 415.7L330.4 416.6L329.4 422.4L322.4 421.4ZM421.2 413.2L429.6 416.1L428.6 421.8L422.2 420.8ZM320.9 286.1L329.8 288.3L328.8 292.6L321.9 291.6ZM305.7 354.1L313.1 354.5L312.1 360.7L306.7 359.7ZM374.1 478.1L381.3 477.5L380.3 481.4L375.1 480.4ZM307.1 322.3L311.5 321.5L310.5 328.3L308.1 327.3ZM344.2 472.8L352 475.4L351 480.9L345.2 479.9ZM413.8 488.7L420.4 491.5L419.4 498.3L414.8 497.3ZM328.4 453.1L335.9 456L334.9 460.3L329.4 459.3ZM599.2 288.3L605.4 287.5L604.4 290.6L600.2 289.6ZM505.6 370.2L512.7 371.8L511.7 377.1L506.6 376.1ZM628.3 428.8L634.3 430.1L633.3 436.3L629.3 435.3ZM511.7 370.5L520.4 371.5L519.4 376.1L512.7 375.1ZM296.1 342.7L302.5 342.6L301.5 346.1L297.1 345.1ZM539.7 497.9L545.7 498L544.7 503.9L540.7 502.9ZM604.3 384.8L610.2 384.2L609.2 388.2L605.3 387.2ZM436.1 255.8L443.7 257.1L442.7 261.5L437.1 260.5ZM593.2 332.8L597.9 332.5L596.9 337.5L594.2 336.5ZM327.1 243.7L333.8 246.2L332.8 251.1L328.1 250.1ZM630.1 387.3L636.1 389.4L635.1 396.2L631.1 395.2ZM446.5 347L451.6 346.9L450.6 352.1L447.5 351.1ZM502.7 525.7L508.5 528.4L507.5 532.5L503.7 531.5ZM474.1 421.9L483.1 422L482.1 426L475.1 425ZM351.9 262.3L358.3 263L357.3 266.1L352.9 265.1ZM492.5 441.4L498 443.9L497 450.7L493.5 449.7ZM481 387.1L487.3 386.1L486.3 389.5L482 388.5ZM556.2 343.4L563.3 345L562.3 351L557.2 350ZM401.2 458.1L409 458.2L408 462.1L402.2 461.1ZM286.6 421.2L293.1 420.9L292.1 424.2L287.6 423.2ZM527.8 383.2L535.8 384.5L534.8 390.5L528.8 389.5ZM536 232.8L541 232.1L540 237.4L537 236.4ZM522.1 499.2L530.7 500.2L529.7 504.1L523.1 503.1ZM478.1 338.4L483.8 341.1L482.8 347.8L479.1 346.8ZM342.3 363.2L349.9 362.5L348.9 369L343.3 368ZM451.6 332.8L459.8 334.7L458.8 339.5L452.6 338.5ZM514.9 513.8L520.7 516.7L519.7 519.9L515.9 518.9ZM579.5 344.2L586.5 345.2L585.5 352.1L580.5 351.1ZM430.9 270.5L438.2 269.7L437.2 273.9L431.9 272.9ZM304.5 311.9L313.3 313.8L312.3 320.4L305.5 319.4ZM324.1 354.7L330.6 353.9L329.6 357.5L325.1 356.5ZM477.2 488L482 487L481 491L478.2 490ZM318.3 322.5L325.8 322.6L324.8 326.6L319.3 325.6ZM539.9 430.6L545.3 429.6L544.3 433.2L540.9 432.2ZM317.8 386.9L326.2 389.1L325.2 394.3L318.8 393.3ZM559.5 348.4L565.2 349.7L564.2 356.7L560.5 355.7ZM429.9 394.2L434.3 395L433.3 401.1L430.9 400.1ZM570.9 254.2L576.8 253.3L575.8 257.2L571.9 256.2ZM398.8 480.4L407.7 481.5L406.7 488.1L399.8 487.1ZM388.3 363.6L396.6 365.4L395.6 369.5L389.3 368.5ZM562.7 357L569.8 357.8L568.8 364.3L563.7 363.3ZM538.4 250.2L547.3 251.6L546.3 254.8L539.4 253.8ZM411 423.4L418.1 425.1L417.1 428.3L412 427.3ZM455.5 269.1L463.6 270.4L462.6 274.1L456.5 273.1ZM630.4 405.5L637.7 405.9L636.7 411.7L631.4 410.7ZM575.4 379L580.1 379.7L579.1 384.5L576.4 383.5ZM458.9 305.2L463.9 306.1L462.9 312.1L459.9 311.1ZM620.5 366.5L625.9 366.9L624.9 371.1L621.5 370.1ZM486 404.2L490.1 404.3L489.1 409.4L487 408.4ZM321.4 432.2L326.5 434.9L325.5 439.2L322.4 438.2ZM284.8 304.5L291.8 307.2L290.8 313.1L285.8 312.1ZM333.7 438.1L339.9 440.8L338.9 445.5L334.7 444.5ZM298.2 302.5L305.6 302.8L304.6 306.1L299.2 305.1ZM451.3 314.6L457.2 315.3L456.2 318.9L452.3 317.9ZM579.2 472.6L587.8 471.8L586.8 478.7L580.2 477.7ZM548 334.8L553.8 334.3L552.8 341.3L549 340.3ZM439.8 289.4L444.1 289.8L443.1 294.1L440.8 293.1ZM366.9 493.9L374 495.8L373 499.9L367.9 498.9ZM610.2 411.4L616.1 410.7L615.1 417.4L611.2 416.4ZM389.8 246.3L394.6 247.8L393.6 254.1L390.8 253.1ZM575.1 312.6L581.2 311.9L580.2 316.4L576.1 315.4ZM441.6 402.9L450.2 403.2L449.2 406.9L442.6 405.9ZM392.3 475.3L398 477.9L397 483L393.3 482ZM478.6 215.1L483 214.3L482 218.4L479.6 217.4ZM507.8 344.5L516 344.6L515 349.8L508.8 348.8ZM394.1 331.7L399.7 332.2L398.7 338.9L395.1 337.9ZM391 219.1L397.7 218.4L396.7 222.3L392 221.3ZM362.2 322.2L369.3 323.9L368.3 329.5L363.2 328.5ZM417.7 388.5L423.2 389.7L422.2 396L418.7 395ZM399.1 453L404.8 455L403.8 460.9L400.1 459.9ZM412.4 217.4L418.5 216.6L417.5 219.9L413.4 218.9ZM281 377L289.7 377.2L288.7 380.3L282 379.3ZM503.3 348.6L508.8 349.3L507.8 354L504.3 353ZM324.6 302.4L333 303.8L332 308.1L325.6 307.1ZM565.4 400.2L569.5 401.6L568.5 405.2L566.4 404.2ZM633.5 376.7L639.1 378.1L638.1 382.5L634.5 381.5ZM535.1 250.7L544 249.8L543 256.5L536.1 255.5ZM368.8 376.9L374.2 379L373.2 382.1L369.8 381.1ZM320.2 480.3L325.6 480.1L324.6 486.6L321.2 485.6ZM406.8 442.3L414.3 442.1L413.3 446.6L407.8 445.6ZM530.3 423.9L534.7 423.4L533.7 428.1L531.3 427.1ZM402.9 384.6L409.1 387.3L408.1 392L403.9 391ZM530.9 363.7L539.6 364.4L538.6 368.7L531.9 367.7ZM584.3 485.4L592.7 486.8L591.7 490L585.3 489ZM409.3 284.6L417.7 285.5L416.7 291.4L410.3 290.4ZM493.7 379.8L501.2 379L500.2 382.9L494.7 381.9ZM402.6 395.9L410.8 395.3L409.8 399.7L403.6 398.7ZM481.8 270.5L487.9 269.9L486.9 275.2L482.8 274.2ZM510 431.6L514.1 432.2L513.1 439L511 438ZM424.5 486.8L429.6 487.1L428.6 493.4L425.5 492.4ZM368.5 319.9L374.6 320.1L373.6 325.5L369.5 324.5ZM469.5 426.6L474.4 428.3L473.4 431.9L470.5 430.9ZM339.1 453.5L343.1 453.7L342.1 457.2L340.1 456.2ZM495.7 254.2L504.5 255.1L503.5 260.3L496.7 259.3ZM480.2 442.7L489.1 443.8L488.1 448.6L481.2 447.6ZM551.9 279.8L560.6 280.1L559.6 286.9L552.9 285.9ZM493.1 225.8L499 226.9L498 230.5L494.1 229.5ZM458.8 486.4L464.7 489.3L463.7 492.5L459.8 491.5ZM364.9 409.2L373.9 409.6L372.9 414.3L365.9 413.3ZM498.8 257.1L503.8 259.4L502.8 266.2L499.8 265.2ZM506.7 506.6L512.2 506.5L511.2 510L507.7 509ZM414 328.1L418.5 327.6L417.5 332.2L415 331.2ZM340.1 311.6L345.5 313.6L344.5 319.6L341.1 318.6ZM309.6 280L317.5 282.9L316.5 287.8L310.6 286.8ZM383.3 317.7L392.3 317.2L391.3 321.7L384.3 320.7ZM526.5 374.4L533.1 375.9L532.1 381.6L527.5 380.6ZM545.5 272.4L549.7 273.4L548.7 276.7L546.5 275.7ZM346.3 399L352.1 401.5L351.1 407.8L347.3 406.8ZM497.7 434L503 435.1L502 439.7L498.7 438.7ZM281.4 452.7L287.2 454.6L286.2 459.6L282.4 458.6ZM405.8 321.8L414.2 324.4L413.2 331.1L406.8 330.1ZM459.6 241.6L465.6 242.4L464.6 249.2L460.6 248.2ZM503.2 372.5L509.9 375.3L508.9 381.6L504.2 380.6ZM563.6 390.4L570.2 389.7L569.2 392.8L564.6 391.8ZM457 396L463.1 395.2L462.1 398.9L458 397.9ZM455.3 227.5L459.8 228.3L458.8 233.5L456.3 232.5ZM529.4 470L535.8 471.7L534.8 475.8L530.4 474.8ZM475.4 292.3L480.3 292L479.3 297.2L476.4 296.2ZM544 332.8L548.5 334.8L547.5 338.8L545 337.8ZM412.9 417.6L419.5 419.7L418.5 425.4L413.9 424.4ZM553.2 376.7L559.4 378.7L558.4 382.1L554.2 381.1ZM375.9 267.2L380.9 267.3L379.9 273.8L376.9 272.8ZM609.7 402.8L614.7 405.4L613.7 409.4L610.7 408.4ZM496.6 215.7L503.8 218.6L502.8 224.6L497.6 223.6ZM406.6 530.3L412 533L411 536.1L407.6 535.1ZM549.5 243.9L553.7 245.9L552.7 249.4L550.5 248.4ZM395.7 311.9L403.8 312.9L402.8 318.6L396.7 317.6ZM472 473.7L479 476.1L478 481.6L473 480.6ZM337.9 324.3L343.8 323.4L342.8 329.9L338.9 328.9ZM535.7 276.4L543.4 277.4L542.4 282.7L536.7 281.7ZM554.5 479L560.3 478.3L559.3 482.7L555.5 481.7ZM502.1 377.4L508.7 379.1L507.7 383.5L503.1 382.5ZM416.7 453.5L423.7 453.1L422.7 457.6L417.7 456.6ZM404 307.9L412.9 307.9L411.9 312.3L405 311.3ZM368.8 251.7L376.1 252.5L375.1 257.5L369.8 256.5ZM361.4 261.4L369.2 261.3L368.2 266.3L362.4 265.3ZM422.1 272.2L426.2 273.8L425.2 280.6L423.1 279.6ZM555.2 264.8L563.8 266.3L562.8 269.9L556.2 268.9ZM609.8 444.4L616.7 446.1L615.7 451.6L610.8 450.6ZM551 395.6L556.2 396L555.2 402.3L552 401.3ZM401.3 469.4L408.5 472.1L407.5 476.9L402.3 475.9ZM390.6 356.6L398.5 359.1L397.5 364.5L391.6 363.5ZM597.5 468.3L604 469.8L603 476.6L598.5 475.6ZM536.8 358.6L541.1 360.7L540.1 366.2L537.8 365.2ZM564.4 241.7L570.8 244L569.8 248.8L565.4 247.8ZM346.8 335.7L354.3 338L353.3 343.8L347.8 342.8ZM500.6 210.6L505.2 212.3L504.2 217L501.6 216ZM411.6 272.2L416.7 273.8L415.7 279L412.6 278ZM504.6 311.2L512.4 310.7L511.4 315.3L505.6 314.3ZM543.2 278.9L550 281.6L549 285.4L544.2 284.4ZM410.5 208.3L418.9 208.8L417.9 214.4L411.5 213.4ZM349.9 385.6L354.5 387.1L353.5 391L350.9 390ZM613.9 405.7L621.7 408.6L620.7 415.4L614.9 414.4ZM396 352.2L400.4 354.2L399.4 358.3L397 357.3ZM583.2 338.6L589.7 340.2L588.7 344.9L584.2 343.9ZM347.6 317.6L354.8 320.2L353.8 323.4L348.6 322.4ZM522.4 272.2L526.5 272.8L525.5 275.9L523.4 274.9ZM528.6 403.1L536.8 406.1L535.8 412L529.6 411ZM425.1 510.6L433.6 513.3L432.6 519L426.1 518ZM600.6 329.6L607.8 329.2L606.8 332.8L601.6 331.8ZM640.3 376.9L645.2 378.6L644.2 383L641.3 382ZM584.2 434.2L592.6 434.4L591.6 439.3L585.2 438.3ZM369.2 299.8L373.9 302.6L372.9 306.1L370.2 305.1ZM593.5 332.4L600.7 332.7L599.7 338.7L594.5 337.7ZM389.9 507.4L396.4 506.4L395.4 512.5L390.9 511.5ZM535.1 375.1L544 374.7L543 377.9L536.1 376.9ZM575.5 393.7L579.7 394.8L578.7 399.9L576.5 398.9ZM487.8 261.7L493.7 262.8L492.7 269.6L488.8 268.6ZM523.6 405.9L528.2 408.3L527.2 415.1L524.6 414.1ZM367.6 417.4L375.8 418.2L374.8 425.2L368.6 424.2ZM316 429.9L323.5 430.6L322.5 435.8L317 434.8ZM396.4 273L402.9 275.9L401.9 281.3L397.4 280.3ZM427 501.1L431.6 503.6L430.6 509.6L428 508.6ZM359 315L364.8 317.7L363.8 323.5L360 322.5Z" fill="#2798ee" opacity=".7"/>
<path d="M619.4 321.6L622.8 319.9L620.1 333.2L617.3 334.9ZM493.6 220.6L495.9 222.4L494.8 241.6L492.9 239.9ZM565.6 481.4L568.4 482.6L566 498L563.8 496.8ZM373.8 397.3L377.1 398.8L378.3 421.7L375.7 420.2ZM447.5 271.4L450 273L449.6 287.4L447.6 285.7ZM304.8 345.7L308.7 346.4L310.8 366.3L307.6 365.6ZM582.4 258.8L585.3 259.3L583.1 273.4L580.8 272.9ZM512 453.9L515.9 454.6L514 472.7L510.9 471.9ZM410.2 261.7L412 262.1L412.8 291.8L411.4 291.4ZM495.5 219.6L498.6 221.4L497.5 234L495.1 232.2ZM641.1 363.1L644.5 364.1L641.2 378.7L638.5 377.8ZM630.8 321.6L634.2 320.8L629.8 343.7L627 344.5ZM613.3 319.5L616.1 320L613.6 332.8L611.4 332.3ZM345.8 335.2L348.5 336.2L350.6 361.7L348.4 360.8ZM566 360.3L568.4 361.5L566.6 373.7L564.7 372.5ZM438 313.2L441.1 311.2L440.7 329.8L438.3 331.8ZM387.6 420.1L390.1 420.9L391.4 447.2L389.4 446.4ZM538.7 357.1L540.6 359.1L538.3 383.4L536.8 381.4ZM494.6 403.6L496.5 403.7L495.4 422.2L493.9 422ZM549.8 243.7L553.5 241.8L550.3 271.5L547.4 273.3ZM467.7 487L471.5 487.6L470.6 497L467.6 496.3ZM456.7 484.5L458.6 484.5L458.2 511.9L456.7 511.8ZM560.6 408L562.5 408.5L559.4 433.4L557.9 432.9ZM443 466.8L445 464.9L444.9 492.4L443.4 494.2ZM639.3 407.1L642.1 408.4L639.3 420.6L637.1 419.3ZM607.1 265.9L609.6 265.2L606.7 282.9L604.7 283.6ZM298.9 466.9L301.4 465.9L305.7 494.2L303.7 495.2ZM517.1 273.3L519.6 273L517.8 296.5L515.8 296.8ZM433.5 441.1L435.7 442.9L435.6 459.4L433.8 457.6ZM552.3 481.9L556.2 481.5L552.6 508.1L549.5 508.5ZM361.6 474.9L363.8 472.9L364.6 484.9L362.8 486.8ZM355.8 237.6L358.3 239.2L358.5 247.5L356.5 245.8ZM501.5 380.9L504.6 380L503.4 392.5L500.9 393.4ZM641.2 375L644.4 375.6L641.3 388.8L638.8 388.2ZM373.1 270.3L376.8 271.2L377 284.2L374.1 283.3ZM601.9 345.8L604.4 345.8L602.6 354.9L600.7 354.9ZM489.5 437.4L491.7 435.5L490.9 444.4L489.2 446.4ZM337.1 259L339.3 259.7L340.5 275L338.7 274.3ZM307.5 400.4L310.6 398.7L312.5 415.2L310 416.9ZM591.3 249.3L594.3 250.4L590.4 277.8L588 276.8ZM447.7 294.5L451.2 295.3L450.7 316.9L447.8 316.1ZM614 458.5L615.5 459.2L611.7 479.5L610.5 478.7ZM507.2 224.8L511.1 224.3L509.9 233.2L506.8 233.7ZM347.8 287.3L351.7 288.9L352.6 306.9L349.6 305.3ZM573.7 491.1L575.8 491.7L573.6 504.8L572 504.2ZM503.1 264.4L506.2 265.2L504.7 286.3L502.2 285.6ZM337.1 366.4L339.7 367.4L341.9 390.9L339.8 389.8ZM469.6 304.1L471.9 302.4L471.3 312.3L469.5 314ZM549 286.6L552.1 285.8L550.1 301.6L547.6 302.5ZM407.6 250.7L410.1 251.6L410.8 280.5L408.8 279.5ZM379.8 313.4L381.8 311.4L382.6 328.2L381 330.1ZM406.1 499.5L409.5 500.9L409.3 510.6L406.6 509.2ZM424.5 305.5L427.1 303.6L427.3 328.6L425.2 330.5ZM410 501.5L411.7 503.2L412.4 523.4L411 521.7ZM444.2 514.2L446.8 513.3L446.5 533.4L444.5 534.3ZM345.5 364.1L348.6 362.4L350.4 385L347.9 386.7ZM383.1 460.7L385.2 459.4L386.2 476.8L384.5 478.1ZM598.2 329L600.4 330L596.7 354.2L595 353.2ZM461.7 471.6L465.4 471.1L464.5 497.8L461.5 498.3ZM420.1 462.3L422.8 460.6L423.2 486.3L421 488ZM621.3 379.8L624.7 378.6L621.1 396.7L618.3 397.8ZM530.4 491.3L533.8 489.3L530.8 516.9L528.1 518.9ZM635 414.3L638.4 412.7L634.1 432L631.4 433.6ZM361.4 305.7L364.3 305.9L366 332.3L363.7 332.1ZM508.9 223.4L511.3 223.4L510.2 236.4L508.3 236.4ZM448.3 265.1L450.9 264.2L450.6 289.1L448.4 290ZM293.6 413.3L296.3 414.9L299.3 436L297.1 434.4ZM416.2 443.5L419.4 442.7L419.3 454.7L416.6 455.5ZM511 378.7L514.3 380L512.6 398.3L510 396.9ZM427 233.1L429.5 234.7L429.2 244.4L427.2 242.9ZM373.5 476.4L375.5 476.5L376 486.4L374.4 486.3ZM502.7 281.8L505.1 281.7L503.7 303.4L501.7 303.5ZM275.1 407L279 405.1L281.1 420.9L278 422.7ZM525.8 518.5L528.8 519.7L527 534.2L524.7 533ZM292.9 445.4L296.4 447.1L298.8 465.1L296 463.4ZM303.1 368.8L305.3 369.6L306.1 377.7L304.3 376.9ZM563.5 403.5L565.4 403.1L562.9 422.3L561.4 422.6ZM420.6 231.8L422.6 231.5L422.5 241.1L420.9 241.4ZM303.2 356.3L306 357.4L309.5 384.7L307.2 383.6ZM561.9 297.9L564 296.9L562.2 311L560.5 312ZM348.4 379.2L351 377.4L352.8 399.5L350.7 401.4ZM399.6 501.9L402.6 503.2L402.8 516.3L400.4 515ZM491.2 466.2L494.3 467.1L492.8 489.7L490.3 488.9ZM542.9 514.9L545.4 514.4L542.3 540.2L540.3 540.7ZM443.4 337.9L445.3 338L445.2 363.5L443.7 363.4ZM517.1 341.2L520.8 340.9L519.6 350L516.6 350.4ZM406.3 336.7L408.2 335.2L409.1 363.9L407.6 365.4ZM307 477.3L310.8 478.2L312.7 494.7L309.7 493.8ZM276.8 329.3L280.4 328.5L283.7 352.8L280.9 353.5ZM375.8 407.7L379.1 408.4L380.2 430.4L377.6 429.6ZM506.1 494.8L508.1 494.7L506.5 516.3L504.9 516.4ZM393.7 247.3L395.7 248.8L396.8 278.2L395.3 276.6ZM518.9 428.8L521.5 430.2L520 445.3L517.9 443.9ZM509.6 302.9L512 302.9L510.9 316.4L508.9 316.3ZM428.7 411.5L432.3 411.1L432.2 437.1L429.4 437.5ZM451.7 425L455.5 424.2L454.8 433.1L451.8 433.9ZM607.9 423.5L609.6 423.9L605.3 448.9L604 448.4ZM365.2 478.8L368.5 477.7L370.3 503.1L367.7 504.2ZM494.2 283.3L497.9 283.1L496.7 298.2L493.6 298.4ZM496.3 278.1L498.9 278.6L497.8 294.8L495.7 294.3ZM355.7 463.9L359.7 463.7L359.8 472.7L356.7 472.9ZM464.3 494.8L466.7 494.3L466 518.5L464 519ZM496.1 530.3L498.4 532.2L497.3 546.7L495.5 544.8ZM543.2 456.5L546.3 456.2L544.5 469L542 469.3ZM476.8 301.3L479.4 300.5L478.5 320L476.5 320.8ZM533 352.8L536.2 351.9L534.8 361.3L532.3 362.2ZM487.9 397.5L490.6 396.1L489.4 417.4L487.2 418.7ZM292 409.4L294.5 409.5L297.7 431.6L295.6 431.6ZM453.4 217.3L456.7 217.2L456.1 239L453.5 239.1ZM282.2 424.4L284.3 425L286 436.7L284.3 436.1ZM504.3 432.7L508.3 431.9L506.3 455L503.2 455.8ZM453 254.4L455 253.1L454.6 281L453 282.3ZM326.8 331L330.4 332.7L332.2 353.8L329.3 352.1ZM586.6 382.7L588.1 380.8L585.4 399.1L584.2 401ZM343.5 504.7L346.5 504.9L349.1 530.1L346.7 529.8ZM305.4 420.2L307 421.7L308 430.5L306.7 429.1ZM463.6 427.5L466.8 427L465.9 454.3L463.3 454.8ZM614.4 458.8L617.5 458.7L615.2 468.5L612.8 468.6ZM384.6 286.4L386.2 287.4L386.9 303.1L385.6 302.1ZM557.7 405.7L561.1 406.9L558.5 425.2L555.8 424.1ZM269.2 393.1L272.2 392.3L275.9 415.6L273.6 416.4ZM288.3 438.3L291.3 440.2L295.2 465.9L292.8 464.1ZM556.7 366.6L558.5 365.9L555.2 395.6L553.8 396.3ZM418.9 421.1L421.4 421.2L421.5 437.4L419.5 437.2ZM300.8 402.9L302.3 403.3L305.6 426.1L304.3 425.8ZM379.3 357.1L381.4 356.4L382.7 379.5L381 380.2ZM551.9 484.3L555.8 485.2L552.7 506.6L549.6 505.7ZM513.2 263.4L515.4 262.6L514.4 273.9L512.6 274.7ZM604.1 357.4L606.7 356.3L605 364.5L602.9 365.6ZM352.9 453.4L356.5 454.2L356.7 462.3L353.8 461.5ZM511 502.2L513.1 500.9L511.3 523L509.6 524.2ZM607.9 279.8L609.8 281.2L607.1 297.9L605.6 296.5ZM514.4 500.5L516 501.9L513.8 529.5L512.6 528.2ZM292.6 282.9L296.4 281.7L297.5 294.4L294.4 295.6ZM440.3 200.6L442.7 201.6L442.5 227L440.6 226.1ZM623.1 450.2L625.2 449.7L621 470.9L619.3 471.4ZM520 398.1L522.5 399.9L521.3 410.3L519.3 408.4ZM434.8 252.6L438.3 251.4L438.1 279.8L435.4 281ZM516.4 485.7L520.4 486.8L517.9 512.2L514.7 511.2ZM342.2 441.5L345.4 441.4L347.5 464.4L344.9 464.4ZM569.6 320.3L572.3 320.8L569.3 343.1L567.2 342.6ZM404 224.8L407.9 225L408 245.4L404.9 245.2ZM493.3 397.5L495.9 398.6L494.4 425.4L492.2 424.2ZM469.4 417.8L471.4 416.1L470.8 430.7L469.2 432.3ZM518.5 235.9L522.1 235.8L520.8 246.4L517.9 246.5ZM348.6 252.6L350.5 251.9L352.1 273L350.6 273.7ZM520.4 258.2L521.9 256.4L520.7 272.3L519.5 274.1ZM287.6 364.5L289.6 364.1L293.2 388.5L291.6 388.8ZM561.4 388.9L563.8 388L560.3 415.9L558.4 416.9ZM599.2 315.7L601 314.5L599 326.8L597.5 328.1ZM409.6 389L412 387.4L412.3 404.4L410.3 405.9ZM274.1 370.3L275.9 371L279 390.6L277.5 389.9ZM503.4 413.8L507.1 413.5L505.8 425.3L502.9 425.7ZM305.5 303.3L307.4 301.4L310.3 324.8L308.7 326.7ZM449.1 377.8L451.7 378.5L451.3 404.7L449.3 403.9ZM312.1 464.5L314.8 466L317.3 485.9L315.2 484.3ZM337.3 237.5L340.2 237.3L341.5 255.6L339.2 255.8ZM619.1 323.1L621 324.1L616.9 348.2L615.4 347.2ZM524.7 411.4L527.7 413.2L525.9 429.7L523.5 427.9ZM493.6 305.7L496.3 304.4L494.7 333.2L492.6 334.6ZM315.6 475.6L318.2 474.7L320.5 493L318.4 493.9ZM383.6 293L387.1 293.4L387.8 315L385 314.6ZM483.9 536.7L486.3 537.8L485.4 551.2L483.4 550.1ZM357.2 250L360.7 249.2L362.4 277.4L359.6 278.2ZM469.1 467L472 466.9L471.1 485.9L468.8 486ZM373.8 215.1L377.6 215.5L378 232.2L374.9 231.8ZM392 216.9L394.2 218.3L394.7 235L392.9 233.7ZM365.9 397.3L369.6 396.2L370.3 412.1L367.3 413.1ZM447.3 498.2L449 497.5L448.8 513.7L447.4 514.4ZM331.9 499.8L333.9 501.5L336.3 521.7L334.7 520ZM493.5 240.8L497.5 240.3L495.8 266.9L492.6 267.4ZM444.7 491L447.8 492.7L447.5 520.3L445.1 518.6ZM286 306.5L289.8 306.6L291 319.5L288 319.5ZM538.3 255.2L539.9 255.5L537.5 284.1L536.2 283.9ZM545.8 461.6L548.1 459.6L545.8 478.1L544 480.1ZM511 359.8L513.4 359.3L512.1 375.4L510.1 375.9ZM437.2 514.4L440.7 512.7L440.5 538.3L437.7 540ZM379 276.9L381.4 277.8L381.6 288.3L379.7 287.4ZM309.8 341.4L312.7 340.6L313.9 353.9L311.6 354.7ZM354.3 233.2L356.2 233.3L357.3 251.3L355.8 251.2ZM422.8 286.5L425.3 286.2L425.2 299.4L423.2 299.8ZM505.9 349.7L508.5 350.9L507.1 370L505 368.9ZM364.6 321L366.7 319.8L367.1 328.6L365.3 329.9ZM458.7 275.6L462.2 277.2L461.5 289.1L458.6 287.5ZM554.5 256.4L557.6 255.1L556 266.1L553.5 267.3ZM457.4 316.7L461.2 315L460.4 329.2L457.4 330.9ZM349.3 392.1L352.6 392.4L355.1 421.9L352.5 421.6ZM392.5 521.2L394.9 520.2L396.5 549.5L394.6 550.5ZM597.2 396.7L599 397.6L594.7 425.1L593.3 424.2ZM497.6 253.8L501.5 251.8L500.2 266.7L497.1 268.6ZM545.5 286.5L548.2 285.5L545.5 311.8L543.3 312.8ZM359.2 357.7L361 356.2L362.6 377L361.1 378.5ZM466.6 274.6L469.3 274.2L468.6 287.2L466.5 287.6ZM527.5 404L531.5 402.2L529.1 423.4L526 425.2ZM587.2 392.5L589.7 392.8L585.3 422.2L583.3 422ZM598.2 427.1L600.2 426.4L598.6 434.6L597 435.3ZM431.5 211.4L433.1 212.8L433.4 242.4L432.1 240.9ZM389 253.4L392.8 255L392.6 264.4L389.6 262.8ZM454.7 504.8L456.8 505.8L456.4 533.9L454.7 533ZM364.9 353.9L367.3 354.1L368.9 377.3L366.9 377.1ZM383.5 261.1L386 262.8L386.7 282.7L384.7 281.1ZM358 502.4L359.5 502.6L360.6 515.3L359.4 515.1ZM583.7 318.9L587.7 319.7L584 344.3L580.8 343.5ZM416.7 428.9L419.7 428L419.6 439.1L417.1 440ZM357.5 415.7L360 414.1L361.7 435.9L359.7 437.5ZM590 292.8L593.6 293.5L590.2 315L587.3 314.3ZM488.2 421.9L492.1 421.4L491.1 429.5L487.9 430ZM400.8 276.2L404.7 276.6L405.2 302.7L402.1 302.2ZM352.6 508.6L354.9 509L356.1 523.5L354.3 523.1ZM435.7 209.2L437.2 207.5L437.3 230.4L436.1 232.1ZM325.3 342.4L329 342.8L330.4 359.5L327.4 359.1ZM396.7 221.3L399.8 220.5L399.9 235.3L397.4 236.1ZM502.4 378.4L506.2 378.1L504.2 404L501.2 404.3ZM502.5 448L504 448.8L502.6 472L501.4 471.2ZM320.1 464.1L323.8 464.2L326 484.5L323 484.4ZM457.4 373.3L461.2 373.3L460.4 381.9L457.3 382ZM523.8 397.6L526 395.7L524.8 406.9L523.1 408.7ZM326.7 413.4L329.2 414.5L329.8 422.8L327.8 421.8ZM313.8 400.4L317.4 400.3L318.4 412L315.4 412.1ZM277 432L279.5 431.6L283.2 454.1L281.2 454.5ZM602.9 333.6L606.6 333L603.6 348.8L600.7 349.4ZM471.5 330.6L474.1 329.7L473.3 348L471.3 348.8ZM328.5 385.7L331.2 386.9L333.8 412L331.7 410.8ZM501.7 398.3L503.7 399.7L502.7 414.2L501.1 412.8ZM463.9 336.5L467.2 337.2L466.4 356.4L463.7 355.7ZM534.3 438.1L536.3 439.7L533.8 464.7L532.2 463.1ZM327.1 446.6L330.7 446.1L331.3 456L328.5 456.4ZM501.4 497.1L503.9 498.3L501.9 526.9L500 525.7ZM410.2 512.1L412.4 512.6L412.5 522.7L410.7 522.3ZM422.3 459.9L425.2 460.5L425 471.9L422.7 471.4ZM475.8 274.7L479.6 275.4L478.5 294.3L475.5 293.6ZM512.2 510.4L515.4 512.3L513 539.5L510.4 537.6ZM388.3 514.8L392.3 515.2L392.8 532.4L389.6 531.9ZM427 314.1L430.6 314.6L430.4 333.7L427.5 333.2ZM588.6 467.4L592.5 468.7L589 487.3L585.9 486ZM344.4 286.1L346.8 284.5L349.2 313.5L347.3 315.2ZM443.1 442L444.9 442.5L444.7 450.7L443.2 450.1ZM346.3 415.3L350.2 416L350.6 426.5L347.5 425.8ZM332.5 436.5L334.1 438.1L334.9 446.3L333.6 444.8ZM314.5 350.8L317.4 349L319.6 369.3L317.3 371.1ZM382.7 453.6L386.6 453.6L386.9 467.4L383.8 467.4ZM378.7 320.8L381.8 321.7L381.9 331.7L379.4 330.7ZM308.1 323.8L311.8 324.5L315 353.4L312 352.7ZM401.8 421.6L403.6 423.2L404.1 439L402.6 437.4ZM411.3 212.7L414.6 214.7L414.4 227.4L411.8 225.4ZM305.3 417.9L308.9 417.8L310.8 434.4L307.9 434.5ZM583.4 374L585.1 374.8L583.3 385.9L582 385ZM539.9 327.6L543.1 327.9L541.8 335.9L539.3 335.7ZM463.9 414L466.9 412.3L466.2 423.7L463.8 425.4ZM539.1 311L541.7 310.5L539.4 332.9L537.4 333.5ZM503.5 491.8L506.7 490.4L505.4 503.3L502.8 504.7ZM346.1 349.5L350 348.3L350.7 362L347.5 363.1ZM338.5 488.1L341.7 488.9L343.9 511L341.4 510.2ZM544.2 513.2L547.4 514.4L544.7 534.8L542.2 533.6ZM629.2 414.3L631.9 415.1L626.2 443.7L624.1 443ZM287.2 325.7L288.9 323.8L291.9 345.2L290.6 347ZM632.3 355.9L636 354.2L633.5 364.7L630.5 366.4ZM541.3 319.1L544.8 320.1L542.8 336.1L540 335.2ZM459.9 319.9L462.3 319.4L461.7 338.1L459.8 338.7ZM347 319L351 318.8L352.5 341.9L349.3 342.2ZM445.2 220.8L449 222.3L448.4 236L445.3 234.5ZM357.5 350.4L360.2 350.4L360.5 358.9L358.3 358.9ZM507.9 405L511.1 404.8L509 431.3L506.5 431.5ZM461.3 303.9L463.3 305.2L462.9 316.1L461.2 314.8ZM382.5 358.9L384.9 358.9L386.4 387.4L384.6 387.5ZM502.3 449.4L504 451.4L503.1 462.5L501.8 460.6ZM529.4 515.3L531.4 515L528.7 542.7L527.1 543ZM345.2 473.8L349.1 473.2L349.7 484.2L346.5 484.9ZM536.3 312L540 313.2L537.5 336.6L534.5 335.5ZM310.3 266.9L312.8 266.5L315.9 293.8L313.8 294.2ZM621.8 400.4L623.9 400.7L621.6 411.7L619.9 411.4ZM619.9 399.7L622.6 401.6L619.6 416.1L617.5 414.2ZM377.7 256.3L381.1 256.8L382.3 284.5L379.6 284ZM607.1 293.9L609.2 292.1L606.2 311L604.5 312.8ZM480.2 446.7L483.3 444.7L482.5 452.8L480 454.8ZM493.9 475.1L497.4 473.5L496.2 485.3L493.4 487ZM511.6 304.7L515.2 303.3L513.6 320.4L510.7 321.8ZM393.1 321.6L396.8 320.2L397 335.8L394 337.1ZM480 275.5L482.7 273.6L481.7 295.2L479.5 297.1ZM473.7 321.5L475.9 321.7L475.1 341.4L473.4 341.1ZM501.6 335.3L504.6 333.8L502.7 363.3L500.3 364.8ZM492.4 453.2L496.1 454.3L494.2 482.1L491.3 481ZM593.9 269.6L596.4 268.4L592.5 296.3L590.5 297.5ZM615.5 431L617.9 432.6L614.8 448.1L612.9 446.5ZM346.7 319L348.9 320.5L350 335.6L348.3 334.1ZM370 226L372.2 225.2L372.3 233.3L370.6 234ZM562.9 493L566.3 492.7L562.7 516.7L560 517ZM572 248.2L574.3 248.2L571 276.1L569.1 276.1ZM415.7 419.8L418 421.3L418.5 444L416.6 442.4ZM303.9 403.3L307.3 401.5L309.7 421.9L307.1 423.7ZM339.6 384.2L343.5 384.3L345.3 406.1L342.1 405.9ZM431.5 293.7L435.5 294.7L435 310L431.8 309ZM310.5 461.3L314.2 461.9L317.7 488.9L314.7 488.4ZM580.2 427.2L581.8 428.1L580.2 437.9L578.9 437ZM517.2 354.4L520.3 354.3L518.5 375L516 375.1ZM566.5 499.3L570.5 498.4L567.7 514.1L564.6 515ZM515.7 518.4L519.3 519.8L516.9 544.6L514 543.2ZM395.6 266.7L398.8 265.3L398.8 277L396.3 278.4ZM510.8 513.7L514.5 513.4L512.8 528.5L509.9 528.7ZM515.2 377.9L517.4 377.1L516.1 391.7L514.3 392.5ZM319.8 376.1L322.5 376.7L323.1 384.8L320.9 384.1ZM353.9 401.7L357.7 400.7L358.4 415.4L355.4 416.4ZM537 326.5L540.9 326.2L539.4 335.1L536.3 335.4ZM301.8 411.5L304.7 409.7L308.7 438.9L306.4 440.6ZM407.3 340.1L410.8 338.6L411.4 367.1L408.6 368.7ZM276 334.2L277.6 333.1L279.1 343.9L277.9 345ZM382.1 330.6L385.7 330.9L386.2 349L383.3 348.7ZM431.7 483.4L435.4 483.6L435 496L432 495.8ZM412.8 212.5L414.8 214.5L415.1 236.2L413.6 234.3ZM403.5 427.4L407.2 428.1L407.2 442.7L404.3 441.9ZM465.8 301.7L469 303.5L468.2 314.4L465.7 312.6ZM386.7 354.8L390 352.8L390.9 376.3L388.3 378.3ZM337.9 348.7L341.8 349.1L342.4 361.5L339.3 361ZM602 480L605.3 481L601.6 499.6L599 498.7ZM570.8 382.1L574.1 382.1L572.1 393.5L569.5 393.5ZM339.5 486.7L342.1 488.2L344.5 511.6L342.5 510.1ZM428.5 460.4L431.8 461.2L431.9 488.5L429.3 487.6ZM628.2 427.9L630.5 426.5L627.8 439.4L625.9 440.8ZM309.6 259.4L311.2 258.8L312.8 274L311.5 274.6ZM279.2 366.5L282.9 368.1L283.6 376.4L280.6 374.7ZM552.5 265.5L555.9 267.1L553.6 285.4L550.9 283.7ZM310.9 300L313.6 299.3L314.6 311L312.4 311.7ZM539.5 354.2L541.4 353.8L539 378.2L537.5 378.6ZM528.6 340.4L531.9 341.3L529.4 367.7L526.8 366.7ZM507.9 487.9L509.7 486.8L508.5 501.5L507 502.5ZM348.4 393.9L352.3 393.1L352.4 401.9L349.3 402.8ZM463.9 278.9L465.6 280L465.1 290.1L463.8 289ZM334.4 455.3L338 457.3L338.5 467.1L335.6 465.1ZM298.3 427.4L301.7 427.4L303.1 440L300.4 440ZM384.9 229.3L386.9 228.5L387.2 241.2L385.7 242ZM377 521L380.5 519.6L382 544.8L379.3 546.2ZM524.4 443L528.1 441.2L526.7 450.6L523.7 452.5ZM414.5 422.8L418 422.8L418.6 452.1L415.8 452.2ZM448.5 285.8L450.1 285.6L449.9 308.9L448.6 309ZM522 252.7L525.9 252.7L524.1 269.2L521.1 269.1ZM487.4 424.3L490.9 425.5L489.5 447.4L486.7 446.2ZM589 279L592.7 279.3L589.4 300.1L586.5 299.8ZM515.4 333.2L517.8 332.7L516.1 354.5L514.2 354.9ZM341.3 430.2L345.1 429.9L347.3 455.1L344.3 455.4ZM601.3 361.4L603.1 361.6L600.4 378.4L598.9 378.3ZM413 383.4L416 382.9L416 396.2L413.5 396.7ZM405.9 311.4L408.2 312.7L408.3 324L406.4 322.7ZM377.4 501.7L381 503.5L382.5 528.8L379.6 527ZM348.3 392.8L351.5 394.8L353.3 417.1L350.7 415.2ZM551.3 428.1L553.4 427.8L551.9 438.7L550.2 439.1ZM372.1 443.2L375.7 441.5L377 464.5L374.1 466.3ZM297.6 327L299.5 327.4L301.3 342.1L299.8 341.7ZM624.6 290L627.4 292L625 304L622.8 302ZM346.7 465.5L349.2 463.8L349.7 472.4L347.7 474ZM505.8 367.5L509.5 366.8L507.3 396.2L504.3 397ZM448.3 211.9L450.3 213.1L450 232.9L448.4 231.6ZM613 400.5L615.4 401.3L610.3 430.3L608.4 429.6ZM621.2 336.1L623.5 337.3L619.5 360L617.6 358.8ZM450.5 337.9L452.1 337L451.8 348.5L450.6 349.4ZM280.6 332.1L284.1 333.5L287.3 356.9L284.5 355.5ZM529.2 302L533.2 303.5L531 324.7L527.8 323.2ZM288.6 406L291.8 407.7L295.6 433.5L292.9 431.8ZM297.1 336.3L300.7 335.9L303.9 362.2L301.1 362.6ZM307.4 452.5L309.6 451.3L311.8 468.2L310 469.4ZM479.5 277.4L482.9 278.6L481.8 296.1L479.1 295ZM589.9 278.5L591.5 280.4L589.8 291.1L588.6 289.2ZM402.4 295.6L404.8 297.2L405.4 319.4L403.4 317.8ZM558.6 406.7L562.4 405.9L559.6 425L556.6 425.8ZM337.4 355.2L340.1 357.1L342.4 381.8L340.2 379.9ZM437 364.3L440.9 364.4L440.4 378.9L437.3 378.8ZM639.6 397.1L641.5 398.4L636.8 421.7L635.2 420.4ZM406.1 529.1L409.8 527.3L410 544.3L407.1 546.1ZM506.7 396.5L510.4 396.9L508.8 414.4L505.8 413.9ZM553.8 221.8L557.3 222.9L554.2 250.6L551.5 249.4ZM559.3 265.4L561.6 266.6L558.8 291.1L557.1 289.9ZM391.6 341.3L394.9 341.4L395.9 367.8L393.2 367.6ZM391.8 231.8L394.4 230L395.2 254.2L393.1 256.1ZM559.1 315L562.8 315L559.5 341.7L556.5 341.8ZM461.3 282.9L464.5 284.7L463.7 301.2L461.2 299.5ZM559.8 449L562.4 447.6L560.6 459L558.5 460.5ZM331.6 395.5L333.9 395.7L336.9 423.6L335 423.4ZM331.8 319.1L335.5 320.9L337.9 348.1L334.9 346.3ZM615.6 461.6L619.3 460.3L615 480.5L612.1 481.8ZM437.8 503.2L440.6 502.7L440.4 524.1L438.2 524.5ZM476.4 455.8L479.6 454.8L478.6 467.7L476.1 468.8ZM436.6 335.7L440.1 333.9L439.9 362.6L437.1 364.4ZM437.2 362.6L440.9 361L440.6 390L437.7 391.6ZM453.9 529.9L455.6 528L455.3 544.4L453.9 546.3ZM566.7 383.1L569.8 383L566.6 406.3L564.1 406.5ZM452.8 488.1L456.1 488.7L455.5 501.3L452.8 500.6ZM495.1 225.2L496.8 224.2L495.8 243.6L494.4 244.6ZM359.6 303.2L362.5 302.6L363.2 317L360.9 317.7ZM556.9 269.9L560.8 270.2L558.5 286.6L555.5 286.3ZM541.7 429.5L545.2 427.8L543.5 438.7L540.7 440.5ZM565.1 491.2L567 489.9L565.6 498.4L564 499.8ZM512.4 360.7L515.7 360L513.9 381.6L511.1 382.3ZM386.3 385.4L387.8 386.5L388.6 402.3L387.4 401.2ZM420 312.9L422.6 311.8L422.4 321.2L420.3 322.3ZM622.6 376.6L625.7 375.5L621 400.2L618.5 401.3ZM604.3 445L608.1 445.4L604.6 462.7L601.5 462.3ZM406.4 314.6L410 315.2L410.6 344.3L407.7 343.7ZM406.5 222.3L408.1 220.6L408.8 244.6L407.5 246.3ZM430 510L433.3 508.7L433 522.3L430.4 523.6ZM434.3 307.9L437.7 306.4L437.3 318.9L434.5 320.5ZM514.7 304.2L517.4 305.5L516.1 319.3L513.9 318ZM624.4 319.4L626.8 320.3L623.2 340L621.3 339.1ZM604.6 461.9L608.4 461L603.4 487.4L600.4 488.4ZM362.7 360.4L365.6 360.4L366.7 379L364.4 379.1ZM420.3 216.3L422.9 215.2L422.8 227.4L420.7 228.4ZM336.3 408.9L338.8 407.1L341.9 436.9L339.9 438.7ZM376.5 230.5L380.4 231.7L380.9 250.1L377.8 249ZM362.3 471.2L364.9 470.2L365.4 479.7L363.2 480.6ZM507.4 435.4L510.9 436.1L509.7 444.8L506.9 444.1ZM593 424.8L594.6 424.6L591.1 446.7L589.9 446.9ZM429.8 492.5L433.4 491.7L433 506L430.2 506.8ZM316.1 321L318.5 322.4L320.4 340.9L318.5 339.5ZM519 269.3L521.7 268.5L519.6 296.4L517.4 297.2ZM321 339.6L324.4 338.5L326.7 361.9L324 363ZM311.9 479.1L314.8 478.7L317.5 499.7L315.2 500.2ZM304.1 307.4L306.7 305.7L309.5 330.1L307.5 331.8ZM566 283.6L567.9 284.6L565.5 305L564 304.1ZM534.8 228.2L538.7 229.8L536.8 247.4L533.6 245.7ZM279.3 326.9L282.6 327.2L284.3 341.6L281.7 341.3ZM397.8 377.7L400.8 376.7L401.4 396.9L399 397.9ZM414.8 529.7L418.1 527.9L418.1 541.6L415.5 543.4ZM428 314L431.7 313.9L431.6 338.6L428.6 338.7ZM638.4 384.9L641.8 384.4L638.1 400.9L635.4 401.4ZM402 368L405.1 369.5L405.3 385.5L402.9 384ZM508.5 359.4L511.4 358.7L509.9 376.7L507.6 377.3ZM375.8 479L379.3 478.6L380.6 501.7L377.8 502.1ZM331.6 282L334 283.4L335.9 304.3L333.9 302.9ZM516.4 463.4L519.3 463L518.1 472L515.8 472.4ZM319.4 256.1L321.5 254.2L324.4 281.8L322.7 283.7ZM279.3 317.1L283 316.5L284.6 330.7L281.7 331.4ZM355.6 287.9L359.5 286.5L359.6 295.8L356.4 297.3ZM381.5 370.6L385.4 371.8L385.4 382.9L382.3 381.7ZM585.6 343L587.9 341.3L585.6 355.7L583.8 357.4ZM430.9 359L434.4 358.8L434.3 384.8L431.5 384.9ZM586 355.1L588.8 354.4L585.1 378.7L582.9 379.4ZM334.6 446.3L336.5 448.2L338.4 466.1L336.9 464.1ZM274.8 357L278 357.8L280 373.1L277.5 372.3ZM408.6 378L410.9 377.2L411.1 391.9L409.3 392.7ZM378.2 469.8L381.4 469.7L382.8 493.4L380.2 493.5ZM424.9 218.3L427.5 219.8L427.7 245.4L425.6 244ZM417.4 441.8L420.7 441.1L420.8 460.8L418.1 461.6ZM627.4 390.1L629 390.8L627 400L625.8 399.4ZM514.2 314.3L517.5 315.1L515.7 334.5L513.1 333.7ZM518.1 380.5L521.7 380.9L519.5 404.3L516.7 403.9ZM533.2 321.9L536 320.2L533.5 347.7L531.1 349.4ZM625.9 447.1L627.9 448.3L624.5 464.6L623 463.3ZM407.3 265.7L411.1 265.6L411.4 290.9L408.4 291ZM455.2 475.8L458.8 476.5L458 485.1L455.2 484.4ZM496.1 304.7L499.4 305.3L497.8 329.4L495.2 328.7ZM565 284L569 282.9L567.3 291.8L564.1 292.8ZM497.1 333L498.7 333.7L497.8 348L496.6 347.3ZM557.9 393.4L561 391.6L557.5 419.6L555 421.4ZM372.7 371.6L375 370.6L375.8 385.7L373.9 386.7ZM518.3 214.2L520.6 215.3L518.7 243L516.9 241.9ZM467 513.9L471 515.7L469.8 541.1L466.7 539.3ZM541.8 321.3L545.5 322.9L544 332.3L541 330.7ZM506 303.9L509.1 305.4L507.6 323.9L505.2 322.4ZM545.6 318.3L549.6 319.9L546.5 347.9L543.3 346.3ZM340.8 267.9L344 269.4L345.4 289.2L342.9 287.8ZM366.4 375.3L369.9 375.7L371.3 400L368.5 399.6ZM313.1 417.9L315.4 419.9L316.4 429.5L314.5 427.5ZM491.9 327.3L493.9 325.4L492.6 351.6L491 353.6ZM452 510.5L455.2 509.3L454.7 536.1L452.1 537.2ZM425.3 205.6L428.3 204.6L428 215.6L425.6 216.6ZM316.2 469L319.7 467.9L322 487.5L319.1 488.6ZM293.9 356.8L297.5 356.5L300 377.3L297.2 377.6ZM473.7 340.3L475.8 340.4L475.1 355.5L473.5 355.3ZM597.7 319.8L600.8 319.6L597.9 337L595.4 337.2ZM417.1 489L419.7 488.1L420.2 513L418.1 513.9ZM343.2 318.1L344.9 319.1L346.3 335.4L344.9 334.5ZM436.1 487.1L439.6 487L439.3 507.1L436.5 507.2ZM497.9 249.8L499.4 250.5L498.3 272.8L497.1 272.1ZM478.6 271.9L481.5 272.5L480.3 298.1L478 297.5ZM496.6 477.3L499.4 475.4L498 493.1L495.7 495ZM296.5 284.1L300.1 282.2L302.5 303.4L299.5 305.3ZM606.5 295.8L609 294.1L605.9 312.8L603.9 314.5ZM337.7 347.8L341.5 346.2L341.9 356.9L338.9 358.4ZM265.9 368.9L269 369.7L272.8 393.4L270.3 392.6ZM381.1 438.1L382.9 436.8L383.4 448.5L382 449.7ZM592.8 308.9L595.5 307L592.8 323.8L590.7 325.7ZM567.5 414.1L570.5 415.7L567.4 438L564.9 436.4ZM468.9 504.5L470.5 505.1L470 513.4L468.8 512.8ZM564.6 375.8L566.5 376.4L564.1 395.2L562.6 394.6ZM587.8 321.7L590.2 322.3L586.8 345.7L584.9 345ZM334.4 427.5L337.3 426.8L339.4 448.1L337.1 448.8ZM479.4 386.1L483.4 386.1L481.9 415L478.7 415ZM268.6 344.8L270.8 344.9L272.1 354.5L270.3 354.5ZM303.4 326.8L306 328.3L309.4 355.3L307.3 353.8ZM282.5 352.1L286.1 351.3L288.1 367.2L285.2 368ZM453.2 370.3L456.4 370.9L455.8 390.5L453.2 389.9ZM574.5 298.3L577.9 300.1L574.9 321.2L572.2 319.4ZM452.6 350.7L456 352.2L455.4 360.8L452.6 359.3ZM366.4 489L369.5 490L371 511.3L368.5 510.3ZM612.6 273.1L614.7 271.3L610.5 297.9L608.8 299.7ZM275.2 329.1L277.3 328.8L280.5 350.2L278.9 350.5ZM511 363.3L513.2 363.4L511.7 383L510 382.9ZM609.6 359.3L611.3 359.3L606.7 387.6L605.3 387.6ZM381.4 315L383.2 316.9L383.5 326.9L382.1 325.1ZM321.3 464.7L325.2 464.5L326.5 479.3L323.4 479.5ZM442.3 520.3L445.4 519L445 531.4L442.5 532.7ZM533.7 400.3L535.4 400.4L533.7 417.6L532.3 417.5ZM364.7 230.2L367.8 229.3L368.2 241.5L365.6 242.5ZM285 293.2L287.8 292.6L291.5 319.9L289.3 320.5ZM463.1 258.3L466.9 257.2L466 277.8L463 278.9ZM632.6 431.2L634.1 431.6L630.8 447.8L629.6 447.4ZM455.8 344.7L457.3 343L457 370.1L455.7 371.9ZM396.2 241.7L399 240.3L399.9 268.5L397.6 269.9ZM373.7 393.5L376.4 394.5L376.7 404.6L374.5 403.6ZM344.5 244.2L348.2 243.6L350.2 271.8L347.2 272.4ZM583.9 401.1L585.5 403L583 420.3L581.7 418.4ZM353.9 465.9L355.6 466.9L358 491.4L356.6 490.3ZM318.8 346.2L321.6 347.9L324.7 376.2L322.5 374.4ZM546.9 481.6L548.5 479.8L545.6 505L544.3 506.8ZM341.6 268.3L343.7 268.2L344.6 281.8L342.9 281.9ZM514.7 230.3L517 229.8L515.6 246.8L513.9 247.3ZM416.6 490.6L418.3 489.4L418.4 498.9L417 500.1ZM351.2 229.7L353.8 228L355.8 256.2L353.7 258ZM424.9 426L428.9 426.9L428.4 435.4L425.2 434.5ZM570.7 279L572.9 277.7L571.1 290.5L569.4 291.8ZM412.7 484.6L414.6 483.2L414.8 494.7L413.2 496.2ZM513.6 286.2L515.3 285.1L514.4 295.7L513.1 296.8ZM486.1 491.4L489.9 491.1L488.3 515.6L485.2 515.8ZM564 488.8L566 489.7L563.3 509.3L561.7 508.4ZM497.8 425.8L500.4 426.2L499.4 437L497.3 436.7ZM428.3 326.2L432 326.4L431.8 344.9L428.8 344.7ZM352.7 307.2L356.4 308.1L357.8 331L354.9 330.1ZM422.9 452.3L424.4 452.5L424.6 466.1L423.3 465.9ZM372.2 473.3L375.5 474.3L376.2 489.7L373.6 488.7ZM385.6 342L387.4 340.7L389 369.7L387.5 371.1ZM519.9 280.9L521.5 280.6L520.7 289.4L519.4 289.7ZM358.6 373.7L362.6 373.2L364.6 403L361.5 403.4ZM378.4 239.4L380.4 239.7L380.6 248.4L379 248.1ZM589.6 279.2L593.3 277.7L590.3 296L587.4 297.5ZM434.1 278.1L437.9 276.1L437.5 293.8L434.4 295.8ZM419 311.7L421.8 311.9L421.6 325.2L419.4 325ZM434.8 404.7L437.5 406.5L437.2 418.3L435 416.5ZM601.2 303.7L602.9 305.4L598.9 332.3L597.6 330.7ZM617.6 316.7L619.4 316.9L616.6 332.8L615.2 332.7ZM405 491.8L407.2 492.8L407.9 514L406.2 513ZM305 430.9L306.6 432.5L307.9 442.9L306.6 441.3ZM462.6 321.2L465.9 319.9L465.1 333.6L462.5 334.9ZM400.7 505.6L402.3 505.8L402.9 520.8L401.6 520.6ZM466.6 218.6L470.2 218.6L469.3 230.5L466.5 230.5ZM558.2 425.5L561 426.4L557.5 453.4L555.3 452.5ZM294.5 290.8L298.4 292L299.8 306.4L296.6 305.3ZM583.4 430.2L585.2 431.6L581.6 455.7L580.2 454.3ZM499.9 402.2L501.7 403.4L500.3 426.5L498.8 425.3ZM497.4 275.4L500.1 274.4L499.2 284.3L497.1 285.3ZM302.7 325.5L306 323.7L309.3 351.4L306.6 353.2ZM518.6 300.2L520.6 302.1L518.8 326.2L517.2 324.4ZM514.5 364.4L517 364.6L515.2 385.8L513.3 385.6ZM338.2 289.8L340 289L342.7 317.8L341.2 318.6ZM434.6 316.8L438 318L437.7 336.6L435 335.4ZM410.5 251L414.3 249.6L414.3 268.5L411.2 269.9ZM420 259.6L423.9 260.2L424 289.6L420.9 288.9ZM389.4 237.4L393 236.7L393.1 250.9L390.2 251.6ZM598.9 300.9L601.8 301.2L597.9 326.4L595.6 326.2ZM530.3 254.5L534.2 254.2L531.9 277L528.8 277.2ZM589.1 249.6L591.4 250.2L589.5 261.9L587.7 261.4ZM586.3 251.4L589.4 251.4L586.4 272.1L583.9 272.2ZM605.8 421.1L609.4 423.1L607.1 433.2L604.2 431.2ZM388.7 231.5L390.6 230.7L391.7 256.4L390.2 257.2ZM479 509.2L481.2 510.5L480.4 522.8L478.7 521.5ZM339.3 279.9L342.7 281.4L344.8 308.6L342.1 307.1ZM390.3 304.7L393.1 303.6L393.5 320.1L391.3 321.2ZM520.7 399.7L522.9 401L521.2 420.7L519.4 419.3ZM578.3 268.9L582.2 270.5L580.5 279.5L577.3 277.9ZM453.4 236.4L456 234.5L455.5 257.5L453.5 259.5ZM577.1 501.2L581 499.7L577.8 517.1L574.7 518.5ZM538.1 376.9L539.7 375.3L538.3 388.3L537 390ZM369.6 467.7L372.6 468.3L374.6 496.3L372.2 495.8ZM435.6 365.5L439.4 365L439 382.8L435.9 383.3ZM457.6 389.7L460.8 388.7L460.1 415.1L457.6 416ZM311.4 331.4L314.4 330.1L316.7 351.3L314.2 352.6ZM495.6 427.2L498.2 428.3L496.6 453.6L494.5 452.6ZM577.1 478.7L578.9 476.8L576.4 492.7L575 494.6ZM491.7 219.7L494.4 220L493.4 234.4L491.3 234ZM467.3 424.7L469 424.4L468.5 439.1L467.1 439.4ZM521.1 296.3L523.7 295.6L521.9 316.2L519.8 316.9ZM456.5 314.1L460.1 313.3L459.4 329.4L456.5 330.3ZM488 404.4L490.7 406.2L489.7 419.5L487.6 417.7ZM570.6 242.2L574.2 240.3L571.4 260.2L568.6 262.2ZM621.8 334.7L624.1 335.9L621.8 347.6L620 346.4ZM406.8 434.8L409.7 436.7L409.8 449L407.4 447.1ZM406.2 244.3L409.1 242.4L409.3 261.7L407 263.6ZM319 320.8L321.6 320.1L324.3 345.1L322.2 345.8ZM468.4 256.9L471.2 256.8L470.5 266.7L468.2 266.8ZM459.8 245.2L463.4 247.1L462.6 267.2L459.8 265.4ZM436.5 349.2L438.3 351L438.3 372.9L436.9 371.1ZM417.8 428.4L419.8 426.6L419.8 436.6L418.2 438.3ZM486.4 415L489.1 413.6L487.8 434.5L485.7 435.9ZM515.5 312.5L517.7 313.3L516.3 330.8L514.5 330.1ZM351.7 455.3L353.9 455L356.6 483.6L354.8 483.9ZM618 436L621.3 436.7L618.7 448.4L616 447.7ZM333.8 268.2L336.1 269.1L338.1 291.6L336.2 290.7ZM273.1 351.1L276.9 352.1L277.7 361.4L274.8 360.4ZM270 338.8L272.6 337L274.7 352.3L272.7 354ZM565.2 345.9L566.7 347.3L565.1 360.1L563.8 358.7ZM593.5 366.5L595.2 366L592.3 384.6L591 385.1ZM633.5 369.9L635.2 370.5L631.5 389.8L630.1 389.2ZM542.7 359.4L545 359.8L542.4 384.6L540.6 384.2ZM439.8 509.1L441.6 509.6L441.5 525.4L440.1 524.9ZM580.3 334.8L583.5 334.6L579.6 361.9L577.1 362.2ZM503.8 398.1L506.1 399.7L505.1 410.9L503.2 409.3ZM533.9 440.4L537.7 439.1L534.8 463.8L531.8 465.2ZM557.9 410.1L561.4 408.5L559.6 419.6L556.7 421.1ZM429.3 490.5L431.7 490.6L432.1 519.7L430.2 519.6ZM584.2 433.6L585.8 433.1L582.2 457.3L580.9 457.8ZM466.7 209.1L469.4 210.2L468.6 237.5L466.4 236.5ZM311.5 302.5L315.3 301.6L318.2 329.2L315.2 330.1ZM322.8 348.3L326.7 350.2L328.4 369.5L325.2 367.6ZM308.1 431.8L311.1 430.5L313.2 448.2L310.8 449.4ZM330.7 302.2L334 303.9L334.3 312L331.6 310.3ZM287.1 335.7L291 333.7L292.1 345.5L289 347.5ZM410.5 239L414.4 239.5L414.3 257.5L411.2 257ZM424.3 316.4L427.9 317.9L427.7 335.9L424.8 334.4ZM424.7 350.5L428.2 349.7L427.8 361.9L425.1 362.6ZM427.6 344.7L429.7 345.5L429.8 364.3L428.1 363.5ZM635.7 315L639 313.4L634.7 335.2L632 336.8ZM379.8 485.7L383.2 486L383.7 500.3L381 499.9ZM450.1 200.6L452.3 200.7L452 224.3L450.2 224.2ZM541.4 439.3L544.5 441.2L541.8 464.2L539.3 462.2ZM524.4 354L526.5 353.3L524.9 370.8L523.2 371.5ZM514.5 394.6L517.5 394.7L515.6 416.5L513.2 416.5ZM381.8 329.9L383.4 329.9L385.1 359.8L383.9 359.8ZM369.2 222.5L371.5 224.1L371.9 236.8L370.1 235.2ZM311.1 379.7L313 379L316.1 403.2L314.6 403.9ZM594.5 336.1L598.5 335.1L594.5 358.9L591.3 359.8ZM610.4 460.7L613.9 461.7L611.4 472.5L608.6 471.5ZM344.5 478.2L347.5 477.5L349.3 497.5L346.9 498.2ZM398.7 369.7L400.7 370.2L401.5 390.8L399.8 390.3ZM596.2 396.4L599.4 396.9L595.3 421.2L592.7 420.7ZM489.2 268.3L492.9 267.6L491.3 297.2L488.3 297.9ZM528.1 297.2L531.5 298.5L529.2 321.5L526.5 320.3ZM308.7 339.9L311.7 341.7L313 355.9L310.7 354ZM432 507.3L435.8 506.6L435.7 531.5L432.6 532.1ZM341.8 467.8L344.1 468.7L346.8 494.1L344.9 493.2ZM304.9 322.9L307.7 322.6L310.2 344.4L308 344.7ZM456.9 482.4L460 481.4L459.4 490.4L456.9 491.3ZM353.2 436.4L355.3 435.2L356.3 448.3L354.6 449.5ZM594.4 325.7L596.4 325.8L594.8 335L593.2 334.9ZM389.7 364.9L393.6 365.4L394 384.7L390.9 384.1ZM483.1 312L486.5 310.9L485.6 320.6L482.8 321.8ZM445.3 264.7L448.6 264.5L448.1 283.6L445.5 283.7ZM339.7 462.6L341.7 462.8L343.2 478.1L341.6 477.9ZM466.3 299L469 298.1L468.2 319.8L466.1 320.7ZM321 266.5L323 267.4L324.5 282.9L322.9 282ZM460.7 365.9L462.8 367.5L462.2 396.2L460.5 394.6ZM434.5 267.5L436.1 268.1L436.3 295L435 294.5ZM609.2 347.2L613.2 347.2L608.9 370.2L605.8 370.3ZM304.4 464.9L306.9 466.4L308.3 478.1L306.3 476.6ZM395.6 229.3L397.5 229.4L398.5 256L396.9 256ZM287 362.1L290.7 361L294.4 387.8L291.4 388.9ZM522.5 357.3L525.4 356.2L523.6 374.5L521.3 375.6ZM296.9 456.7L300.8 457L302.6 472.1L299.5 471.8ZM418.4 213.8L420.1 212.7L420.2 228L418.9 229ZM369 408.2L370.8 408.2L372 425.8L370.5 425.8ZM533.9 499.6L537.7 498.5L534.9 521.2L531.9 522.3ZM611.3 350.5L614.8 351.7L612.5 362.1L609.7 361ZM637.2 343.6L639.9 343.9L637.1 356.5L635.1 356.2ZM302.1 438.6L304.9 439.4L305.6 447.5L303.4 446.6ZM485 348.8L486.7 349.3L486 362.1L484.6 361.6ZM541.2 376.3L542.9 377.8L540.1 406.9L538.7 405.4ZM450.1 490.1L452.1 491.5L451.8 509.4L450.2 507.9ZM614.9 434.3L617.1 435.1L613.7 452.7L611.9 451.9ZM600.6 448.8L602.8 450.2L600.6 461.9L598.8 460.5ZM311.9 322.8L315 321.5L315.6 330.5L313.1 331.8ZM383.4 267.4L385.2 269.1L386.7 298.6L385.3 296.9ZM577.6 374.5L580.7 376.4L577.5 397.4L575 395.5ZM356.1 430.8L360 429.1L361.7 453.5L358.6 455.1ZM564.9 432L568.3 432.3L564.9 455.4L562.2 455.2ZM501.7 497.9L504.5 499.1L503.3 511.3L501 510.1ZM556.8 334.2L559.7 335L556.7 360L554.4 359.2ZM492.1 443.7L495.2 442.7L494 457.8L491.5 458.9ZM283.9 328.7L286.3 327.7L289.1 348.1L287.2 349ZM368.1 397.1L369.7 396.5L371.8 424.1L370.5 424.7ZM482.1 252.9L485.2 254.2L484.2 270.4L481.7 269.1ZM577.8 498.5L579.7 500.1L575.4 529L573.9 527.5ZM429.6 350.9L431.5 350.2L431.4 362.1L429.9 362.8ZM492.4 354.9L495.8 355.1L494.2 379.5L491.5 379.3ZM310.8 309.9L312.5 308.6L315.8 335.4L314.4 336.7ZM418.6 526.6L422 525.7L421.9 539.4L419.2 540.3ZM432.7 423.4L436 421.8L435.6 430.8L432.9 432.4ZM523.5 319.6L526.1 318.2L524.3 338.3L522.2 339.8ZM512.8 345.7L515 347.4L514 356.2L512.3 354.6ZM349.7 433L352.7 434.3L355.3 463.1L352.8 461.8ZM401 503L404.6 504.1L404.6 515.3L401.7 514.3ZM584.6 276.2L588.1 277.9L585.7 292.8L582.9 291.1ZM301.7 404.8L304.8 405.7L307.7 428L305.2 427.1ZM532.2 388.2L534.9 389.5L532.8 409.5L530.6 408.2ZM616.3 359.2L618.3 359.8L616.4 369.6L614.7 369ZM622.7 398L625.4 399.4L621.6 418.8L619.4 417.4ZM336.9 345.8L340.2 346L341.5 363L338.9 362.8ZM516.5 268L518.8 267.6L517.6 280.8L515.7 281.2ZM565.1 331.4L568.1 331.9L565 355.8L562.6 355.2ZM379.1 417.7L382.4 419.4L383.2 438.5L380.6 436.8ZM342.4 324.2L344.7 324.6L346.5 345.9L344.6 345.6ZM404.9 458L407.3 458.9L408.4 487.7L406.5 486.8ZM306.9 471.8L310.5 471.6L311.1 480L308.2 480.2ZM375.5 271.9L377.6 271.5L378.5 290.5L376.9 290.9ZM463.3 438.7L466.2 439.5L465.4 461.6L463.1 460.8ZM470.7 380.2L473.1 380.3L472.3 398.4L470.4 398.3ZM563.5 491.9L565.5 492.7L562.9 510.5L561.4 509.6ZM624.2 314L627.7 313L622.9 338.8L620.2 339.8ZM641.8 384.9L645.3 386.2L639.7 412.6L636.9 411.3ZM327 433.8L328.8 433.5L331.9 459.4L330.5 459.7ZM588.5 307L590.6 305.4L589 314.7L587.4 316.3ZM483.9 234.6L487.7 235.8L486.5 253.3L483.4 252.1ZM464.1 432.8L466.9 431.1L466.2 441.2L464 443ZM520.4 339.3L522.3 340.7L520.1 370.2L518.6 368.7ZM490 509.1L493 510.3L491.9 521.9L489.5 520.6ZM451.4 368.1L453.3 367L453 386.9L451.5 388ZM382.4 219.9L385.1 221.7L385.2 232.3L383.1 230.4ZM437.5 336.1L439.4 338.1L439.4 358.8L437.8 356.9ZM300.5 459.5L302.6 460.1L304.7 475.4L303.1 474.8ZM547.7 490.9L549.2 491.7L548 501L546.7 500.1ZM548.4 319.7L551.5 320.2L548.6 346.5L546.1 346ZM535.7 357.5L539.4 357.4L537 377.9L534.1 378ZM279 349.6L282.7 350.8L286.2 375.7L283.2 374.6ZM357.6 331.3L360.6 333.1L362.5 360.3L360.1 358.5ZM525.4 376.7L528.3 375.3L526.1 398.5L523.7 399.9ZM320.5 276.5L323 277.9L323.9 289.7L321.9 288.2ZM329.7 301.4L333.6 300.2L333.8 308.3L330.6 309.5ZM385.5 330.7L388 329.1L388.4 342.1L386.4 343.8ZM285 437.8L286.8 439.4L288 447.9L286.5 446.4ZM388.2 419.7L392.2 419.5L392.4 434.9L389.2 435.1ZM436.6 494.6L438.8 496.3L438.6 509.1L436.8 507.4ZM509.8 451.8L511.5 453.8L510 473.7L508.7 471.7ZM506.1 490.9L508.9 490.3L507.7 501.8L505.4 502.4ZM443.5 480L445.3 479.1L445.2 502.2L443.8 503.1ZM487.8 426.9L490.5 427.5L489.2 449.8L487.1 449.2ZM443.7 242.5L447.6 240.5L447.1 269.3L444 271.3ZM573.6 380.7L576.5 382L573.3 404.4L570.9 403ZM296.4 392.3L300.4 391.4L304.2 420.3L301 421.2ZM351.2 338.8L353.1 340.3L354.5 357.5L352.9 356.1ZM447.4 528.5L449.9 528.3L449.5 540.9L447.6 541ZM479.8 530.6L482.3 532.3L481.1 556.9L479.1 555.2ZM476.1 391.1L478 391.9L477 421.8L475.5 421.1ZM331.9 252.6L334.4 252.4L335.7 269.1L333.7 269.2ZM415.2 288.9L417.8 289.9L417.8 304.5L415.7 303.5ZM595.5 438.6L598.2 439.2L596.4 448.1L594.2 447.5ZM425.7 534.6L428.1 535.1L428.2 553.6L426.4 553.1ZM310.1 467.6L313.1 468.9L314.9 483.8L312.5 482.5ZM382.3 240.7L385.1 238.9L385.9 259.3L383.6 261.1ZM538.1 245L541.9 244.2L539 274.2L536 274.9ZM330.8 375.8L332.7 376.7L333.9 389.8L332.4 388.8ZM646.2 371.9L647.9 373L643.3 395.8L641.9 394.7ZM600.7 324L602.5 325.3L598.5 351.8L597.1 350.5ZM339.8 288.2L343.1 289.1L343.3 297.1L340.6 296.2ZM366.6 493.4L370.3 494L370.9 507.5L367.9 506.9ZM564.8 315.6L566.5 314.9L564.7 329.1L563.4 329.9ZM561.8 500.7L565.8 499.6L563.7 510L560.6 511.1ZM316.8 304.9L318.8 303.5L320.3 318.5L318.7 319.9ZM411.2 465.3L412.9 467.3L413.5 485.9L412.1 483.9ZM379.4 423.4L382.2 421.8L383.6 446.7L381.4 448.3ZM439.5 456.2L441.8 454.6L441.8 480.9L439.9 482.6ZM472.4 211.4L475.5 212.6L474.7 227.9L472.2 226.7ZM445.6 270L447.4 271.1L447.3 294.3L445.8 293.3ZM479.5 268.3L481.9 267.3L480.8 295.4L478.9 296.5ZM581.5 258.5L584.3 256.6L582.3 268.9L580.1 270.7ZM365.5 451.3L368.2 449.4L369.2 465.6L367 467.5ZM278 353L280.6 352.5L281.6 361.6L279.5 362.1ZM483.1 199.4L485.2 199.5L484.5 210.8L482.8 210.7ZM404 479.7L405.9 478.9L406.3 492.1L404.8 492.9ZM499 204.1L502 203.2L500.4 230.6L497.9 231.5ZM434 470.1L437.7 469.3L437.2 479.9L434.3 480.7ZM418.4 201.2L420 203L420.2 218.7L418.9 217ZM393 282.4L395.5 281.9L395.6 293.4L393.7 293.9ZM458.2 201.3L461.4 199.6L460.7 210.9L458.2 212.5ZM327 488.9L330.9 490.8L334.3 520.5L331.2 518.6ZM323 398.1L326.8 399.5L328.1 415.3L325.1 413.9ZM426.2 524.2L429.6 525.8L429.6 547.2L426.9 545.5ZM534.3 508.7L536.2 507.1L533.4 533.7L531.9 535.2ZM482.7 327.5L485 329.1L484.1 345.1L482.3 343.4ZM583.6 450.6L585.8 449.8L583.8 460.9L582.1 461.7ZM465.7 251.1L468.1 252.1L467.5 266.7L465.5 265.6ZM630.1 345L633 343.2L628.2 368.5L625.8 370.2ZM577.2 487.2L581.1 487.9L577.8 505.9L574.7 505.3ZM278.8 324.4L281.4 322.8L284 341.3L281.9 342.9ZM575 486.9L576.5 486.4L572.7 512.8L571.5 513.3ZM424.2 373.7L425.8 372.3L426.1 390.2L424.7 391.6ZM499.7 439.4L501.7 437.8L500.6 453.3L499 454.9ZM538 405.4L541.3 404.2L539.5 417.6L536.9 418.7ZM374.1 324.4L377 323.2L378.4 348.5L376.1 349.7ZM472.7 450L474.7 450.9L473.9 471.7L472.3 470.8ZM333 306.5L334.9 307.9L336.7 327.1L335.2 325.7ZM325.2 358.4L328.6 358.7L331.3 385.6L328.5 385.4ZM277.6 363.5L280.3 363.6L283.9 387.6L281.8 387.5ZM396.1 219.2L399 220.5L399.1 233.1L396.8 231.8ZM332.3 380.4L333.9 380L334.8 389.8L333.5 390.2ZM592.9 441.6L596.5 441.6L591.5 470.8L588.6 470.8ZM570.6 493.7L573.9 494.9L572 504.1L569.4 503ZM327.3 316.5L329.3 318.3L330.8 333.8L329.2 332.1ZM335.9 382.8L338.6 383.3L339.4 393.9L337.2 393.4ZM496.4 535.9L499.1 535.3L497.7 552.6L495.5 553.2ZM586.7 474.9L589.9 475.9L585.5 502L582.9 501ZM447.3 498.3L450.6 499.7L450.2 524.5L447.5 523.1ZM409.8 216.9L413.8 218.8L414.1 246.7L410.9 244.8ZM345.1 326.1L347 325.9L349.7 355L348.1 355.3ZM326.8 326.2L329.1 324.7L330.3 338.9L328.5 340.4ZM362.4 345L366 345.6L367.1 366.4L364.3 365.8ZM553.4 423.2L555.4 421.4L553.3 437.6L551.8 439.4ZM467.1 320.5L471 321.3L470 340.6L466.9 339.8ZM533.8 501.7L537.2 502.3L535.7 511.3L533 510.6ZM516.9 384.1L520.9 384.1L519.4 395L516.2 395ZM295 391.2L297.6 392.4L299.8 409.7L297.8 408.6ZM484.5 357.3L487 357.3L486.3 366.2L484.3 366.3ZM450.2 400.3L452.9 398.6L452.5 418.8L450.3 420.5ZM444.3 412.7L446.5 412.4L446.3 433.3L444.5 433.5ZM498.5 270.8L501.5 270.9L499.7 300.4L497.3 300.2ZM399.6 461.6L401.2 461.1L402.6 489.4L401.3 489.9ZM294.3 340.9L297.5 342L298.7 354L296.1 352.9ZM399 408.6L402.2 409L402.7 428.6L400.1 428.2ZM437.7 267.4L439.8 267.1L439.7 288.5L438.1 288.8ZM449.1 199.8L451.7 199.6L451.3 216.4L449.2 216.5ZM549.7 464.9L553.1 464.1L551.2 476.7L548.4 477.6ZM307.4 428L310.6 426.7L314.2 454.6L311.7 455.8ZM473.5 487.3L475 487.7L474.5 498.1L473.3 497.7ZM428.1 387.5L431.6 387.6L431.6 415.2L428.9 415.1ZM461.9 208.3L464.7 209.9L463.9 239.4L461.7 237.8ZM533.3 248.2L534.9 249.1L533.3 267.5L532.1 266.6ZM503.8 514.5L505.6 512.8L504.1 533.1L502.6 534.8ZM528.7 269.4L530.6 269.2L529.2 284.1L527.8 284.3ZM447.8 217.7L449.7 216.6L449.4 229.7L447.9 230.9ZM277.1 324.1L279.5 323.3L283.8 351.5L281.8 352.3ZM487 529.5L490.5 530.9L489.3 544.6L486.5 543.3ZM473.3 465.8L477.1 466.6L475.8 496.5L472.7 495.7ZM542.1 488.1L544.8 489.2L542 512.5L539.8 511.5ZM449.1 240.7L451.6 238.8L451.2 252.6L449.2 254.6ZM466 263.2L469.8 265.1L468.9 281.8L465.8 279.9ZM497.2 376.2L499.9 374.9L498.5 394.7L496.3 396.1ZM322.3 376.5L324.9 375.9L328 403.8L325.9 404.4ZM369.3 403.8L372.1 403.5L373 420.5L370.8 420.8ZM539.9 339.7L542.8 340.2L541.5 349.9L539.1 349.4ZM551.4 444L554.7 442.1L551.4 468.4L548.8 470.2ZM595.6 476.7L597.4 478.4L594.3 495.8L593 494.2ZM356.5 457.4L360.1 458.4L361 473.9L358.1 472.9ZM491 297.5L494.6 299.3L492.9 329.3L490 327.4ZM553.7 237L556.7 238.9L554.1 261.9L551.8 260ZM365.3 324.2L368.8 322.6L370.1 346.5L367.3 348ZM479 530.2L482.5 530.9L481.4 546.1L478.6 545.3ZM465.7 204.7L467.3 206.1L466.8 219.4L465.6 218ZM587.6 270.9L591.2 271.2L587 300.7L584.1 300.4ZM579.2 373L582.4 374.5L578.4 402.6L575.8 401.1ZM488.2 404.2L491.3 402.6L490 421.4L487.6 423ZM531.2 399.7L534.5 398.9L532.5 416.2L529.8 417ZM577.3 255.3L581.2 254.1L578.8 269.4L575.7 270.6ZM336.8 476.9L339.9 478.2L341.6 496.1L339.1 494.8ZM632.6 355L634.2 354.8L632.5 362.8L631.2 363.1ZM414.1 295.2L416.8 294.2L416.7 306.9L414.6 307.9ZM558.1 297.4L559.9 298.8L557 324.9L555.6 323.5ZM394.9 461.3L397.6 460.7L398.2 477.8L396 478.4ZM376.6 515L379.9 515.7L381.3 538.2L378.7 537.6ZM582.7 268.3L586.4 267.3L583 290.9L580 291.9ZM596.3 416.7L599.4 417.8L595.3 441.7L592.8 440.6ZM589.7 448.4L591.3 450.3L589.2 462.9L587.9 460.9ZM284.6 412.5L286.1 411.7L288.3 426.1L287.1 427ZM470 239.1L472.5 239.9L471.7 264.1L469.7 263.3ZM531.2 235L534.2 235.9L532.9 246.7L530.5 245.7ZM351.5 361.1L353.4 362.2L354.6 378.1L353.1 376.9ZM448.5 267.7L452.1 268.9L451.6 294.6L448.6 293.4ZM431 516L432.7 517.3L433 540.8L431.6 539.5ZM308.4 388.3L311.9 386.9L314.2 407.5L311.4 408.9ZM561 464.6L565 463.8L561.8 484.8L558.6 485.6ZM633.4 305.9L636.7 304.3L631.5 331.8L628.9 333.4ZM609.3 402.2L612.7 402.3L607.7 430L605 429.8ZM307.1 317.7L309.6 318.7L313.1 347.9L311.2 347ZM479.7 308.3L481.7 307.1L481 320.4L479.4 321.6ZM567.7 406L570.5 404.1L568.8 413.7L566.5 415.6ZM437.3 442.3L438.9 441.9L438.9 456.5L437.6 456.9ZM577.3 396.4L578.9 394.7L576.8 408.7L575.6 410.5ZM347.5 275.8L349.8 277.6L351.3 297.9L349.5 296.2ZM390.2 528.4L393.2 529.8L394.8 559.1L392.4 557.7ZM459.7 341.3L461.8 340L461.2 369.7L459.6 370.9ZM629.8 413.1L633.2 414.8L630.2 427.8L627.5 426.1ZM596.4 367.4L598.4 368.8L596.9 376.9L595.3 375.4ZM460.9 341.8L464.5 341.2L463.7 360.9L460.8 361.4ZM563 312.1L565.3 310.2L562.4 334.7L560.5 336.6ZM535.9 493.7L538 494.1L536.1 510L534.4 509.6ZM570 231.7L573.2 231.3L570.2 255.9L567.6 256.3ZM322.5 275.3L326.4 276.9L327.4 291.8L324.3 290.3ZM504.6 404.3L506.3 405.1L504.7 429.5L503.4 428.7ZM424.4 290.6L427.9 291.7L427.6 307.8L424.8 306.7ZM285.2 432.6L288.1 433.7L290.2 448.6L287.8 447.6ZM322.6 350.2L325.5 348.6L327.1 365.7L324.7 367.3ZM429.3 438.5L431.9 440.3L432.2 469.8L430.1 468ZM292.4 411.3L294.1 410.3L295.7 422L294.4 423ZM618.9 315.9L621.8 316.8L619.1 330.7L616.8 329.8ZM274.2 320.1L276.4 320L277.8 331.2L276 331.3ZM393.2 430.6L395.3 431.4L396.4 455.9L394.7 455.1ZM557.1 429.1L559.3 427.7L557.5 440.1L555.8 441.5ZM445.8 240.6L449 239.2L448.6 268.7L446.1 270.1ZM604.6 351.8L606.7 350.9L604.7 361.9L603 362.8ZM444.5 408L447.4 407.3L447.1 432.6L444.8 433.3ZM565.4 346.4L567.5 346.1L565.9 357.4L564.2 357.8ZM528.9 448.2L531.9 447.5L530.6 456.6L528.1 457.4ZM478.8 442L482 440.1L481 455L478.4 457ZM550.9 333L553.2 332L550.8 353.4L548.9 354.5ZM504.7 481.2L508.4 480.5L506.8 494.9L503.9 495.6ZM341.1 242.6L343.4 241.2L345.7 269.3L343.9 270.7ZM465 303.7L466.6 303.6L466.1 320.1L464.9 320.1ZM294.3 356.9L296.5 356.5L298 369L296.2 369.5ZM485.7 250.1L488.1 250.2L487.2 266.8L485.2 266.8ZM483.8 379.8L485.4 379.6L484.2 409.5L483 409.7ZM533.1 433.8L536.9 433.7L535.4 443.2L532.3 443.3ZM546 298.3L549.9 297.6L548.3 307.9L545.1 308.6ZM484.9 272.9L488.4 271.6L487 297.4L484.2 298.6ZM486.8 359.7L490.4 358.6L488.9 384.3L486 385.4ZM394 325.8L397.9 326.8L398.6 353L395.5 352.1ZM322.2 314.8L324.1 313L325.5 327.7L324 329.6ZM385.7 475.7L389 476.8L389.2 488.1L386.6 487.1ZM521.7 508L523.8 508.7L522 527.2L520.3 526.5ZM547.5 232.5L551.2 232.8L548.2 261.6L545.2 261.3ZM363.5 376.3L365.6 375.7L367.7 404L366.1 404.5ZM327.9 385.7L330.9 385.5L331.7 396.8L329.3 397ZM565.1 476.6L567.1 477.5L564.6 494.8L563 494ZM496.3 462.4L499.2 461.2L497.7 483.5L495.3 484.7ZM588.3 400L590.4 399.2L586.7 423.3L585.1 424.1ZM515.6 365.6L519.5 364.6L517.7 381.2L514.6 382.2ZM365.5 517.6L368.6 516.3L369.2 527.6L366.6 528.9ZM565.1 462.4L567.8 463.3L566 474L563.8 473.1ZM507.5 263.7L510.7 263.4L509.1 284.2L506.5 284.6ZM519.9 343.3L522.9 342.7L521.1 362.3L518.7 362.9ZM565.4 490.3L567.4 488.8L564.7 507.2L563.1 508.8ZM371.3 306L373.9 304.2L375.4 331.2L373.3 332.9ZM366.5 343.5L370.1 342.8L371 361.7L368.1 362.4ZM411 444.6L414.7 442.7L415.3 471.2L412.3 473.1ZM638.4 353.7L642.2 355.6L638.8 370.3L635.8 368.4ZM567 507.1L569.4 506.5L566.4 526.7L564.5 527.4ZM616.2 448.8L617.9 449.2L613.8 471.2L612.4 470.8ZM503.6 490.2L507.4 492L505.6 510.6L502.6 508.8ZM622.5 447.5L625.2 448.6L620.5 472.3L618.3 471.1ZM481.7 261L485.6 261L484.3 283L481.2 283ZM448.4 294.5L452.3 293.5L451.7 317.7L448.6 318.7ZM488.4 531.7L491.1 533.7L489.4 562.7L487.3 560.7ZM512.8 351.8L516.4 350.7L515.2 359.8L512.3 360.9ZM490.6 235.4L493.5 233.7L492.5 246.4L490.2 248.1ZM524.5 328.9L528.2 330.8L525.8 355.4L522.9 353.5ZM552.1 322.9L555.7 324.7L552.6 350.7L549.7 348.9ZM572.8 235.4L575.8 237.1L573.2 256.3L570.8 254.6ZM520.8 531L523.7 529.5L520.9 559L518.5 560.6ZM289.8 284.4L291.7 283.2L294.2 302.3L292.6 303.5ZM547.5 294.3L551.3 294.3L548.5 318.9L545.4 318.8ZM395.6 464.6L397.8 463L398 473.6L396.2 475.2ZM472.1 235.8L475.7 235.4L474.8 253.2L471.9 253.7ZM586.1 305.1L589.5 306.6L586.8 322.9L584.1 321.4ZM388.5 406.2L390.7 404.3L390.9 413.3L389.1 415.2ZM361.2 380L363.5 381.5L365.2 404.8L363.4 403.4ZM487.9 354.5L491.5 354.4L490.5 363.6L487.6 363.7ZM369.4 265.9L373.2 264L374 283.9L370.9 285.8ZM452.2 235.5L455.9 235.8L455.3 258.8L452.3 258.5ZM543.8 446.2L546.4 444.6L544.4 460.5L542.3 462.1ZM588.1 295.5L590.7 296.1L587.4 319L585.3 318.4ZM512.6 528.5L515 526.6L513.2 546.7L511.3 548.5ZM328.3 461.9L331.7 462.3L333.7 481.6L331 481.1ZM405.8 496.3L409.5 498.2L409.9 519.2L406.9 517.2ZM497.8 468.1L500.5 467.8L498.9 491.4L496.7 491.7ZM409 307.7L411.1 307.1L411.8 332.5L410.1 333.1ZM459.6 263.1L463 263.5L462.3 278.6L459.5 278.2ZM445.1 332.1L448.5 331.2L448.1 355.8L445.4 356.7ZM279.3 341.2L281 342.9L283.2 358.1L281.8 356.5ZM352.5 245.8L355.7 245.3L357.7 274.6L355.1 275.1ZM599 344.1L601.6 345.6L598.8 362.7L596.6 361.2ZM613.9 433.6L615.5 434.5L613.3 445.9L612 444.9ZM519.6 495.4L522.7 496L521.4 505.9L518.9 505.2ZM419 495.3L420.5 496.5L421.4 526.4L420.2 525.2ZM444.3 419.5L448 419.4L447.5 442.2L444.6 442.3ZM559.7 388.9L561.6 388.3L559.5 404.1L558 404.7ZM329.7 318.4L333.2 320.2L334.6 338.8L331.9 337ZM519.6 410.9L521.3 412.2L519 441.3L517.6 440ZM341.2 270.5L344.2 269.4L346.6 298.9L344.2 300ZM559.5 358.6L561.5 359.2L559.9 370.9L558.4 370.3ZM533.1 259L534.8 260.4L533.6 272.3L532.3 270.9ZM312.4 288L316.2 286.8L317.2 299.8L314 301ZM330.7 456L332.4 458L335.4 483.5L334.1 481.5ZM540.8 278.4L544 279.3L542.2 294L539.7 293ZM544 361.3L546.6 361.4L545.2 370.9L543.2 370.8ZM387.2 256.6L389.8 258L390.7 280.7L388.6 279.3ZM597.3 371.8L600.3 371.6L596.9 391.7L594.5 391.9ZM457.2 456.3L459.8 457.6L459.3 484.2L457.2 482.9ZM610.2 315.5L613.7 315.7L611.6 325.8L608.7 325.7ZM356.8 268.2L360.2 269.2L360.6 282L357.9 281ZM334.3 428.9L336.7 429.6L338.1 444.7L336.2 444ZM597.8 350.1L600.6 351L598.4 362.6L596.2 361.7ZM453.6 252.8L455.3 254L455 270.3L453.6 269.1ZM286.3 421L288.9 420L292.2 441.9L290.1 443ZM397.6 371.6L401.1 369.8L401.9 397.8L399.2 399.6ZM489.4 299.5L491.8 300.1L490.8 316.2L488.9 315.6ZM423 411.1L425.5 409.1L425.5 423.6L423.5 425.6ZM366.9 519.7L370.3 519.7L372 543.3L369.3 543.4ZM273.7 375.6L275.7 375.3L279.6 399.3L277.9 399.6ZM547.4 347.4L550.6 346.5L548.8 359.6L546.3 360.5ZM437.8 253.7L439.5 253.5L439.5 278.2L438.2 278.3ZM456.7 232.5L459 233.6L458.6 243.4L456.7 242.3ZM414.9 356.9L418.5 356.6L418.8 383L415.9 383.3ZM502.2 371.4L506.2 372.8L505 381.6L501.8 380.2ZM580.3 473.1L583.9 474L581.7 484.5L578.9 483.6ZM562.6 348.5L565.9 349.3L564 361.4L561.4 360.6ZM298.9 415.9L301.4 414.1L302.7 425.1L300.6 426.8ZM476 353.7L479.2 352.2L478.1 376.8L475.5 378.4ZM370.7 385.9L372.6 387.1L373.8 406.4L372.3 405.2ZM364.8 346.9L367.4 347.4L369.3 375.1L367.2 374.6ZM525.6 325.1L528.8 325.2L527.2 339.6L524.6 339.5ZM573.8 379.7L576.7 378.6L574.5 391.9L572.2 393ZM414.9 316.5L417.6 318.3L418.1 346.7L416 344.8ZM491.9 288.3L494.7 289.4L493.8 300.8L491.5 299.7ZM458.8 207.1L461.2 206.4L460.6 230.9L458.7 231.5ZM402.5 453.9L404.5 453.2L405.3 473.8L403.7 474.6ZM476.7 382.2L479.3 381.4L478.3 405.5L476.2 406.3ZM336.8 414.5L339.2 413.9L341 433.2L339.1 433.7ZM512.6 378L516.3 379L514.2 403L511.2 401.9ZM461.7 459.9L464.7 459.1L464.1 467.6L461.7 468.4ZM323.3 372.3L326.9 371.7L328.4 388.6L325.5 389.2ZM323.7 344.4L327.1 343.4L328 356.3L325.3 357.4ZM442.7 275.7L444.5 277.2L444.2 289.8L442.8 288.4ZM379.2 232.4L381.9 232.6L382.2 245.6L380 245.5ZM530 345.9L532.5 345.5L531.1 358.1L529.1 358.5ZM421.1 334.8L424.6 335.6L424.3 348.4L421.5 347.7ZM340.3 335L342.4 333.1L344.6 357.4L343 359.3ZM318 425.2L321.8 423.4L322.7 435.1L319.7 436.9ZM414.8 236.9L416.4 238.3L416.6 255.4L415.4 254.1ZM536.3 386.9L538.6 385.6L536.7 403.2L534.9 404.5ZM504 432.1L507.4 431.2L505.3 458.2L502.6 459.1ZM416.6 474.8L419.3 474.2L419.4 487.7L417.2 488.4ZM445.7 441.1L448.9 440.7L448.5 463.9L445.9 464.3ZM493.9 424.4L495.5 425.1L494 454.2L492.8 453.5ZM589.7 446L591.9 445.3L588.8 464.1L587 464.8ZM413.9 236L416.4 235.1L416.7 255.8L414.7 256.8ZM620.8 341.8L623.2 342.6L619.4 363.1L617.5 362.4ZM451.7 346.1L453.7 345.4L453.3 366.9L451.8 367.6ZM415.1 341.5L417.5 340.2L417.6 353.6L415.6 354.9ZM537.1 315.7L540 317.4L537.5 342.7L535.1 340.9ZM616 366.7L618.6 368.4L615.2 386.5L613.1 384.9ZM546.2 234.5L549 235.4L547.2 250.7L545 249.9ZM437.4 511.2L440.6 511L440.1 519.2L437.6 519.4ZM496.6 527.6L500.1 527L498 556.8L495.2 557.4ZM386.3 289.6L388.5 288.3L389 304.4L387.3 305.7ZM278.9 346.6L281.9 346.4L283.8 361.2L281.5 361.4ZM458.4 431.5L460.6 432.4L460.1 446.8L458.3 446ZM410.7 521L413.6 522.2L414.4 550.2L412.1 549ZM326.9 309.1L329.7 308.9L330.1 317.2L327.9 317.4ZM552.8 224.4L556.6 223.2L553.9 246.2L550.9 247.4ZM567.4 439.8L571.2 438.9L567.5 463.8L564.4 464.7ZM416.2 475.7L418.8 474.4L418.9 489.4L416.9 490.7ZM381.7 292.2L385.1 292.2L385 301.6L382.3 301.6ZM475.5 199.1L478.6 199.5L477.7 218.1L475.1 217.6ZM346.6 370.9L350.4 370.1L351.2 384.4L348.1 385.2ZM405 510.9L407.6 511.9L408 527.9L405.9 526.9ZM377 438.5L380.4 437.4L380.8 450.8L378.1 451.9ZM313.6 282.1L316.2 282.4L317.6 297.8L315.6 297.6ZM573.2 402L574.8 402.3L571.9 423.6L570.7 423.2ZM504.7 388.4L507.1 390.4L506.1 399.9L504.2 398ZM568.2 277.1L571.3 278.4L567.9 305.7L565.4 304.4ZM300.7 471.8L304.7 473L307.3 493.1L304.1 491.9ZM451 202.5L452.8 203.7L452.5 213.3L451 212.1ZM385.4 379.1L387.7 378.4L388.8 401.6L387 402.3ZM355 253.4L357.9 252.3L358.2 262L355.9 263.1ZM400.1 259.4L403.7 260.4L403.6 273.3L400.7 272.3ZM343.8 441.1L345.7 440.4L347.9 461.9L346.4 462.6ZM538.2 465.5L541.8 464.3L540.2 474.7L537.2 475.9ZM454.1 390.6L457.6 389.1L456.9 408.3L454.1 409.8ZM509.7 297.9L511.7 298.4L510.3 317.7L508.8 317.1ZM447.8 374.3L449.7 375.8L449.4 391.8L448 390.3ZM457.6 271.1L459.3 273L458.9 299.9L457.6 298ZM607.4 373L610.2 372.1L607.2 388.8L604.9 389.7ZM417.8 300.4L420.5 299.7L420.6 319.1L418.4 319.8ZM624.1 395.2L627.9 396.2L623.2 419.2L620.2 418.2ZM522.7 320.2L526.2 320.3L524.4 337.6L521.6 337.5ZM458.2 349.5L460.1 350.5L459.6 380.2L458.1 379.2ZM409.6 469.4L411.1 468.5L412 493.5L410.8 494.4ZM461.6 522.2L463.9 523.7L463.4 532.1L461.5 530.6ZM467.7 467.8L469.5 466.2L468.9 484.5L467.5 486.1ZM616.2 423.6L619.9 424.6L614.2 454.2L611.3 453.1ZM435.8 295.3L438.8 296.1L438.4 308L436 307.3ZM424.2 313.8L427.4 313.6L427.5 340.9L425 341.1ZM470.4 371.2L473.4 370.5L472.6 384.2L470.2 384.9ZM501.9 402.2L504.5 402.9L503.2 419.8L501.1 419.2ZM494.4 336.6L496.9 336.8L495.8 354.7L493.8 354.4ZM440.8 410.5L442.9 411.4L442.8 436.6L441.2 435.7ZM465.6 321.3L467.3 320.6L466.8 338.9L465.4 339.5ZM464.8 414.1L467.2 415.8L466.6 430L464.6 428.3ZM471.2 332.7L473 331.9L472.4 346.4L471 347.2ZM285.8 377.3L288.2 379L291.8 403.4L289.9 401.7ZM619.4 408.8L622.5 408.6L617 437.3L614.6 437.5ZM505.5 245.5L507.2 243.7L505.9 266.6L504.5 268.3ZM422.4 212.6L424.9 213.5L425 234.2L423 233.3ZM492.4 426.5L495.2 427.2L493.9 445L491.7 444.4ZM541.3 340.5L544.5 339.6L541.4 369.1L538.9 370ZM358.6 296.7L360.6 296.4L362.5 322.2L360.9 322.6ZM596.8 329.6L598.3 331.3L596.2 345L595 343.3ZM579.6 346.2L582.2 348L579.4 367.1L577.3 365.4ZM535 222.8L538.1 224.2L535.5 253.7L533 252.2ZM271.7 403.4L275.2 403.9L278.8 427.3L276 426.9ZM377 441.8L378.9 440.7L380.3 461.6L378.7 462.6ZM389.5 430.4L392.7 431.2L392.8 442L390.2 441.1ZM412 389.4L415.1 388L415.5 410.9L413 412.3ZM537.9 359L540.3 357.3L538.8 370.3L536.9 371.9ZM512 301.7L514.1 300.6L513.1 311.4L511.4 312.5ZM344.1 344.5L346.1 343.2L348 364.7L346.4 366ZM343.2 403.3L346.5 404.4L347.5 418.8L344.8 417.7ZM480.5 396.4L483 397.9L482.2 410L480.2 408.4ZM612.2 436.7L615 438.6L609.7 467.3L607.4 465.5ZM444.5 301.6L447.2 303L446.8 321.5L444.7 320.1ZM582.6 384.3L585.7 382.6L581.8 408L579.4 409.8ZM446 333.2L448.1 333L447.8 345.8L446.1 346.1ZM604.5 440.3L608.5 440.8L605.6 454.2L602.4 453.7ZM382.1 271.1L385.2 269.7L385.8 287.8L383.3 289.1ZM400.3 327.5L403.1 325.9L403.7 349L401.5 350.7ZM373.5 339L377.4 337.8L377.8 353.5L374.7 354.8ZM388.7 456.4L392.5 455.7L392.4 465.6L389.4 466.3ZM458.8 421L460.4 422.8L460 448.7L458.7 446.9ZM580.5 261L583.9 259.8L582 270.2L579.4 271.4ZM532.2 520L535.1 520L533.8 528L531.5 528ZM497.6 205.7L501.5 207.5L500.4 215.9L497.3 214.1ZM286.2 387.8L290.1 386.7L294 414.8L290.9 415.9ZM427.1 352.7L429.5 353.1L429.7 379.9L427.8 379.6ZM296.3 352.6L299.6 351.7L303.1 379.1L300.5 380ZM310.6 455.8L314.3 456.2L317.6 482.6L314.7 482.2ZM331.8 495.4L334.5 495.4L335.7 507.6L333.5 507.6ZM468 245.1L470.3 243.5L469.7 255.5L467.9 257ZM554.6 310.1L557.1 308.3L555.3 322L553.4 323.7ZM607.3 362.7L610.7 362.1L607.5 378.7L604.8 379.3ZM604.4 277L608.2 278.7L605.1 296L602.1 294.3ZM470.7 465.7L472.9 467.2L472.2 480.3L470.5 478.8ZM607.2 340.5L611.1 339.1L606.5 365.8L603.3 367.3ZM514.3 252.2L518 252.3L516.3 271.2L513.3 271ZM473.9 515.4L477.2 514.7L475.9 544.4L473.2 545.1ZM422.4 367.2L424 369L424 379.2L422.7 377.4ZM413.5 367.9L415.3 369.3L416.1 397.6L414.7 396.2ZM471.8 250.9L473.7 252.5L472.9 282.2L471.4 280.6ZM304.8 469L308.4 469.8L311.1 490.9L308.2 490ZM480.5 403.2L482.2 404.9L481.3 425.7L479.9 424.1ZM541.2 393.2L543.6 392.9L540.7 420.9L538.8 421.2ZM571.1 469L572.9 470L571.1 481L569.7 480ZM379.8 406.1L382.7 408.1L383.6 428.3L381.3 426.4ZM361.9 509.4L364.1 510.6L364.5 518.8L362.8 517.6ZM552.2 415.6L554.2 416.7L552.9 426L551.3 424.9ZM321.4 411L323.7 410.9L325.3 425.9L323.5 426.1ZM468.9 381.7L470.5 380.9L469.8 408.7L468.5 409.6ZM461.9 305.5L463.9 305.5L463.4 326.7L461.7 326.7ZM529.8 331.8L533.7 330.5L531.8 345.2L528.7 346.5ZM480.2 379.4L481.9 381.1L480.9 407.2L479.6 405.4ZM381.4 509.4L384 508L385.5 531.6L383.4 533ZM355.4 252.1L357.5 251L359.4 277.6L357.7 278.6ZM323 322L326.9 322.9L327.9 337.3L324.8 336.4ZM353.5 497.6L357.3 499.3L358.6 517.5L355.6 515.8ZM603.3 386.6L606.9 387.2L601.9 415.7L599.1 415.1ZM617 345.9L619.9 345.7L617.6 357.2L615.2 357.5ZM436.1 205.9L437.8 207.4L437.9 232.1L436.5 230.6ZM534.9 242.1L538.8 240.5L536.3 264.5L533.3 266.2ZM594.8 360.7L596.5 359.7L594.1 374.7L592.7 375.7ZM585.6 245L588.1 245.2L586.1 258.6L584.1 258.4ZM377.3 236.6L379.9 238.4L380.6 256L378.5 254.3ZM441.9 404.3L444.3 405.4L444.2 435.2L442.3 434.1ZM563.1 407.3L564.7 407.4L563.1 418.9L561.8 418.8ZM604.9 290.2L606.6 288.7L603.8 306.6L602.5 308ZM386.4 434.3L390.1 434.4L391.2 459.8L388.2 459.7ZM331.6 333.2L333.7 334.8L335.1 350.6L333.4 349ZM467.8 416.9L469.4 416.7L468.9 429.9L467.7 430.2ZM389.2 307.7L391.4 306.9L392.1 325.3L390.3 326.1ZM467.2 402.4L469.2 402.5L468.6 422L467 421.9ZM286.7 363.4L289.6 362.5L293 386.7L290.6 387.6ZM533.9 286L536 284.9L534.7 297.2L533 298.3ZM358.9 226.1L362 225.2L362.8 242.4L360.3 243.3ZM495.1 243.8L497.6 244.9L496.2 270.4L494.2 269.2ZM581.4 349L584.2 350.1L582.2 362.1L579.9 361ZM468 257L471.3 255.9L470.4 274L467.8 275.1ZM537.4 328.7L540.5 329.5L538.4 348.2L536 347.3ZM611.6 436.8L613.6 435.9L610.5 452.2L608.9 453.1ZM353.9 514.1L356.4 512.4L357.3 525.2L355.3 526.9ZM522.2 335L524.4 336.9L522.7 357.2L520.9 355.2ZM367.1 245.8L370.9 245.7L370.8 254L367.7 254.1ZM519.7 490.9L523.5 489.4L520.6 519.3L517.5 520.9ZM338.8 440.6L342.7 440.9L344.8 464.9L341.8 464.5ZM361.5 509L364.9 509.2L366 526L363.3 525.7ZM499.9 477.2L503.8 477.4L502.4 490.7L499.3 490.5ZM493.2 264.4L495.4 265.4L494 293.7L492.2 292.6ZM483.2 402.8L484.9 400.9L484.2 412.6L482.8 414.5ZM490.6 389.7L494.5 388.4L492.7 416.9L489.6 418.2ZM624.6 389.3L628.2 388.5L625.2 401.7L622.3 402.5ZM330.5 264.1L333.2 264.3L335.6 290.8L333.5 290.6ZM384.8 253.3L387.8 252.5L388.2 268.9L385.8 269.7ZM433.7 241.3L437.6 242.7L437.2 265.7L434.2 264.3ZM471.8 461.6L475.2 460L474.2 475.2L471.5 476.9ZM487.6 377.6L489.9 375.6L489.1 386L487.3 388ZM628.1 314.1L632 315.7L629.3 327.9L626.1 326.2ZM586.9 372.2L588.7 371.2L587 381.3L585.6 382.3ZM308.2 283.3L310.3 282.8L313.5 309.5L311.8 309.9ZM365.7 435.2L369 436L369.3 445.8L366.6 445ZM324.4 337.6L327.4 339.6L330.2 367.5L327.9 365.5ZM619.7 368.9L622.8 370.3L618.9 390.4L616.4 389ZM327.7 290.4L330.1 292L330.8 301.7L328.8 300.1ZM497.7 358.2L501.2 359.4L499.9 373L497.1 371.8ZM503.5 227.1L506.5 228.7L505.1 249.5L502.7 248ZM563.6 293.6L567.2 294.5L564.6 313.4L561.8 312.5ZM549.7 409.8L551.3 411.7L549.8 424.5L548.5 422.5ZM395.3 398.9L398.8 398.5L399.2 417.4L396.4 417.8ZM488.7 281.9L491.2 281.3L489.8 310L487.9 310.6ZM596.5 463.7L598 463.7L595.6 477.2L594.4 477.2ZM383.4 222.4L386.9 221.4L387.9 249.5L385.1 250.5ZM433.8 525.9L436.5 526.9L436.5 549.6L434.4 548.6ZM488.2 397.9L491.3 396.8L490.1 415L487.6 416.1ZM381.6 387L384.9 388.1L386.2 415.6L383.6 414.5ZM314.1 374.6L317.5 373.2L319.2 390.2L316.5 391.6ZM304.4 449.9L307.3 451.6L308.7 463.8L306.4 462.2ZM527.1 234.7L531.1 235L529.5 248.2L526.3 247.9ZM428.6 310.2L430.5 310.8L430.6 328.2L429 327.7ZM333.5 396.7L335.3 395L336.6 408.5L335.1 410.2ZM393.2 332.6L395.5 334.1L395.6 344.7L393.8 343.2ZM429.9 247.1L433 247.7L432.7 260.5L430.2 260ZM340.9 422.8L344.9 422.5L347.3 449.3L344.1 449.6ZM369.7 430.6L372.7 432.4L373.5 448.5L371.1 446.6ZM363.6 238.2L367.3 239.2L368.7 266.3L365.7 265.3ZM443.3 235.4L446.3 234.3L445.8 247.8L443.4 248.8ZM398 449.8L400.6 451.7L401.2 469.8L399.1 467.9ZM502 370.5L503.8 372.4L503 382.2L501.5 380.2ZM330.8 497.4L333.9 495.5L335.4 511.2L333 513.1ZM438.5 352.2L441.7 353.5L441.2 361.7L438.6 360.4ZM417.2 291.5L420.7 292L420.9 316.3L418.1 315.8ZM504.8 440.2L508.1 438.3L506.7 452.1L504.1 454.1ZM454.5 243.5L457.4 244.5L456.8 268.2L454.5 267.1ZM640.3 341.3L643.8 342.9L639.4 363.7L636.6 362.1ZM604.6 469L607.6 469.6L605 481.7L602.6 481.1ZM451.1 272.9L453.4 273.9L453 301.5L451.2 300.4ZM420.5 484.9L423.1 483.2L423.3 501.1L421.2 502.8ZM417.8 468.7L419.7 469.7L419.8 480.4L418.2 479.3ZM270.4 402.9L274.3 401.8L278.7 429.3L275.6 430.4ZM298.9 323.8L301.7 324.5L303.5 340.6L301.3 339.9ZM457 370.8L459.8 369.8L459.2 383.5L457 384.5ZM385.7 276.2L387.6 276.2L388.9 303.9L387.4 304ZM396.5 453.6L400 452.4L400.4 469.9L397.6 471.2ZM535.7 259.6L538.3 260.7L536.8 274.5L534.7 273.4ZM467.1 496.4L468.9 496.9L468.4 510.1L466.9 509.7ZM531.9 249.6L535.1 247.7L533.5 262.7L530.9 264.6ZM562.3 474L565 472.3L562.7 487.3L560.6 489.1ZM330.4 416.6L333.3 417.4L334.2 428.9L331.9 428.1ZM297.1 359.5L299.8 359.6L300.8 370L298.7 370ZM429.6 416.1L432.6 416.5L432.5 435.2L430.1 434.8ZM329.8 288.3L332.7 290.1L333.3 300.2L330.9 298.4ZM313.1 354.5L315 355.1L315.8 364.2L314.3 363.5ZM381.3 477.5L383.6 479.3L385.5 508.7L383.6 506.9ZM311.5 321.5L314.3 323L317.6 352L315.4 350.5ZM352 475.4L355.8 475.1L357.8 499.1L354.7 499.5ZM473.7 470.5L476.4 469L475.5 485.3L473.3 486.8ZM420.4 491.5L423.5 490.8L423.7 511.2L421.2 511.9ZM335.9 456L337.4 454.6L340.1 478.4L338.9 479.8ZM605.4 287.5L608.8 287.5L604.9 310.8L602.2 310.8ZM512.7 371.8L514.6 370.7L512.6 399.2L511.1 400.2ZM469.9 306.6L473.9 305.3L472.9 320.4L469.7 321.7ZM634.3 430.1L638 429.5L632.2 456.6L629.3 457.2ZM520.4 371.5L522.9 372.9L520.6 401.3L518.5 400ZM302.5 342.6L305.8 342.8L308.3 364.4L305.6 364.2ZM418.9 357.2L421.3 358.5L421.1 366.8L419.2 365.5ZM545.7 498L547.9 497.9L545.5 516.7L543.8 516.9ZM387 366.5L388.9 364.9L389.5 380.3L388 381.8ZM610.2 384.2L612.5 385.1L610.5 394.9L608.7 394ZM443.7 257.1L445.6 257.2L445.5 282.2L444 282.2ZM575.3 253.9L579 255.4L575.2 284.4L572.3 282.8ZM597.9 332.5L599.5 333.4L595.2 362.5L594 361.6ZM333.8 246.2L337.5 245.2L338.4 261.3L335.5 262.3ZM636.1 389.4L639.7 389.3L635.4 409L632.5 409.1ZM451.6 346.9L455.4 345.4L454.7 353.8L451.6 355.3ZM508.5 528.4L510.3 527.6L508.5 551.2L507 551.9ZM483.1 422L486.7 420.8L485.6 434.2L482.7 435.5ZM358.3 263L361.3 262.1L362.1 278.8L359.7 279.8ZM498 443.9L500.1 442L499.3 450.8L497.6 452.7ZM504.2 515.9L506.8 515.5L505.3 533.4L503.1 533.9ZM487.3 386.1L490.4 384.4L489.4 397L486.9 398.7ZM563.3 345L566.6 343.3L563.8 364.1L561.1 365.8ZM427.8 426.9L430.6 425.2L430.4 438.6L428.2 440.3ZM560.6 377L563.5 379L560.2 404.9L557.8 402.9ZM378.8 306.4L382.4 306.6L382.3 315.8L379.4 315.6ZM409 458.2L411.4 459.1L411.7 474.8L409.8 473.9ZM348.2 496.4L351.4 498.4L351.8 507.5L349.3 505.5ZM293.1 420.9L296.1 421.5L299.1 443L296.7 442.3ZM319.8 407.6L323.1 405.8L323.6 414.7L321 416.4ZM535.8 384.5L537.3 385.5L534.6 415.3L533.4 414.3ZM639.8 334.6L643.4 334L637.9 361.4L635 362ZM482.4 367.8L485.1 367.7L484.2 379.4L482.1 379.5ZM532.7 434.2L534.4 433.3L533.3 442.6L531.9 443.4ZM541 232.1L543.8 230.9L542.5 240.2L540.3 241.4ZM615.4 278.9L617.1 278.6L613.8 299.2L612.4 299.6ZM530.7 500.2L533.2 501.5L530.9 522.1L529 520.8ZM505.1 349.7L508.1 351.5L506.1 379.8L503.7 378ZM504.6 305.9L506.7 307.2L505.8 317.6L504.2 316.2ZM483.8 341.1L485.8 341.6L484.8 363.8L483.2 363.3ZM315.2 451.8L317.8 451.7L319.5 466.8L317.5 467ZM349.9 362.5L351.8 363.7L353.9 387.4L352.3 386.1ZM459.8 334.7L461.7 333.7L461.2 349.6L459.8 350.7ZM520.7 516.7L524.3 517L522.7 529.4L519.8 529.1ZM586.5 345.2L589.1 344.2L585 372.6L582.9 373.5ZM421.6 471.1L423.8 471.1L423.8 484.3L422.1 484.3ZM438.2 269.7L439.9 268.8L439.8 283.3L438.4 284.3ZM313.3 313.8L317.2 312L318.3 326.6L315.2 328.4ZM538.2 447.5L541 449.1L538 476.5L535.8 474.8ZM496 487.9L498.4 486.6L496.6 515.9L494.6 517.1ZM330.6 353.9L332.3 353.8L335.2 380.2L333.8 380.3ZM482 487L484.6 485.2L483.4 506.4L481.4 508.2ZM454.7 259.1L457 257.2L456.6 282.3L454.7 284.2ZM325.8 322.6L328.1 322.2L330.7 347.5L328.8 347.9ZM545.3 429.6L548.5 430.5L545.3 458.4L542.6 457.6ZM490.5 530.8L493.9 531.8L492.2 556.4L489.5 555.3ZM508.1 364.1L511.8 362.3L510.2 378.9L507.2 380.7ZM326.2 389.1L329.3 389.6L330.5 403.9L328 403.4ZM565.2 349.7L567.2 348L563.8 376.5L562.2 378.2ZM492.8 504.6L496.6 504.7L495.1 522.3L492.1 522.2ZM434.3 395L438.1 395.9L437.6 408.7L434.6 407.8ZM576.8 253.3L580.4 253.5L576.7 281.3L573.8 281ZM407.7 481.5L411.4 482.2L411.5 497.2L408.5 496.6ZM399.4 261.6L401.1 262.8L401.6 280.1L400.3 278.9ZM410.1 525.6L412 527.3L412.1 536.4L410.6 534.7ZM627.7 328.8L630.8 329.2L626.7 350.8L624.2 350.4ZM396.6 365.4L398.6 366L398.8 377.1L397.3 376.5ZM569.8 357.8L571.9 357.4L568.8 380.9L567.2 381.3ZM547.3 251.6L551.2 252.6L549.2 267.6L546.1 266.6ZM418.1 425.1L421.4 427L421.5 446.3L418.9 444.4ZM463.6 270.4L467.1 270.4L466.3 278.7L463.5 278.8ZM378.9 454.5L382.6 455.5L382.7 465.5L379.7 464.4ZM637.7 405.9L639.5 407.1L635.3 428.1L633.8 427ZM580.1 379.7L583.3 381.6L580.3 400.5L577.7 398.5ZM463.9 306.1L467.5 307.7L466.6 331.6L463.7 329.9ZM625.9 366.9L629.5 366.7L627.1 376.8L624.2 377ZM490.1 404.3L492.8 406.2L491.7 420.3L489.6 418.4ZM326.5 434.9L330.1 434.9L331.2 447.8L328.3 447.9ZM291.8 307.2L294.8 307.1L296.6 322.8L294.2 322.9ZM464.1 429.7L467.7 428.2L466.7 456.5L463.8 458ZM339.9 440.8L342.1 442.6L345.2 472L343.5 470.2ZM305.6 302.8L309.6 301.5L312.3 326.9L309.1 328.3ZM457.2 315.3L459.1 317L458.7 334.2L457.2 332.5ZM522.2 513.3L525.6 515.2L523.9 529L521.2 527.1ZM587.8 471.8L591.2 471.6L587.2 494.7L584.4 494.9ZM501.5 321.3L505.1 319.6L503.9 331.6L501 333.3ZM553.8 334.3L556.7 334.7L555.2 344.8L552.8 344.4ZM444.1 289.8L446.2 289.3L446 308.5L444.2 309ZM374 495.8L375.7 496.3L376.1 504.4L374.7 503.9ZM616.1 410.7L619.5 411L615.1 433.4L612.4 433.1ZM394.6 247.8L396.2 248.1L396.8 266.7L395.6 266.4ZM332.2 296.4L335.7 294.6L336.6 308.7L333.8 310.4ZM581.2 311.9L583.9 313.6L580.6 336.8L578.5 335.1ZM450.2 403.2L451.8 402L451.6 426.9L450.3 428.2ZM276.1 355.8L279.2 356.3L281.1 370.9L278.6 370.4ZM398 477.9L400.4 479.6L400.6 490.7L398.6 489ZM483 214.3L484.9 213.5L484.3 224.3L482.8 225.1ZM516.4 274.7L519.5 274.1L517.7 296.9L515.2 297.5ZM564.8 307.2L567.3 307.9L565.9 316.9L563.9 316.2ZM329 314.5L331.8 312.9L333.1 328.4L330.8 330.1ZM516 344.6L518.7 345.7L517.3 361.2L515.1 360.1ZM399.7 332.2L402.7 331.4L402.7 343.5L400.4 344.3ZM397.7 218.4L400.1 217.1L400.2 227.9L398.2 229.2ZM506.3 467.1L509.8 467.6L508.1 485.1L505.3 484.6ZM521.2 463.6L522.9 464.8L521.3 482.7L520 481.5ZM448.5 389.6L450.1 389.2L449.8 402.6L448.6 403ZM370.9 414.7L372.9 413.3L373.9 430L372.3 431.5ZM369.3 323.9L371.6 322.8L373.3 350L371.4 351.1ZM423.2 389.7L425 391.1L425 404.2L423.7 402.8ZM404.8 455L407 455.2L407.5 472.2L405.7 471.9ZM418.5 216.6L422.3 216.2L422.3 240.3L419.3 240.6ZM289.7 377.2L291.8 378.9L295.3 402.8L293.6 401ZM508.8 349.3L511.8 348.2L510.1 369.6L507.7 370.7ZM333 303.8L336.4 302.5L337.1 314.8L334.4 316.1ZM399.8 441.8L401.4 441.7L401.9 455.4L400.6 455.5ZM423.3 284.6L426.9 282.9L427 312.5L424.1 314.1ZM569.5 401.6L571.8 399.8L569.1 419.2L567.2 421ZM639.1 378.1L642.1 376.2L638.5 392.8L636.1 394.7ZM544 249.8L546.4 248.2L544.1 271.3L542.2 272.8ZM403.1 301.1L406 303L406.9 332.6L404.5 330.7ZM374.2 379L377.6 377.5L378.5 396.7L375.7 398.2ZM333.2 368L336.9 368.5L339.3 395L336.3 394.5ZM325.6 480.1L329.4 478.5L332.6 506.6L329.6 508.1ZM414.3 442.1L417.9 443.7L417.9 460.3L415 458.7ZM305.7 356.4L309.6 356.6L312.2 380.3L309.1 380.1ZM534.7 423.4L536.6 424L535.3 434.7L533.8 434ZM593.7 293.6L596.6 293.1L593.8 310.7L591.5 311.2ZM409.1 387.3L412 388.5L412.6 413.5L410.3 412.2ZM539.6 364.4L541.6 363.8L538.8 393.5L537.2 394.1ZM592.7 486.8L596.4 488.6L592.4 509.6L589.5 507.8ZM417.7 285.5L421 286.1L420.9 304L418.3 303.4ZM501.2 379L502.8 380.3L501.2 407.9L499.9 406.6ZM467.9 335.7L471.1 335.5L470.2 361.1L467.6 361.3ZM410.8 395.3L412.6 393.6L412.9 409.2L411.5 410.9ZM487.9 269.9L490.1 270.1L489.2 286.7L487.4 286.5ZM514.1 432.2L516 434.1L515.1 443.4L513.5 441.6ZM429.6 487.1L432.8 488.6L432.7 506.8L430.1 505.3ZM333.6 295.2L335.3 295.3L337.7 320.5L336.4 320.5ZM374.6 320.1L377.6 320.8L378 334.3L375.6 333.6ZM474.4 428.3L477.5 427.8L476.6 440.9L474.2 441.4ZM343.1 453.7L345.3 454.7L346 463.9L344.2 462.9ZM504.5 255.1L508.2 256.3L506.4 279.5L503.5 278.3ZM489.1 443.8L490.9 443.5L490.2 453.7L488.8 454ZM560.6 280.1L563.7 279.9L561.6 295.4L559.1 295.6ZM499 226.9L501 225.2L499.8 245.9L498.2 247.5ZM464.7 489.3L467.2 490.2L466.6 501.6L464.6 500.7ZM379.6 463L381.8 464.9L382.9 483.8L381.1 481.9ZM373.9 409.6L377.1 408.9L378 427.5L375.4 428.2ZM503.8 259.4L506.6 259.5L505.6 269.6L503.3 269.5ZM512.2 506.5L515.2 506.6L512.7 536.5L510.3 536.4ZM540.3 445.3L544 444.4L541.4 464.6L538.5 465.5ZM418.5 327.6L420.3 329.2L420.7 350.9L419.3 349.3ZM345.5 313.6L347.7 312.7L348.5 325.2L346.8 326.1ZM578.3 328.8L582.1 327.7L579.3 345.4L576.2 346.5ZM317.5 282.9L320.3 284.9L321.4 298.2L319.2 296.3ZM490.4 202.9L492.4 201.5L491.5 217.3L489.9 218.8ZM578.1 270.7L579.8 270.6L578.3 281.4L577 281.4ZM392.3 317.2L396.2 319L396.4 336.9L393.3 335.1ZM533.1 375.9L536.4 376.8L534.1 398.2L531.5 397.2ZM466.5 299.6L468.8 301.3L468.2 317.4L466.3 315.7ZM549.7 273.4L552.1 274L550.2 290L548.4 289.4ZM399.8 385.7L401.7 386.7L401.8 396.3L400.3 395.2ZM352.1 401.5L354.7 401.2L356.9 427.4L354.8 427.7ZM503 435.1L507 433.4L505 458.5L501.8 460.1ZM509.2 315.9L512.6 317.1L510.5 344L507.8 342.9ZM287.2 454.6L288.8 453.7L293 478.8L291.7 479.7ZM414.2 324.4L416.9 324.2L416.7 334.4L414.6 334.6ZM465.6 242.4L469.6 242L468.7 258.7L465.5 259.1ZM475.7 201.7L478.4 202.7L477.4 229L475.2 228ZM509.9 375.3L511.5 375.1L509.7 402.8L508.4 403ZM570.2 389.7L572.8 389.6L570.2 408.2L568.1 408.3ZM517.4 382.1L520.2 383.3L518.6 400.7L516.3 399.5ZM463.1 395.2L466.3 396L465.5 412.8L463 412.1ZM459.8 228.3L462.9 229.7L462.2 249.1L459.7 247.7ZM535.8 471.7L539.4 473.1L536.3 500.9L533.4 499.4ZM480.3 292L482.7 292.3L481.5 321.5L479.6 321.2ZM548.5 334.8L551.4 334.3L548.6 359.8L546.2 360.3ZM419.5 419.7L421.1 418.2L421.2 430.3L419.9 431.7ZM559.4 378.7L561.5 377.8L558.3 405.4L556.5 406.3ZM380.9 267.3L383.2 265.4L384.1 285.9L382.2 287.8ZM347.4 318.8L350.1 319.4L351.6 339.2L349.4 338.6ZM614.7 405.4L617 403.7L612.8 426.8L611 428.4ZM503.8 218.6L506.2 219.2L504.9 238.9L502.9 238.3ZM528.1 407.6L531.8 409.1L529.8 425.9L526.9 424.3ZM412 533L414.5 532L415.5 561.6L413.5 562.6ZM553.7 245.9L556.5 244.6L553.5 273.3L551.3 274.6ZM403.8 312.9L406.8 312.7L406.9 327.3L404.5 327.5ZM479 476.1L482.9 477.2L481.7 492.6L478.6 491.5ZM343.8 323.4L345.7 322.2L347.5 343.6L346 344.7ZM543.4 277.4L545.3 277.6L543.9 290.4L542.4 290.2ZM560.3 478.3L562.9 480.3L560.7 494.9L558.6 492.9ZM508.7 379.1L512 379.6L510.5 395L507.9 394.5ZM423.7 453.1L425.4 451.6L425.8 475.4L424.5 476.9ZM274.1 427.3L276.9 428L277.8 436L275.6 435.3ZM412.9 307.9L414.6 309.9L415.1 330.9L413.7 328.9ZM554.5 363L556.5 362.1L553.3 390.5L551.7 391.3ZM505.3 353.1L507.8 352.2L506.9 360.4L504.9 361.3ZM376.1 252.5L378 252.7L379.3 277.6L377.8 277.4ZM369.2 261.3L371.2 262.1L372.6 286.1L371 285.2ZM426.2 273.8L428.1 274.1L428.2 292.1L426.7 291.7ZM494.7 425L496.7 424L495.6 441.1L494 442.1ZM563.8 266.3L566.1 265.4L564.5 277.3L562.7 278.2ZM616.7 446.1L618.7 448L616.5 458.5L614.8 456.6ZM556.2 396L559.8 395.9L556.8 418.6L553.9 418.6ZM408.5 472.1L410.5 472.4L410.9 488.6L409.3 488.2ZM398.5 359.1L402.1 359.8L402 370.2L399 369.5ZM604 469.8L607.4 471.3L604.8 483.2L602.1 481.7ZM541.1 360.7L543.1 362.5L541.1 382.2L539.5 380.5ZM570.8 244L574.2 245.1L572.1 259.2L569.4 258ZM266.1 340.3L269.9 338.4L271.8 353.1L268.8 355ZM354.3 338L357.6 337L359 358.3L356.3 359.3ZM505.2 212.3L507.8 212.8L506.3 236.5L504.2 235.9ZM337.7 446.4L339.3 446.6L341.8 469.3L340.6 469.2ZM452.5 430.2L454.4 431.5L454.1 456.9L452.6 455.6ZM416.7 273.8L419.8 274.8L419.5 284.1L417 283.2ZM512.4 310.7L516.3 309.6L514.5 328.4L511.4 329.5ZM550 281.6L553.8 281.2L550.5 311L547.5 311.3ZM424.6 418.8L426.8 417L427 437.9L425.2 439.7ZM418.9 208.8L421.3 210.6L421.2 223.8L419.3 221.9ZM354.5 387.1L357.9 387.1L359.4 409.2L356.8 409.2ZM621.7 408.6L624.2 408.5L621.7 420.3L619.7 420.3ZM454.9 513.8L458.6 514.4L457.8 530.4L454.9 529.8ZM400.4 354.2L404.2 354.5L404.3 370.2L401.2 370ZM589.7 340.2L591.7 341L589.6 354.4L588 353.6ZM437.9 240.3L439.8 239.3L439.6 249.9L438 250.9ZM450.5 329.5L453.5 330.6L453 346.5L450.5 345.4ZM354.8 320.2L357.1 318.3L358 333.1L356.2 335ZM526.5 272.8L528.4 272.6L526.1 301.7L524.6 301.9ZM536.8 406.1L539.9 407.4L537.7 426.9L535.2 425.7ZM433.6 513.3L435.8 511.5L435.9 533.2L434.1 535ZM615.5 349.5L619.3 347.9L614.1 376.4L611.1 378ZM607.8 329.2L611.1 330.9L607.7 349.7L605.1 348ZM559 429.9L562.7 428.8L561 437.7L558 438.8ZM645.2 378.6L648.9 378.3L642.8 406.6L639.9 406.9ZM372.6 510L376.2 510.4L377.4 531.6L374.6 531.3ZM546.5 321.9L550 320.9L547.6 340L544.8 341ZM592.6 434.4L595.6 434.4L593.3 446.3L590.9 446.4ZM373.9 302.6L376.8 304.3L377.5 321L375.1 319.2ZM600.7 332.7L602.2 332.3L599.7 348.2L598.5 348.6ZM338.4 462.5L342.4 462.7L344.1 482.7L340.9 482.5ZM396.4 506.4L398.5 507.8L399.3 527.1L397.7 525.7ZM526 384.2L529.2 386.1L527.1 406.4L524.6 404.5ZM544 374.7L546.8 375.9L544.3 398.1L542 396.9ZM579.7 394.8L583.4 394.7L580.3 413.6L577.4 413.7ZM456.7 307.4L458.9 308.5L458.4 330.8L456.7 329.6ZM493.7 262.8L496.8 261.9L495.8 272.1L493.3 273ZM528.2 408.3L531.1 407.4L529.7 418.7L527.4 419.6ZM375.8 418.2L379.2 418.8L379.7 433.4L376.9 432.8ZM379.6 480.3L383.3 481.2L384.4 503.3L381.4 502.4ZM323.5 430.6L325.3 431.9L327.1 447.8L325.7 446.6ZM584.2 368.8L587.4 368.5L583.4 395.4L580.8 395.7ZM402.9 275.9L405.1 277.1L405.3 291.1L403.5 289.9ZM431.6 503.6L434.6 502.7L434.3 513.3L431.9 514.2ZM327.9 299.4L330.6 300L331.6 313.8L329.6 313.2ZM364.8 317.7L368.1 319.3L369.6 345L367 343.3Z" fill="#0f64b4" opacity=".85"/>
</g>
<path d="M167 464C170 469 172 472 176 473.5C184 476 190 476.5 195.5 478.3C203 481 208 483 212 486.5C220 494 226 508 231 523" fill="none" stroke="#1e90ee" stroke-width="1.6"/>
<ellipse cx="267.5" cy="235" rx="11" ry="9" transform="rotate(-15 267.5 235)" fill="#0b16c4" stroke="#1e90ee" stroke-width="1.3"/>
<ellipse cx="476" cy="172" rx="9" ry="6" transform="rotate(-8 476 172)" fill="#0b16c4" stroke="#1e90ee" stroke-width="1.3"/>
<ellipse cx="696" cy="300" rx="10" ry="9" transform="rotate(20 696 300)" fill="#0b16c4" stroke="#1e90ee" stroke-width="1.3"/>
<ellipse cx="715" cy="485" rx="12" ry="10.5" transform="rotate(-10 715 485)" fill="#0b16c4" stroke="#1e90ee" stroke-width="1.3"/>
<ellipse cx="716.2" cy="491.3" rx="5.4" ry="2.1" fill="#dcdce6"/>
<ellipse cx="437.6" cy="636.2" rx="14" ry="13" transform="rotate(-8 437.6 636.2)" fill="#0b16c4" stroke="#1e90ee" stroke-width="1.3"/>
<ellipse cx="439" cy="644" rx="6.3" ry="2.6" fill="#dcdce6"/>
<ellipse cx="187" cy="456" rx="12" ry="11" transform="rotate(-10 187 456)" fill="#0b16c4" stroke="#1e90ee" stroke-width="1.3"/>
<ellipse cx="188.2" cy="462.6" rx="5.4" ry="2.2" fill="#dcdce6"/>
<ellipse cx="193.8" cy="498.8" rx="7.5" ry="6.5" transform="rotate(-10 193.8 498.8)" fill="#0b16c4" stroke="#1e90ee" stroke-width="1.3"/>
<ellipse cx="194.5" cy="502.6" rx="3.4" ry="1.3" fill="#dcdce6"/>
</g>
</svg>
<div class="panel" style="left:66px;top:7px;width:168px;height:255px;">
<div class="phead" style="height:31px;"></div>
<div class="ptitle" style="left:9px;top:8px;line-height:14px;">Color scheme</div>
<svg class="ic" style="left:146px;top:10px" width="10" height="10" viewBox="0 0 10 10"><path d="M1.7 1.7L8.3 8.3M8.3 1.7L1.7 8.3" stroke="#5c5c5c" stroke-width="1" fill="none"/></svg>
<div class="abs" style="left:9px;top:41px;width:148px;height:21px;box-sizing:border-box;border:1px solid #c9c9c9;border-radius:3px;"></div>
<div class="t" style="left:15px;top:46px;">Flow</div>
<svg class="ic" style="left:139px;top:48px" width="10" height="8" viewBox="0 0 10 8"><path d="M1.5 1.8L5 5.4L8.5 1.8" stroke="#5c5c5c" stroke-width="1" fill="none"/></svg>
<div class="cb" style="left:9px;top:69px;border-color:#c9c9c9;"><svg width="14" height="14" viewBox="0 0 14 14"><path d="M4.6 7.1L6.3 8.7L9.4 5.4" stroke="#8a8a8a" stroke-width="1.1" fill="none"/></svg></div>
<div class="t" style="left:30px;top:71px;">Extruder 1</div>
<div class="cb" style="left:9px;top:91px;border-color:#c9c9c9;"></div>
<div class="t" style="left:30px;top:93px;">Travels</div>
<div class="cb" style="left:9px;top:113px;border-color:#6a9bf4;"><svg width="14" height="14" viewBox="0 0 14 14"><path d="M4.6 7.1L6.3 8.7L9.4 5.4" stroke="#8a8a8a" stroke-width="1.1" fill="none"/></svg></div>
<div class="t" style="left:30px;top:115px;">Helpers</div>
<div class="cb" style="left:9px;top:135px;border-color:#c9c9c9;"><svg width="14" height="14" viewBox="0 0 14 14"><path d="M4.6 7.1L6.3 8.7L9.4 5.4" stroke="#8a8a8a" stroke-width="1.1" fill="none"/></svg></div>
<div class="t" style="left:30px;top:137px;">Shell</div>
<div class="cb" style="left:9px;top:157px;border-color:#c9c9c9;"><svg width="14" height="14" viewBox="0 0 14 14"><path d="M4.6 7.1L6.3 8.7L9.4 5.4" stroke="#8a8a8a" stroke-width="1.1" fill="none"/></svg></div>
<div class="t" style="left:30px;top:159px;">Infill</div>
<div class="cb" style="left:9px;top:179px;border-color:#c9c9c9;"><svg width="14" height="14" viewBox="0 0 14 14"><path d="M4.6 7.1L6.3 8.7L9.4 5.4" stroke="#8a8a8a" stroke-width="1.1" fill="none"/></svg></div>
<div class="t" style="left:30px;top:181px;">Starts</div>
<div class="abs" style="left:146px;top:72px;width:11px;height:11px;background:#ffc924;border:1px solid #d8d0b0;box-sizing:border-box;"></div>
<div class="t" style="left:9px;top:201px;">0.00</div>
<div class="t" style="left:58px;top:201px;width:50px;text-align:center;">mm³/s</div>
<div class="t" style="right:9px;top:201px;">7.10</div>
<div class="abs" style="left:9px;top:221px;width:148px;height:23px;box-sizing:border-box;border:1px solid #b8b8c0;background:linear-gradient(90deg,#00007f 0%,#0000c8 7%,#0000ff 13%,#0080ff 25%,#00ffff 37%,#7fff7f 50%,#ffff00 63%,#ff8000 75%,#ff0000 87%,#c00000 94%,#7f0000 100%);"></div>
</div>
<div class="abs" style="left:1262px;top:679px;width:20px;height:114px;background:#fff;border-top:1px solid #d0d0d0;border-bottom:1px solid #d0d0d0;"></div>
<div class="abs" style="left:1262px;top:753px;width:13px;height:26px;background:#196ef0;"></div>
<svg class="ic" style="left:1257px;top:696px" width="18" height="18" viewBox="0 0 18 18"><circle cx="9" cy="9" r="6.6" fill="none" stroke="#10104a" stroke-width="1.5"/><rect x="8.2" y="7.6" width="1.7" height="5" fill="#10104a"/><rect x="8.2" y="4.8" width="1.7" height="1.8" fill="#10104a"/></svg>
<div class="abs" style="left:1279px;top:205px;width:8px;height:18px;box-sizing:border-box;border:1px solid #c9c9c9;border-radius:2px;background:#fff;"></div>
<div class="panel" style="left:861px;top:153px;width:401px;height:641px;">
<div class="phead" style="height:31px;"></div>
<div class="ptitle" style="left:10px;top:8px;line-height:14px;">Print settings</div>
<svg class="ic" style="left:379px;top:10px" width="10" height="10" viewBox="0 0 10 10"><path d="M1.7 1.7L8.3 8.3M8.3 1.7L1.7 8.3" stroke="#5c5c5c" stroke-width="1" fill="none"/></svg>
<div class="t" style="left:10px;top:47px;font-size:11px;letter-spacing:.3px;line-height:14px;height:14px;">Profile</div>
<div class="abs" style="left:94px;top:42px;width:295px;height:23px;box-sizing:border-box;border:1px solid #c9c9c9;border-radius:3px;"></div>
<div class="t" style="left:104px;top:48px;">Eddie PLA<span style="color:#c4c4c4"> - Draft - 0.2mm</span></div>
<svg class="ic" style="left:345px;top:48px" width="12" height="12" viewBox="0 0 12 12"><path d="M6 0.8L7.5 4.3L11.3 4.6L8.4 7.1L9.3 10.8L6 8.8L2.7 10.8L3.6 7.1L0.7 4.6L4.5 4.3Z" fill="#404040"/></svg>
<svg class="ic" style="left:368px;top:50px" width="10" height="8" viewBox="0 0 10 8"><path d="M1.5 1.8L5 5.4L8.5 1.8" stroke="#5c5c5c" stroke-width="1" fill="none"/></svg>
<div class="abs" style="left:21px;top:75px;width:310px;height:26px;box-sizing:border-box;border:1px solid #c9c9c9;border-radius:2px;"></div>
<svg class="ic" style="left:31px;top:80px" width="16" height="16" viewBox="0 0 16 16"><circle cx="9.3" cy="6.6" r="4" stroke="#303030" stroke-width="1.3" fill="none"/><path d="M6.4 9.6L2.3 13.7" stroke="#303030" stroke-width="1.5" fill="none"/></svg>
<div class="t it" style="left:58px;top:83px;font-size:10.3px;letter-spacing:.28px;color:#9a9a9a;">Search settings</div>
<svg class="ic" style="left:343px;top:80px" width="18" height="17" viewBox="0 0 18 17"><path d="M1 2H17M1 8.5H17M1 15H17" stroke="#404040" stroke-width="1.3" fill="none"/></svg>
<div class="abs" style="left:374px;top:112px;width:8px;height:222px;border-radius:4px;background:#0a0850;"></div>
<div class="cat" style="top:113px;"><svg class="ic" style="left:10px;top:2px" width="17" height="17" viewBox="0 0 17 17"><path d="M1 1H5.5V3H1ZM1 5.3H10V8.3H1ZM1 10.6H16.5V16H1Z" fill="#111"/></svg><b>Quality</b><svg class="ic" style="left:325px;top:7px" width="10" height="8" viewBox="0 0 10 8"><path d="M1.5 1.8L5 5.4L8.5 1.8" stroke="#5c5c5c" stroke-width="1" fill="none"/></svg></div>
<div class="t it" style="left:29px;top:141px;">Layer Height</div>
<svg class="ic" style="left:202.7px;top:139.5px" width="14" height="14" viewBox="0 0 24 24"><g fill="none" stroke="#6e6e6e" stroke-width="2.1" stroke-linecap="round" stroke-linejoin="round"><path d="M10 13a5 5 0 0 0 7.54.54l3-3a5 5 0 0 0-7.07-7.07l-1.72 1.71"/><path d="M14 11a5 5 0 0 0-7.54-.54l-3 3a5 5 0 0 0 7.07 7.07l1.71-1.71"/></g></svg>
<svg class="ic" style="left:226.3px;top:139.5px" width="14" height="14" viewBox="0 0 14 14"><path d="M6.6 3.4H7.4A4.6 4.6 0 1 1 2.8 8.4" fill="none" stroke="#6a6a6a" stroke-width="1.35" stroke-linecap="round"/><path d="M2.9 3.4L6.8 0.9V5.9Z" fill="#6a6a6a"/></svg>
<div class="inp" style="top:136px;"><span class="v">0.1</span><span class="u">mm</span></div>
<div class="t" style="left:29px;top:163px;">Initial Layer Height</div>
<svg class="ic" style="left:226.3px;top:161.5px" width="14" height="14" viewBox="0 0 24 24"><g fill="none" stroke="#6e6e6e" stroke-width="2.1" stroke-linecap="round" stroke-linejoin="round"><path d="M10 13a5 5 0 0 0 7.54.54l3-3a5 5 0 0 0-7.07-7.07l-1.72 1.71"/><path d="M14 11a5 5 0 0 0-7.54-.54l-3 3a5 5 0 0 0 7.07 7.07l1.71-1.71"/></g></svg>
<div class="inp" style="top:158px;"><span class="v">0.3</span><span class="u">mm</span></div>
<div class="t it" style="left:29px;top:186px;">Line Width</div>
<div class="inp" style="top:181px;"><span class="v">0.4</span><span class="u">mm</span></div>
<div class="t" style="left:44px;top:209px;">Wall Line Width</div>
<div class="inp" style="top:204px;"><span class="v">0.4</span><span class="u">mm</span></div>
<div class="t" style="left:59px;top:232px;">Outer Wall Line Width</div>
<div class="inp" style="top:227px;"><span class="v">0.4</span><span class="u">mm</span></div>
<div class="t" style="left:59px;top:255px;">Inner Wall(s) Line Width</div>
<div class="inp" style="top:250px;"><span class="v">0.4</span><span class="u">mm</span></div>
<div class="t" style="left:44px;top:278px;">Top/Bottom Line Width</div>
<div class="inp" style="top:273px;"><span class="v">0.4</span><span class="u">mm</span></div>
<div class="t" style="left:44px;top:301px;">Infill Line Width</div>
<div class="inp" style="top:296px;"><span class="v">0.4</span><span class="u">mm</span></div>
<div class="t" style="left:44px;top:324px;">Support Line Width</div>
<svg class="ic" style="left:226.3px;top:322.5px" width="14" height="14" viewBox="0 0 24 24"><g fill="none" stroke="#6e6e6e" stroke-width="2.1" stroke-linecap="round" stroke-linejoin="round"><path d="M10 13a5 5 0 0 0 7.54.54l3-3a5 5 0 0 0-7.07-7.07l-1.72 1.71"/><path d="M14 11a5 5 0 0 0-7.54-.54l-3 3a5 5 0 0 0 7.07 7.07l1.71-1.71"/></g></svg>
<div class="inp" style="top:319px;"><span class="v">0.4</span><span class="u">mm</span></div>
<div class="t" style="left:59px;top:347px;">Support Floor Line Width</div>
<svg class="ic" style="left:226.3px;top:345.5px" width="14" height="14" viewBox="0 0 24 24"><g fill="none" stroke="#6e6e6e" stroke-width="2.1" stroke-linecap="round" stroke-linejoin="round"><path d="M10 13a5 5 0 0 0 7.54.54l3-3a5 5 0 0 0-7.07-7.07l-1.72 1.71"/><path d="M14 11a5 5 0 0 0-7.54-.54l-3 3a5 5 0 0 0 7.07 7.07l1.71-1.71"/></g></svg>
<div class="inp" style="top:342px;"><span class="v">0.4</span><span class="u">mm</span></div>
<div class="t" style="left:29px;top:369px;">Initial Layer Line Width</div>
<div class="inp" style="top:364px;"><span class="v">140.0</span><span class="u">%</span></div>
<div class="cat" style="top:387px;"><svg class="ic" style="left:9px;top:2px" width="17" height="17" viewBox="0 0 17 17"><rect x="1" y="1" width="15" height="15" rx="2.5" fill="none" stroke="#111" stroke-width="1.4"/><g fill="#111"><rect x="4" y="4" width="1.6" height="1.6"/><rect x="7.7" y="4" width="1.6" height="1.6"/><rect x="11.4" y="4" width="1.6" height="1.6"/><rect x="4" y="7.7" width="1.6" height="1.6"/><rect x="7.7" y="7.7" width="1.6" height="1.6"/><rect x="11.4" y="7.7" width="1.6" height="1.6"/><rect x="4" y="11.4" width="1.6" height="1.6"/><rect x="7.7" y="11.4" width="1.6" height="1.6"/><rect x="11.4" y="11.4" width="1.6" height="1.6"/></g></svg><b>Walls</b><svg class="ic" style="left:325px;top:7px" width="10" height="8" viewBox="0 0 10 8"><path d="M1.5 1.8L5 5.4L8.5 1.8" stroke="#5c5c5c" stroke-width="1" fill="none"/></svg></div>
<div class="t" style="left:29px;top:415px;">Wall Thickness</div>
<div class="t it" style="left:228px;top:411px;font-family:'Liberation Serif',serif;font-size:17px;color:#5a5a5a;letter-spacing:0;line-height:16px;height:18px;">f<span style="font-size:7px;font-style:normal;font-family:'Liberation Sans',sans-serif;font-weight:bold;position:relative;top:0px;left:-1px;">x</span></div>
<div class="inp" style="top:410px;"><span class="v">1.2</span><span class="u">mm</span></div>
<div class="t" style="left:44px;top:438px;">Wall Line Count</div>
<div class="inp" style="top:433px;"><span class="v">3</span><span class="u"></span></div>
<div class="t" style="left:29px;top:461px;">Outer Wall Wipe Distance</div>
<div class="inp" style="top:456px;"><span class="v">0.2</span><span class="u">mm</span></div>
<div class="t" style="left:29px;top:484px;">Outer Wall Inset</div>
<div class="inp" style="top:479px;"><span class="v">0.0</span><span class="u">mm</span></div>
<div class="t it" style="left:29px;top:507px;">Optimize Wall Printing Order</div>
<div class="cb2" style="left:251px;top:502px;"><svg width="19" height="19" viewBox="0 0 19 19"><path d="M6.8 9.6L8.7 11.4L12.3 7.7" stroke="#6a6a6a" stroke-width="1.1" fill="none"/></svg></div>
<div class="t" style="left:29px;top:530px;">Outer Before Inner Walls</div>
<div class="cb2" style="left:251px;top:525px;"></div>
<div class="t" style="left:29px;top:552px;">Alternate Extra Wall</div>
<div class="cb2" style="left:251px;top:547px;"></div>
<div class="t" style="left:29px;top:575px;">Compensate Wall Overlaps</div>
<div class="cb2" style="left:251px;top:570px;"><svg width="19" height="19" viewBox="0 0 19 19"><path d="M6.8 9.6L8.7 11.4L12.3 7.7" stroke="#6a6a6a" stroke-width="1.1" fill="none"/></svg></div>
<div class="abs" style="left:0;top:586px;width:401px;height:54px;background:#fff;border-top:1px solid #d0d0d0;"></div>
<div class="abs" style="left:10px;top:598px;width:117px;height:26px;box-sizing:border-box;border:1px solid #3b82f0;border-radius:2px;background:#fff;"></div>
<svg class="ic" style="left:21px;top:606px" width="8" height="10" viewBox="0 0 8 10"><path d="M5.6 1.4L2.2 5L5.6 8.6" stroke="#2f78ee" stroke-width="1.1" fill="none"/></svg>
<div class="t" style="left:36px;top:604px;font-size:11px;letter-spacing:.33px;line-height:14px;height:14px;color:#2472ee;">Recommended</div>
<div class="abs" style="left:0;top:634px;width:401px;height:6px;background:#ececec;border-top:1px solid #d0d0d0;"></div>
<div class="abs" style="left:195px;top:636px;width:9px;height:1px;background:#c0c0c0;"></div>
</div>
<svg class="ic" style="left:205px;top:778px" width="390" height="22" viewBox="0 0 390 22"><path d="M9.6 5.8L19.4 12.2L9.6 18.4Z" fill="none" stroke="#0a0844" stroke-width="1.5" stroke-linejoin="round"/><path d="M36 12.2H376" stroke="#0a0844" stroke-width="5" stroke-linecap="round"/><circle cx="376.3" cy="12.1" r="8" fill="#0a0844"/></svg>
</body></html>
